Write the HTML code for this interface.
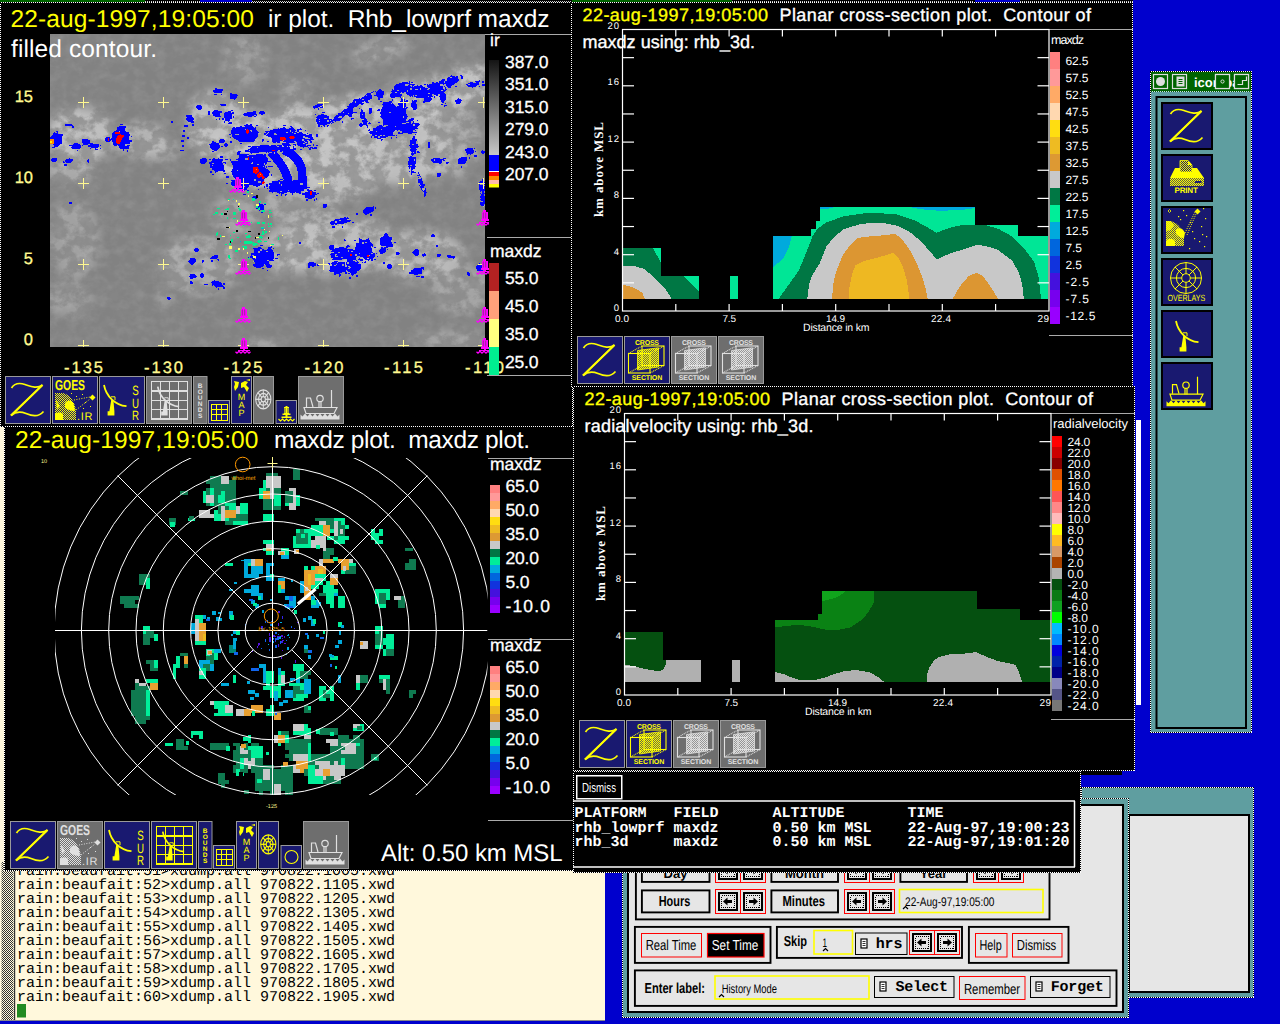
<!DOCTYPE html>
<html><head><meta charset="utf-8"><title>zeb display</title>
<style>html,body{margin:0;padding:0;background:#0000cd;overflow:hidden}svg{display:block}text{text-rendering:geometricPrecision}</style></head>
<body>
<svg width="1280" height="1024" viewBox="0 0 1280 1024">
<defs>
<pattern id="dith" width="2" height="2" patternUnits="userSpaceOnUse"><rect width="2" height="2" fill="#fff8dc"/><rect width="1" height="1" fill="#333"/><rect x="1" y="1" width="1" height="1" fill="#333"/></pattern>
<pattern id="dith2" width="2" height="2" patternUnits="userSpaceOnUse"><rect width="2" height="2" fill="#e6e6e6"/><rect width="1" height="1" fill="#000"/><rect x="1" y="1" width="1" height="1" fill="#000"/></pattern>
<pattern id="dithy" width="2" height="2" patternUnits="userSpaceOnUse"><rect width="1" height="1" fill="#ffff00"/><rect x="1" y="1" width="1" height="1" fill="#ffff00"/></pattern>
<pattern id="dithw" width="2" height="2" patternUnits="userSpaceOnUse"><rect width="1" height="1" fill="#e0e0e0"/><rect x="1" y="1" width="1" height="1" fill="#e0e0e0"/></pattern>
<linearGradient id="irg" x1="0" y1="0" x2="0" y2="1"><stop offset="0" stop-color="#141414"/><stop offset="1" stop-color="#c8c8c8"/></linearGradient>

<clipPath id="irclip"><rect x="50" y="34" width="435" height="313"/></clipPath>
<filter id="cloudtex" x="0" y="0" width="100%" height="100%" color-interpolation-filters="sRGB">
<feTurbulence type="fractalNoise" baseFrequency="0.075 0.085" numOctaves="5" seed="11" result="n"/>
<feColorMatrix in="n" type="matrix" values="0 0 0 0 1  0 0 0 0 1  0 0 0 0 1  4.2 0 0 0 -1.75"/>
</filter>
<filter id="finetex" x="0" y="0" width="100%" height="100%" color-interpolation-filters="sRGB">
<feTurbulence type="fractalNoise" baseFrequency="0.09 0.11" numOctaves="3" seed="5" result="n"/>
<feColorMatrix in="n" type="matrix" values="0 0 0 0 1  0 0 0 0 1  0 0 0 0 1  1.6 0 0 0 -0.62"/>
</filter>
<filter id="blur8"><feGaussianBlur stdDeviation="8"/></filter>
<filter id="blur5"><feGaussianBlur stdDeviation="5"/></filter>
<filter id="blur3"><feGaussianBlur stdDeviation="2.5"/></filter>
<mask id="cloudmask" maskUnits="userSpaceOnUse" x="50" y="34" width="435" height="313">
<rect x="50" y="34" width="435" height="313" fill="#141414"/>
<g filter="url(#blur5)" fill="#fff">
<ellipse cx="80" cy="135" rx="34" ry="28" transform="rotate(0 80 135)" opacity="0.9"/>
<ellipse cx="70" cy="170" rx="25" ry="14" transform="rotate(0 70 170)" opacity="0.6"/>
<ellipse cx="140" cy="140" rx="30" ry="18" transform="rotate(0 140 140)" opacity="0.7"/>
<ellipse cx="160" cy="150" rx="20" ry="12" transform="rotate(0 160 150)" opacity="0.5"/>
<ellipse cx="215" cy="125" rx="30" ry="35" transform="rotate(0 215 125)" opacity="0.9"/>
<ellipse cx="250" cy="150" rx="40" ry="40" transform="rotate(0 250 150)" opacity="1.0"/>
<ellipse cx="300" cy="140" rx="45" ry="35" transform="rotate(0 300 140)" opacity="1.0"/>
<ellipse cx="350" cy="125" rx="50" ry="30" transform="rotate(-15 350 125)" opacity="1.0"/>
<ellipse cx="410" cy="105" rx="50" ry="25" transform="rotate(-20 410 105)" opacity="1.0"/>
<ellipse cx="465" cy="85" rx="30" ry="20" transform="rotate(-20 465 85)" opacity="1.0"/>
<ellipse cx="400" cy="150" rx="50" ry="35" transform="rotate(0 400 150)" opacity="0.9"/>
<ellipse cx="340" cy="170" rx="45" ry="30" transform="rotate(0 340 170)" opacity="0.9"/>
<ellipse cx="450" cy="140" rx="30" ry="40" transform="rotate(0 450 140)" opacity="0.6"/>
<ellipse cx="300" cy="200" rx="40" ry="25" transform="rotate(0 300 200)" opacity="0.6"/>
<ellipse cx="340" cy="245" rx="60" ry="30" transform="rotate(0 340 245)" opacity="0.9"/>
<ellipse cx="420" cy="255" rx="45" ry="25" transform="rotate(0 420 255)" opacity="0.8"/>
<ellipse cx="290" cy="250" rx="30" ry="25" transform="rotate(0 290 250)" opacity="0.7"/>
<ellipse cx="460" cy="290" rx="30" ry="25" transform="rotate(0 460 290)" opacity="0.5"/>
<ellipse cx="200" cy="265" rx="40" ry="30" transform="rotate(0 200 265)" opacity="0.6"/>
<ellipse cx="75" cy="240" rx="25" ry="40" transform="rotate(0 75 240)" opacity="0.45"/>
<ellipse cx="70" cy="300" rx="25" ry="18" transform="rotate(0 70 300)" opacity="0.4"/>
<ellipse cx="235" cy="215" rx="25" ry="20" transform="rotate(0 235 215)" opacity="0.5"/>
<ellipse cx="245" cy="60" rx="22" ry="25" transform="rotate(0 245 60)" opacity="0.4"/>
<ellipse cx="380" cy="50" rx="30" ry="12" transform="rotate(-15 380 50)" opacity="0.5"/>
<ellipse cx="295" cy="90" rx="14" ry="16" transform="rotate(30 295 90)" opacity="0.4"/>
<ellipse cx="450" cy="340" rx="35" ry="10" transform="rotate(0 450 340)" opacity="0.5"/>
<ellipse cx="165" cy="300" rx="12" ry="10" transform="rotate(0 165 300)" opacity="0.3"/>
<ellipse cx="260" cy="345" rx="20" ry="6" transform="rotate(0 260 345)" opacity="0.6"/>
</g>
</mask>
<clipPath id="bclip"><rect x="470" y="34" width="19" height="330"/></clipPath><clipPath id="rclip"><rect x="55" y="458" width="432.5" height="337"/></clipPath>
</defs>
<rect x="0" y="0" width="1280" height="1024" fill="#0000cd" />
<rect x="0" y="0" width="145" height="2" fill="#006400" />
<rect x="572" y="0" width="160" height="2" fill="#006400" />
<rect x="145" y="0" width="55" height="3" fill="#000" />
<rect x="252" y="0" width="320" height="3" fill="#000" />
<rect x="732" y="0" width="243" height="3" fill="#000" />
<rect x="1020" y="0" width="113" height="3" fill="#000" />
<line x1="145" y1="1.5" x2="200" y2="1.5" stroke="#ccc" stroke-width="1" stroke-dasharray="1 1"/>
<line x1="252" y1="1.5" x2="572" y2="1.5" stroke="#ccc" stroke-width="1" stroke-dasharray="1 1"/>
<line x1="732" y1="1.5" x2="974" y2="1.5" stroke="#ccc" stroke-width="1" stroke-dasharray="1 1"/>
<line x1="1020" y1="1.5" x2="1133" y2="1.5" stroke="#ccc" stroke-width="1" stroke-dasharray="1 1"/>
<rect x="0" y="427" width="605" height="594" fill="#fff8dc" />
<rect x="1.5" y="862" width="12" height="159" fill="url(#dith)"/>
<rect x="14" y="870" width="1.2" height="151" fill="#333" />
<text x="17" y="875" font-size="15" fill="#000" font-family='"Liberation Mono", monospace' textLength="378" lengthAdjust="spacing" style="white-space:pre">rain:beaufait:51&gt;xdump.all 970822.1005.xwd</text>
<text x="17" y="889" font-size="15" fill="#000" font-family='"Liberation Mono", monospace' textLength="378" lengthAdjust="spacing" style="white-space:pre">rain:beaufait:52&gt;xdump.all 970822.1105.xwd</text>
<text x="17" y="903" font-size="15" fill="#000" font-family='"Liberation Mono", monospace' textLength="378" lengthAdjust="spacing" style="white-space:pre">rain:beaufait:53&gt;xdump.all 970822.1205.xwd</text>
<text x="17" y="917" font-size="15" fill="#000" font-family='"Liberation Mono", monospace' textLength="378" lengthAdjust="spacing" style="white-space:pre">rain:beaufait:54&gt;xdump.all 970822.1305.xwd</text>
<text x="17" y="931" font-size="15" fill="#000" font-family='"Liberation Mono", monospace' textLength="378" lengthAdjust="spacing" style="white-space:pre">rain:beaufait:55&gt;xdump.all 970822.1405.xwd</text>
<text x="17" y="945" font-size="15" fill="#000" font-family='"Liberation Mono", monospace' textLength="378" lengthAdjust="spacing" style="white-space:pre">rain:beaufait:56&gt;xdump.all 970822.1505.xwd</text>
<text x="17" y="959" font-size="15" fill="#000" font-family='"Liberation Mono", monospace' textLength="378" lengthAdjust="spacing" style="white-space:pre">rain:beaufait:57&gt;xdump.all 970822.1605.xwd</text>
<text x="17" y="973" font-size="15" fill="#000" font-family='"Liberation Mono", monospace' textLength="378" lengthAdjust="spacing" style="white-space:pre">rain:beaufait:58&gt;xdump.all 970822.1705.xwd</text>
<text x="17" y="987" font-size="15" fill="#000" font-family='"Liberation Mono", monospace' textLength="378" lengthAdjust="spacing" style="white-space:pre">rain:beaufait:59&gt;xdump.all 970822.1805.xwd</text>
<text x="17" y="1001" font-size="15" fill="#000" font-family='"Liberation Mono", monospace' textLength="378" lengthAdjust="spacing" style="white-space:pre">rain:beaufait:60&gt;xdump.all 970822.1905.xwd</text>
<rect x="17" y="1004" width="9" height="13.5" fill="#228b22" />
<rect x="0" y="1020" width="605" height="1" fill="#888" />
<rect x="1081" y="787" width="173" height="211" fill="#5f9ea0" />
<rect x="1081.5" y="787.5" width="172" height="210" fill="none" stroke="#000" stroke-width="1" shape-rendering="crispEdges"/>
<rect x="1081.5" y="787.5" width="172" height="210" fill="none" stroke="#fff" stroke-width="1" stroke-dasharray="1 1" shape-rendering="crispEdges"/>
<rect x="1128" y="814" width="122" height="179" fill="#000" />
<rect x="1130" y="816" width="118" height="175" fill="#e6e6e6" />
<rect x="622" y="798" width="507" height="220" fill="#5f9ea0" />
<rect x="622.5" y="798.5" width="506" height="219" fill="none" stroke="#000" stroke-width="1" shape-rendering="crispEdges"/>
<rect x="622.5" y="798.5" width="506" height="219" fill="none" stroke="#fff" stroke-width="1" stroke-dasharray="1 1" shape-rendering="crispEdges"/>
<rect x="627" y="804" width="497" height="209" fill="#000" />
<rect x="629" y="806" width="493" height="205" fill="#e6e6e6" />
<rect x="635.9" y="830.9" width="413.6" height="88.5" fill="none" stroke="#000" stroke-width="1.9"/>
<rect x="641.9" y="860.9" width="67.6" height="21.0" fill="none" stroke="#000" stroke-width="1.9"/>
<text x="675.5" y="878" font-size="13" fill="#000" font-family='"Liberation Sans", sans-serif' font-weight="bold" text-anchor="middle" style="white-space:pre">Day</text>
<rect x="771.4" y="860.9" width="66.6" height="21.0" fill="none" stroke="#000" stroke-width="1.9"/>
<text x="804.5" y="878" font-size="13" fill="#000" font-family='"Liberation Sans", sans-serif' font-weight="bold" text-anchor="middle" style="white-space:pre">Month</text>
<rect x="900.4" y="860.9" width="66.6" height="21.0" fill="none" stroke="#000" stroke-width="1.9"/>
<text x="933.5" y="878" font-size="13" fill="#000" font-family='"Liberation Sans", sans-serif' font-weight="bold" text-anchor="middle" style="white-space:pre">Year</text>
<rect x="715.5" y="858.5" width="25" height="24" fill="#e6e6e6" stroke="#ff0000" stroke-width="1" shape-rendering="crispEdges"/>
<rect x="719" y="862" width="18" height="17" fill="#e6e6e6" stroke="#000" stroke-width="2" shape-rendering="crispEdges"/>
<rect x="721.5" y="864.5" width="13" height="12" fill="none" stroke="#000" stroke-width="1" stroke-dasharray="1 1" shape-rendering="crispEdges"/>
<path d="M723.0 870.5l4.5 -4v2.6h4.5v2.8h-4.5v2.6z" fill="#000"/>
<rect x="740.5" y="858.5" width="25" height="24" fill="#e6e6e6" stroke="#ff0000" stroke-width="1" shape-rendering="crispEdges"/>
<rect x="744" y="862" width="18" height="17" fill="#e6e6e6" stroke="#000" stroke-width="2" shape-rendering="crispEdges"/>
<rect x="746.5" y="864.5" width="13" height="12" fill="none" stroke="#000" stroke-width="1" stroke-dasharray="1 1" shape-rendering="crispEdges"/>
<path d="M758.0 870.5l-4.5 -4v2.6h-4.5v2.8h4.5v2.6z" fill="#000"/>
<rect x="844.5" y="858.5" width="25" height="24" fill="#e6e6e6" stroke="#ff0000" stroke-width="1" shape-rendering="crispEdges"/>
<rect x="848" y="862" width="18" height="17" fill="#e6e6e6" stroke="#000" stroke-width="2" shape-rendering="crispEdges"/>
<rect x="850.5" y="864.5" width="13" height="12" fill="none" stroke="#000" stroke-width="1" stroke-dasharray="1 1" shape-rendering="crispEdges"/>
<path d="M852.0 870.5l4.5 -4v2.6h4.5v2.8h-4.5v2.6z" fill="#000"/>
<rect x="869.5" y="858.5" width="25" height="24" fill="#e6e6e6" stroke="#ff0000" stroke-width="1" shape-rendering="crispEdges"/>
<rect x="873" y="862" width="18" height="17" fill="#e6e6e6" stroke="#000" stroke-width="2" shape-rendering="crispEdges"/>
<rect x="875.5" y="864.5" width="13" height="12" fill="none" stroke="#000" stroke-width="1" stroke-dasharray="1 1" shape-rendering="crispEdges"/>
<path d="M887.0 870.5l-4.5 -4v2.6h-4.5v2.8h4.5v2.6z" fill="#000"/>
<rect x="973.5" y="858.5" width="25" height="24" fill="#e6e6e6" stroke="#ff0000" stroke-width="1" shape-rendering="crispEdges"/>
<rect x="977" y="862" width="18" height="17" fill="#e6e6e6" stroke="#000" stroke-width="2" shape-rendering="crispEdges"/>
<rect x="979.5" y="864.5" width="13" height="12" fill="none" stroke="#000" stroke-width="1" stroke-dasharray="1 1" shape-rendering="crispEdges"/>
<path d="M981.0 870.5l4.5 -4v2.6h4.5v2.8h-4.5v2.6z" fill="#000"/>
<rect x="998.5" y="858.5" width="25" height="24" fill="#e6e6e6" stroke="#ff0000" stroke-width="1" shape-rendering="crispEdges"/>
<rect x="1002" y="862" width="18" height="17" fill="#e6e6e6" stroke="#000" stroke-width="2" shape-rendering="crispEdges"/>
<rect x="1004.5" y="864.5" width="13" height="12" fill="none" stroke="#000" stroke-width="1" stroke-dasharray="1 1" shape-rendering="crispEdges"/>
<path d="M1016.0 870.5l-4.5 -4v2.6h-4.5v2.8h4.5v2.6z" fill="#000"/>
<rect x="641.9" y="890.4" width="67.6" height="22.0" fill="none" stroke="#000" stroke-width="1.9"/>
<text x="674.5" y="906" font-size="14.5" fill="#000" font-family='"Liberation Sans", sans-serif' font-weight="bold" text-anchor="middle" textLength="31.5" lengthAdjust="spacingAndGlyphs" style="white-space:pre">Hours</text>
<rect x="771.4" y="890.4" width="66.6" height="22.0" fill="none" stroke="#000" stroke-width="1.9"/>
<text x="803.75" y="906" font-size="14.5" fill="#000" font-family='"Liberation Sans", sans-serif' font-weight="bold" text-anchor="middle" textLength="42.5" lengthAdjust="spacingAndGlyphs" style="white-space:pre">Minutes</text>
<rect x="715.5" y="889.5" width="25" height="24" fill="#e6e6e6" stroke="#ff0000" stroke-width="1" shape-rendering="crispEdges"/>
<rect x="719" y="893" width="18" height="17" fill="#e6e6e6" stroke="#000" stroke-width="2" shape-rendering="crispEdges"/>
<rect x="721.5" y="895.5" width="13" height="12" fill="none" stroke="#000" stroke-width="1" stroke-dasharray="1 1" shape-rendering="crispEdges"/>
<path d="M723.0 901.5l4.5 -4v2.6h4.5v2.8h-4.5v2.6z" fill="#000"/>
<rect x="740.5" y="889.5" width="25" height="24" fill="#e6e6e6" stroke="#ff0000" stroke-width="1" shape-rendering="crispEdges"/>
<rect x="744" y="893" width="18" height="17" fill="#e6e6e6" stroke="#000" stroke-width="2" shape-rendering="crispEdges"/>
<rect x="746.5" y="895.5" width="13" height="12" fill="none" stroke="#000" stroke-width="1" stroke-dasharray="1 1" shape-rendering="crispEdges"/>
<path d="M758.0 901.5l-4.5 -4v2.6h-4.5v2.8h4.5v2.6z" fill="#000"/>
<rect x="844.5" y="889.5" width="25" height="24" fill="#e6e6e6" stroke="#ff0000" stroke-width="1" shape-rendering="crispEdges"/>
<rect x="848" y="893" width="18" height="17" fill="#e6e6e6" stroke="#000" stroke-width="2" shape-rendering="crispEdges"/>
<rect x="850.5" y="895.5" width="13" height="12" fill="none" stroke="#000" stroke-width="1" stroke-dasharray="1 1" shape-rendering="crispEdges"/>
<path d="M852.0 901.5l4.5 -4v2.6h4.5v2.8h-4.5v2.6z" fill="#000"/>
<rect x="869.5" y="889.5" width="25" height="24" fill="#e6e6e6" stroke="#ff0000" stroke-width="1" shape-rendering="crispEdges"/>
<rect x="873" y="893" width="18" height="17" fill="#e6e6e6" stroke="#000" stroke-width="2" shape-rendering="crispEdges"/>
<rect x="875.5" y="895.5" width="13" height="12" fill="none" stroke="#000" stroke-width="1" stroke-dasharray="1 1" shape-rendering="crispEdges"/>
<path d="M887.0 901.5l-4.5 -4v2.6h-4.5v2.8h4.5v2.6z" fill="#000"/>
<rect x="899.5" y="889.5" width="143.5" height="23" fill="none" stroke="#ffff00" stroke-width="1.6"/>
<text x="905" y="906" font-size="12.5" fill="#000" font-family='"Liberation Sans", sans-serif' textLength="89.5" lengthAdjust="spacingAndGlyphs" style="white-space:pre">22-Aug-97,19:05:00</text>
<path d="M903 909l2.5-2.5 2.5 2.5" fill="none" stroke="#000" stroke-width="1.2"/>
<rect x="634.9" y="926.9" width="135.6" height="36.0" fill="none" stroke="#000" stroke-width="1.9"/>
<rect x="641.5" y="933.5" width="60" height="23.5" fill="none" stroke="#ff0000" stroke-width="1"/>
<text x="671" y="950" font-size="14.5" fill="#000" font-family='"Liberation Sans", sans-serif' text-anchor="middle" textLength="50.75" lengthAdjust="spacingAndGlyphs" style="white-space:pre">Real Time</text>
<rect x="707.5" y="933.5" width="56.5" height="23.5" fill="#000" stroke="#ff0000" stroke-width="1.2"/>
<text x="735" y="950" font-size="14.5" fill="#fff" font-family='"Liberation Sans", sans-serif' text-anchor="middle" textLength="46.5" lengthAdjust="spacingAndGlyphs" style="white-space:pre">Set Time</text>
<rect x="776.9" y="926.9" width="185.1" height="31.0" fill="none" stroke="#000" stroke-width="1.9"/>
<text x="783.75" y="946" font-size="14.5" fill="#000" font-family='"Liberation Sans", sans-serif' font-weight="bold" textLength="23.25" lengthAdjust="spacingAndGlyphs" style="white-space:pre">Skip</text>
<rect x="814" y="930.5" width="38.5" height="23.5" fill="none" stroke="#ffff00" stroke-width="1.6"/>
<text x="822.5" y="946.5" font-size="12.5" fill="#000" font-family='"Liberation Sans", sans-serif' textLength="4.5" lengthAdjust="spacingAndGlyphs" style="white-space:pre">1</text>
<path d="M823 951l2.5-2.5 2.5 2.5" fill="none" stroke="#000" stroke-width="1.2"/>
<rect x="855.5" y="933" width="51.5" height="21.5" fill="none" stroke="#000" stroke-width="1"/>
<rect x="861" y="939" width="6" height="9" fill="#fff" stroke="#000" stroke-width="1.2"/>
<path d="M862.5 941.5h3M862.5 943.5h3M862.5 945.5h3" stroke="#000" stroke-width="0.8"/>
<text x="875.75" y="948" font-size="15" fill="#000" font-family='"Liberation Mono", monospace' font-weight="bold" textLength="26.75" lengthAdjust="spacing" style="white-space:pre">hrs</text>
<rect x="909.5" y="930.5" width="25" height="24" fill="#e6e6e6" stroke="#ff0000" stroke-width="1" shape-rendering="crispEdges"/>
<rect x="913" y="934" width="18" height="17" fill="#e6e6e6" stroke="#000" stroke-width="2" shape-rendering="crispEdges"/>
<rect x="915.5" y="936.5" width="13" height="12" fill="none" stroke="#000" stroke-width="1" stroke-dasharray="1 1" shape-rendering="crispEdges"/>
<path d="M917.0 942.5l4.5 -4v2.6h4.5v2.8h-4.5v2.6z" fill="#000"/>
<rect x="934.5" y="930.5" width="25" height="24" fill="#e6e6e6" stroke="#ff0000" stroke-width="1" shape-rendering="crispEdges"/>
<rect x="938" y="934" width="18" height="17" fill="#e6e6e6" stroke="#000" stroke-width="2" shape-rendering="crispEdges"/>
<rect x="940.5" y="936.5" width="13" height="12" fill="none" stroke="#000" stroke-width="1" stroke-dasharray="1 1" shape-rendering="crispEdges"/>
<path d="M952.0 942.5l-4.5 -4v2.6h-4.5v2.8h4.5v2.6z" fill="#000"/>
<rect x="968.9" y="926.9" width="99.6" height="36.0" fill="none" stroke="#000" stroke-width="1.9"/>
<rect x="975.5" y="933.5" width="31.5" height="23.5" fill="none" stroke="#ff0000" stroke-width="1"/>
<text x="990.6" y="950" font-size="14.5" fill="#000" font-family='"Liberation Sans", sans-serif' text-anchor="middle" textLength="22.25" lengthAdjust="spacingAndGlyphs" style="white-space:pre">Help</text>
<rect x="1012.5" y="933.5" width="49.5" height="23.5" fill="none" stroke="#ff0000" stroke-width="1"/>
<text x="1036.5" y="950" font-size="14.5" fill="#000" font-family='"Liberation Sans", sans-serif' text-anchor="middle" textLength="39.5" lengthAdjust="spacingAndGlyphs" style="white-space:pre">Dismiss</text>
<rect x="634.9" y="970.4" width="481.6" height="35.5" fill="none" stroke="#000" stroke-width="1.9"/>
<text x="644.5" y="993" font-size="14.5" fill="#000" font-family='"Liberation Sans", sans-serif' font-weight="bold" textLength="60.5" lengthAdjust="spacingAndGlyphs" style="white-space:pre">Enter label:</text>
<rect x="715" y="976" width="154" height="23" fill="none" stroke="#ffff00" stroke-width="1.6"/>
<text x="721.75" y="992.5" font-size="12.5" fill="#000" font-family='"Liberation Sans", sans-serif' textLength="55.25" lengthAdjust="spacingAndGlyphs" style="white-space:pre">History Mode</text>
<path d="M719 997l2.5-2.5 2.5 2.5" fill="none" stroke="#000" stroke-width="1.2"/>
<rect x="874.5" y="976.5" width="79.5" height="21" fill="none" stroke="#000" stroke-width="1"/>
<rect x="880" y="982" width="6" height="9" fill="#fff" stroke="#000" stroke-width="1.2"/>
<path d="M881.5 984.5h3M881.5 986.5h3M881.5 988.5h3" stroke="#000" stroke-width="0.8"/>
<text x="895.5" y="990.5" font-size="15" fill="#000" font-family='"Liberation Mono", monospace' font-weight="bold" textLength="52.5" lengthAdjust="spacing" style="white-space:pre">Select</text>
<rect x="959.5" y="976.5" width="65.5" height="23" fill="none" stroke="#ff0000" stroke-width="1"/>
<text x="992" y="993.75" font-size="14.5" fill="#000" font-family='"Liberation Sans", sans-serif' text-anchor="middle" textLength="56.25" lengthAdjust="spacingAndGlyphs" style="white-space:pre">Remember</text>
<rect x="1030.5" y="976.5" width="79.5" height="21" fill="none" stroke="#000" stroke-width="1"/>
<rect x="1036" y="982" width="6" height="9" fill="#fff" stroke="#000" stroke-width="1.2"/>
<path d="M1037.5 984.5h3M1037.5 986.5h3M1037.5 988.5h3" stroke="#000" stroke-width="0.8"/>
<text x="1050.75" y="990.5" font-size="15" fill="#000" font-family='"Liberation Mono", monospace' font-weight="bold" textLength="53" lengthAdjust="spacing" style="white-space:pre">Forget</text>
<rect x="1150" y="71" width="102" height="662" fill="#5f9ea0" />
<rect x="1150" y="71" width="102" height="21" fill="#006400" />
<rect x="1150.5" y="71.5" width="101" height="661" fill="none" stroke="#000" stroke-width="1" shape-rendering="crispEdges"/>
<rect x="1150.5" y="71.5" width="101" height="661" fill="none" stroke="#fff" stroke-width="1" stroke-dasharray="1 1" shape-rendering="crispEdges"/>
<line x1="1150" y1="91.5" x2="1252" y2="91.5" stroke="#cde" stroke-width="1" stroke-dasharray="1 1"/>
<rect x="1153.5" y="74.5" width="14" height="14" fill="#006400" stroke="#ddd" stroke-width="1.2"/>
<rect x="1172.5" y="74.5" width="14" height="14" fill="#006400" stroke="#ddd" stroke-width="1.2"/>
<rect x="1215.5" y="74.5" width="14" height="14" fill="#006400" stroke="#ddd" stroke-width="1.2"/>
<rect x="1234.5" y="74.5" width="14" height="14" fill="#006400" stroke="#ddd" stroke-width="1.2"/>
<circle cx="1160.5" cy="81.5" r="4.5" fill="#ddd"/>
<rect x="1177" y="77" width="7" height="9" fill="#ddd" stroke="#ddd"/>
<path d="M1178.5 79.5h4M1178.5 81.5h4M1178.5 83.5h4" stroke="#006400" stroke-width="1"/>
<text x="1194" y="87" font-size="13" fill="#fff" font-family='"Liberation Sans", sans-serif' font-weight="bold" style="white-space:pre">icon bar</text>
<rect x="1215.5" y="74.5" width="14" height="14" fill="#006400" stroke="#ddd" stroke-width="1.2"/>
<rect x="1234.5" y="74.5" width="14" height="14" fill="#006400" stroke="#ddd" stroke-width="1.2"/>
<circle cx="1222.5" cy="81.5" r="1.6" fill="none" stroke="#ddd" stroke-width="1"/>
<path d="M1237.5 84.5h5v-4h4v-4" fill="none" stroke="#ddd" stroke-width="1.2"/>
<rect x="1156.5" y="97" width="89.5" height="631" fill="none" stroke="#000" stroke-width="2"/>
<rect x="1162" y="103" width="50" height="46" fill="#191970" stroke="#000" stroke-width="2"/>
<rect x="1162" y="155" width="50" height="46" fill="#191970" stroke="#000" stroke-width="2"/>
<rect x="1162" y="207" width="50" height="46" fill="#191970" stroke="#000" stroke-width="2"/>
<rect x="1162" y="259" width="50" height="46" fill="#191970" stroke="#000" stroke-width="2"/>
<rect x="1162" y="311" width="50" height="46" fill="#191970" stroke="#000" stroke-width="2"/>
<rect x="1162" y="363" width="50" height="46" fill="#191970" stroke="#000" stroke-width="2"/>
<g transform="translate(1161,102)">
<g transform="translate(3,0)">
<path d="M6.5 12C9 8 14 6.5 20 8.5S32 13 37.5 9L6 39.5C10 36 15 35 21 37.5S33 41.5 38.5 35.5" fill="none" stroke="#ffff00" stroke-width="1.7" stroke-linejoin="miter"/>
<path d="M37.5 9L6 39.5" stroke="#ffff00" stroke-width="2.1"/>
</g>
</g>
<g transform="translate(1161,154)">
<path d="M19 6.5h8l4 4.5v7h-12z" fill="url(#dithy)" stroke="#ffff00" stroke-width="0.8"/>
<path d="M27 6.5v4.5h4z" fill="#ffff00"/>
<path d="M14 14h5v4h12v-4h5l7 10h-34z" fill="#ffff00"/>
<rect x="9" y="24" width="34" height="8" fill="url(#dithy)"/>
<rect x="9" y="24" width="34" height="8" fill="#ffff00" opacity="0.3"/>
<rect x="34" y="27" width="6.5" height="2" fill="#191970"/>
<text x="25.2" y="39.2" font-size="8" fill="#ffff00" font-family='"Liberation Sans", sans-serif' font-weight="bold" text-anchor="middle" textLength="23.2" lengthAdjust="spacing" style="white-space:pre">PRINT</text>
</g>
<g transform="translate(1161,206)">
<path d="M5 15h4c9 2 14 10 14 20v5H5z" fill="url(#dithy)"/>
<path d="M5 15h4c9 2 14 10 14 20v5H5z" fill="#ffff00" opacity="0.25"/>
<path d="M15 24c3-3 7-2 9 3l-1 5c-4 0-6-2-8-4zM5 40v-5c2-3 7-3 9 0v5z" fill="#ffff00"/>
<path d="M5 15h5l3 4l-3 5l-5 1z" fill="#ffff00" opacity="0.8"/>
<path d="M24 27L34 6M26 29L35 8" stroke="#ffff00" stroke-width="1" stroke-dasharray="1 1.2"/>
<path d="M36.5 2.5l3 3l-3 3l-3-3z" fill="#ffff00"/>
<rect x="17" y="10" width="1.2" height="1.2" fill="#ffff00" />
<rect x="22" y="4" width="1.2" height="1.2" fill="#ffff00" />
<rect x="25" y="9" width="1.2" height="1.2" fill="#ffff00" />
<rect x="29" y="16" width="1.2" height="1.2" fill="#ffff00" />
<rect x="42" y="2" width="1.2" height="1.2" fill="#ffff00" />
<rect x="44" y="12" width="1.2" height="1.2" fill="#ffff00" />
<rect x="40" y="20" width="1.2" height="1.2" fill="#ffff00" />
<rect x="31" y="25" width="1.2" height="1.2" fill="#ffff00" />
<rect x="33" y="32" width="1.2" height="1.2" fill="#ffff00" />
<rect x="41" y="28" width="1.2" height="1.2" fill="#ffff00" />
<rect x="45" y="30" width="1.2" height="1.2" fill="#ffff00" />
<rect x="38" y="35" width="1.2" height="1.2" fill="#ffff00" />
<rect x="43" y="40" width="1.2" height="1.2" fill="#ffff00" />
<rect x="28" y="42" width="1.2" height="1.2" fill="#ffff00" />
<rect x="19" y="13" width="1.2" height="1.2" fill="#ffff00" />
<path d="M8.5 3.5l1.5 1.5l-1.5 1.5l-1.5-1.5z" fill="none" stroke="#ffff00" stroke-width="0.8"/>
</g>
<g transform="translate(1161,258)">
<g fill="none" stroke="#ffff00" stroke-width="1" transform="translate(0,0.00) scale(1,1.0)">
<circle cx="25" cy="20" r="15.5"/><circle cx="25" cy="20" r="9.6"/><circle cx="25" cy="20" r="4.3"/>
<path d="M29.3 20.0L40.5 20.0"/>
<path d="M28.1 23.1L36.0 31.0"/>
<path d="M25.0 24.3L25.0 35.5"/>
<path d="M21.9 23.1L14.0 31.0"/>
<path d="M20.7 20.0L9.5 20.0"/>
<path d="M21.9 16.9L14.0 9.0"/>
<path d="M25.0 15.7L25.0 4.5"/>
<path d="M28.1 16.9L36.0 9.0"/>
</g>
<text x="25.3" y="42.9" font-size="9" fill="#ffff00" font-family='"Liberation Sans", sans-serif' text-anchor="middle" textLength="37.6" lengthAdjust="spacingAndGlyphs" style="white-space:pre">OVERLAYS</text>
</g>
<g transform="translate(1161,310)">
<g transform="translate(10,2) scale(1.0)">
<path d="M5 9C7 20 16 29 27.5 30.2" fill="none" stroke="#ffff00" stroke-width="1.8"/>
<path d="M12 20.8h4v3.4" fill="none" stroke="#ffff00" stroke-width="1"/>
<path d="M12.2 24h2.2l1 11.2v4.3h-6.8v-4.3h1.8z" fill="#ffff00"/>
</g>
</g>
<g transform="translate(1161,362)">
<g transform="translate(3,-0.3)" fill="none" stroke="#ffff00" stroke-width="1.2">
<path d="M6 32.5h33l-3 6h-28z"/>
<path d="M8.5 32v-9h4l2.5 9"/>
<circle cx="22" cy="23.5" r="3.2"/><path d="M21 26.7v6M23 26.7v6"/>
<path d="M33.5 15v17.5"/>
<path d="M2.5 44.5v-5l2 2l2.5-3l2.5 3l2.5-3l2.5 3l2.5-3l2.5 3l2.5-3l2.5 3l2.5-3l2.5 3l2.5-3l2.5 3l2.5-3l2.5 3l2-2v5z" fill="#ffff00" stroke="none"/>
</g>
</g>
<rect x="0" y="2" width="573" height="425" fill="#000" />
<rect x="0.5" y="2.5" width="572" height="424" fill="none" stroke="#000" stroke-width="1" shape-rendering="crispEdges"/>
<rect x="0.5" y="2.5" width="572" height="424" fill="none" stroke="#fff" stroke-width="1" stroke-dasharray="1 1" shape-rendering="crispEdges"/>
<line x1="485" y1="34.5" x2="572" y2="34.5" stroke="#aaa" stroke-width="1" />
<line x1="487" y1="237.5" x2="572" y2="237.5" stroke="#aaa" stroke-width="1" />
<line x1="487" y1="375.5" x2="572" y2="375.5" stroke="#aaa" stroke-width="1" />
<rect x="50" y="34" width="435" height="313" fill="#808080" />
<g clip-path="url(#irclip)">
<rect x="50" y="34" width="435" height="313" fill="#fff" filter="url(#finetex)" opacity="0.10"/>
<g mask="url(#cloudmask)"><rect x="50" y="34" width="435" height="313" fill="#fff" filter="url(#cloudtex)" opacity="0.42"/><rect x="50" y="34" width="435" height="313" fill="#fff" opacity="0.19"/></g>
<g shape-rendering="crispEdges">
<polygon points="62.2,140.0 62.4,142.9 60.1,144.8 57.6,146.6 54.4,146.7 52.5,144.1 51.0,142.2 48.0,140.0 50.4,137.5 52.1,135.5 54.1,132.3 57.5,133.7 61.0,134.2 62.2,137.2" fill="#0000ff"/>
<polygon points="73.1,125.0 72.5,125.5 71.6,126.1 69.8,126.1 68.0,126.4 66.2,126.2 65.2,125.6 65.6,125.0 65.4,124.4 66.7,124.1 68.2,123.9 70.1,123.5 72.0,123.8 71.9,124.5" fill="#0000ff"/>
<polygon points="81.0,146.0 81.1,147.5 79.7,148.8 77.0,148.7 74.8,149.3 72.6,148.6 71.2,147.4 71.9,146.0 72.4,145.0 73.0,143.8 74.8,142.8 77.0,143.4 79.1,143.7 80.1,144.8" fill="#0000ff"/>
<polygon points="90.4,142.0 90.1,143.5 88.1,144.0 87.1,145.6 85.2,144.5 83.3,144.5 83.0,143.1 81.5,142.0 82.9,140.9 83.3,139.4 85.0,138.8 87.0,138.7 88.4,139.7 90.2,140.5" fill="#0000ff"/>
<polygon points="98.7,146.0 98.5,146.9 97.6,147.9 95.4,148.6 92.9,148.0 90.9,147.6 89.2,147.0 87.3,146.0 89.4,145.1 89.9,143.8 92.6,143.4 95.1,144.0 97.8,144.0 99.3,144.9" fill="#0000ff"/>
<polygon points="57.1,160.0 56.7,161.1 56.0,162.0 54.6,162.2 53.3,162.5 52.2,161.9 51.2,161.1 51.2,160.0 51.4,158.9 52.2,158.1 53.4,157.6 54.7,157.5 55.9,158.1 57.0,158.8" fill="#0000ff"/>
<polygon points="72.9,160.0 73.2,161.0 71.6,161.9 70.5,162.9 68.7,163.1 67.3,163.1 65.7,162.9 65.4,162.0 65.2,161.0 65.4,159.7 67.7,159.3 69.4,158.2 70.9,158.8 73.1,158.6" fill="#0000ff"/>
<polygon points="89.6,161.0 89.1,161.8 88.5,162.5 87.5,162.4 86.7,162.0 86.5,161.0 86.7,160.0 87.6,159.7 88.5,159.4 89.2,160.1" fill="#0000ff"/>
<polygon points="128.5,138.0 130.7,141.4 129.6,144.5 125.4,144.0 125.1,148.5 122.3,148.8 119.7,148.7 118.2,145.1 114.6,146.6 114.2,143.1 111.7,141.2 112.4,138.0 111.9,134.9 113.1,132.0 115.8,131.0 117.2,128.2 119.5,126.1 122.4,126.4 125.2,127.3 125.6,131.8 128.6,132.3 130.4,134.8" fill="#0000ff"/>
<polygon points="110.7,139.5 110.7,140.6 109.8,141.4 108.7,141.9 107.4,141.8 106.0,141.6 105.3,140.6 104.9,139.5 105.1,138.3 106.1,137.5 107.3,137.1 108.6,137.2 110.0,137.4 110.5,138.5" fill="#0000ff"/>
<polygon points="126.4,127.0 126.0,127.7 124.8,128.2 123.2,128.1 121.9,127.7 121.5,127.0 122.0,126.3 123.3,125.9 124.7,125.9 125.9,126.3" fill="#0000ff"/>
<polygon points="129.4,147.5 129.0,148.4 127.8,149.0 126.2,149.1 125.0,148.4 124.5,147.5 125.0,146.6 126.2,146.1 127.8,146.0 129.2,146.5" fill="#0000ff"/>
<polygon points="222.2,91.0 221.9,91.9 221.6,93.2 219.1,93.5 217.0,93.2 215.1,92.8 213.4,92.1 213.4,91.0 213.1,89.8 215.4,89.4 217.0,88.7 219.0,88.8 221.5,88.8 223.2,89.8" fill="#0000ff"/>
<polygon points="237.4,96.5 236.4,97.8 235.6,99.0 234.3,99.8 232.8,99.2 231.1,99.2 229.4,98.3 229.8,96.5 229.6,94.8 230.7,93.2 232.8,93.8 234.2,93.8 235.8,93.8 237.6,94.7" fill="#0000ff"/>
<polygon points="226.0,105.0 225.5,105.5 225.0,106.1 223.7,106.4 222.3,106.3 221.1,106.0 220.5,105.5 220.2,105.0 220.4,104.5 221.1,103.9 222.4,103.8 223.7,103.6 224.7,104.1 225.5,104.5" fill="#0000ff"/>
<polygon points="201.8,107.5 201.9,108.7 201.0,109.6 199.7,109.9 198.4,109.8 197.2,109.3 196.5,108.5 196.2,107.5 196.5,106.5 197.0,105.4 198.4,105.2 199.6,105.2 201.0,105.4 201.9,106.3" fill="#0000ff"/>
<polygon points="221.0,117.4 218.8,117.3 217.3,117.2 215.8,116.7 213.7,116.2 212.5,114.3 212.0,112.2 213.3,110.9 214.7,110.0 216.6,109.8 218.4,110.8 220.0,112.0 220.3,113.8 220.3,115.2" fill="#0000ff"/>
<polygon points="232.0,116.0 231.8,118.3 230.3,119.6 229.1,121.8 227.0,121.4 225.2,120.4 224.5,118.1 223.4,116.0 224.0,113.6 225.4,111.9 227.3,112.0 228.9,111.2 231.0,111.3 231.7,113.8" fill="#0000ff"/>
<polygon points="256.7,114.0 256.6,115.1 253.6,115.5 251.7,116.5 248.3,116.5 245.1,116.1 243.8,115.0 244.0,114.0 243.3,112.9 246.6,112.6 248.5,111.8 251.2,112.2 254.6,112.1 256.0,113.0" fill="#0000ff"/>
<polygon points="265.0,113.0 264.7,113.8 263.8,114.4 262.7,114.8 261.3,114.7 260.3,114.3 259.2,113.8 259.3,113.0 259.0,112.1 260.1,111.5 261.4,111.4 262.6,111.4 264.0,111.5 264.9,112.2" fill="#0000ff"/>
<polygon points="210.6,113.0 210.3,114.3 209.4,114.7 208.6,114.8 207.8,114.1 207.4,113.0 207.8,111.8 208.5,111.1 209.5,111.0 210.2,111.8" fill="#0000ff"/>
<polygon points="193.9,122.3 192.6,123.3 190.5,122.2 188.9,121.8 187.3,120.7 186.8,119.1 186.7,117.7 186.2,115.8 187.9,115.6 189.4,114.9 191.5,115.4 192.7,117.3 194.2,118.9 193.2,120.2" fill="#0000ff"/>
<polygon points="188.6,126.0 187.9,126.8 186.7,127.3 185.3,127.4 184.1,126.8 183.3,126.0 184.1,125.2 185.3,124.7 186.7,124.7 187.9,125.2" fill="#0000ff"/>
<polygon points="185.5,131.0 185.2,131.6 184.5,132.0 183.5,131.9 182.7,131.6 182.5,131.0 182.7,130.4 183.6,130.1 184.5,130.0 185.2,130.4" fill="#0000ff"/>
<polygon points="185.2,136.0 184.8,136.6 184.0,137.0 183.0,136.9 182.2,136.6 181.8,136.0 182.1,135.4 183.0,135.1 184.0,135.0 184.7,135.4" fill="#0000ff"/>
<polygon points="184.2,141.0 183.9,141.6 183.0,142.0 182.0,142.0 181.1,141.6 181.0,141.0 181.1,140.4 182.0,140.0 183.0,140.1 183.9,140.4" fill="#0000ff"/>
<polygon points="184.7,146.0 184.4,146.6 183.5,146.9 182.5,146.9 181.7,146.6 181.4,146.0 181.7,145.4 182.6,145.1 183.5,145.0 184.4,145.4" fill="#0000ff"/>
<polygon points="183.9,150.5 183.6,151.0 182.6,151.4 181.3,151.4 180.4,151.0 180.0,150.5 180.3,150.0 181.4,149.7 182.7,149.6 183.8,149.9" fill="#0000ff"/>
<polygon points="172.9,122.0 172.7,122.7 172.3,123.2 171.7,123.3 171.3,122.7 171.1,122.0 171.3,121.3 171.7,120.8 172.3,120.7 172.8,121.2" fill="#0000ff"/>
<polygon points="188.9,138.0 188.8,138.6 188.3,139.0 187.7,139.0 187.1,138.6 186.9,138.0 187.2,137.4 187.7,137.1 188.3,137.0 188.8,137.4" fill="#0000ff"/>
<polygon points="258.3,134.5 258.2,136.6 255.6,138.1 255.1,140.7 252.1,142.3 247.9,142.2 244.1,142.3 239.9,142.3 237.7,140.1 234.7,138.8 231.8,136.9 231.7,134.5 230.3,131.8 232.2,129.3 235.8,127.6 239.8,126.5 244.1,126.8 248.3,125.1 252.6,126.0 254.7,128.6 256.6,130.5 259.6,132.2" fill="#0000ff"/>
<polygon points="312.1,140.2 306.3,141.4 304.0,143.0 300.5,144.1 296.3,145.1 290.8,145.2 284.6,145.1 280.5,142.3 272.0,141.8 271.8,138.7 269.8,136.5 271.0,134.5 268.6,131.8 270.9,129.8 277.9,130.1 280.7,127.8 287.1,128.6 292.7,130.2 297.9,131.5 300.8,133.7 309.2,135.0 313.7,137.7" fill="#0000ff"/>
<polygon points="309.9,145.6 310.9,147.3 308.6,147.6 304.7,146.3 303.5,147.7 300.1,146.7 297.3,145.1 293.8,144.1 293.0,142.3 289.9,140.8 291.6,139.9 290.9,138.7 288.9,136.5 291.3,136.3 295.4,137.8 296.5,136.3 299.9,138.0 302.8,138.9 304.9,140.3 309.0,141.6 309.8,143.2 309.1,144.3" fill="#0000ff"/>
<polygon points="284.5,147.4 288.3,148.5 285.6,150.1 281.8,151.7 274.7,152.4 269.2,153.2 263.1,154.5 256.5,154.8 250.6,154.5 250.6,152.6 247.1,151.9 242.8,151.0 248.8,149.4 249.9,148.1 251.6,146.6 257.8,145.8 262.9,145.0 268.2,144.8 273.2,144.7 276.0,145.4 281.7,145.3 281.8,146.6" fill="#0000ff"/>
<polygon points="269.6,171.0 269.3,176.0 264.0,179.1 262.5,184.2 257.6,186.9 251.4,185.0 246.1,187.9 240.9,185.8 238.4,181.3 234.7,178.7 232.6,175.0 231.2,171.0 233.7,167.2 230.4,161.0 238.4,160.7 239.5,153.5 246.2,154.3 251.7,155.1 256.9,156.4 261.8,158.5 265.2,162.2 264.5,167.2" fill="#0000ff"/>
<polygon points="268.3,160.0 267.5,162.2 266.6,164.3 264.5,165.8 262.1,166.9 259.4,167.5 256.8,166.4 253.7,167.3 251.6,165.7 250.5,163.8 250.9,161.6 248.6,160.0 250.9,158.4 249.9,156.0 250.9,153.7 254.1,153.4 256.5,151.6 259.4,152.5 261.3,154.3 263.3,155.2 265.8,156.1 267.3,157.9" fill="#0000ff"/>
<polygon points="284.2,187.0 286.2,188.8 285.6,190.7 281.7,190.6 281.5,193.6 278.3,193.2 275.9,192.0 273.0,192.9 270.9,191.7 269.8,190.1 269.2,188.5 268.2,187.0 269.6,185.5 269.1,183.6 271.6,182.8 272.7,180.7 275.7,181.0 278.2,181.4 281.3,180.7 283.8,181.7 283.6,184.2 285.7,185.3" fill="#0000ff"/>
<polygon points="304.3,187.0 304.8,188.9 303.6,190.5 301.9,191.6 300.1,192.5 298.0,192.7 296.1,192.0 293.6,193.1 290.7,192.9 289.4,191.0 290.4,188.6 289.6,187.0 289.2,185.1 291.2,184.0 290.7,181.1 293.3,180.4 295.9,180.5 298.3,179.9 301.0,179.8 302.1,182.2 302.4,184.2 306.0,184.9" fill="#0000ff"/>
<polygon points="246.4,183.0 249.0,185.6 247.5,187.8 245.5,189.4 244.0,191.8 241.0,189.8 239.0,190.2 236.7,190.3 235.8,187.9 234.2,186.7 231.9,185.4 230.5,183.0 232.7,180.9 234.7,179.6 235.8,178.1 236.8,175.9 238.6,173.6 240.9,176.4 243.0,176.5 244.6,177.7 247.7,178.0 248.6,180.5" fill="#0000ff"/>
<polygon points="224.6,165.0 223.7,166.7 224.5,169.2 223.2,171.3 220.1,170.9 218.0,171.3 215.7,172.8 214.2,170.4 211.8,170.3 211.2,168.3 209.8,166.9 210.7,165.0 208.6,162.8 211.2,161.7 211.9,159.9 213.2,157.6 216.1,159.5 218.1,158.4 220.2,158.8 223.3,158.7 223.0,161.6 226.3,162.6" fill="#0000ff"/>
<polygon points="207.3,161.0 206.1,162.1 205.7,163.4 204.2,163.6 202.6,164.4 200.9,163.8 200.2,162.4 200.1,161.0 200.1,159.6 201.7,159.0 202.6,157.5 204.2,158.5 205.9,158.4 206.7,159.7" fill="#0000ff"/>
<polygon points="218.9,143.2 219.5,145.4 219.9,147.5 218.1,148.9 217.0,150.5 215.1,151.7 213.3,150.3 211.8,149.2 209.7,147.8 209.8,145.4 210.9,143.4 212.8,142.2 214.9,141.6 216.6,142.9" fill="#0000ff"/>
<polygon points="225.0,141.0 224.8,141.9 224.1,142.7 222.6,142.8 221.4,142.9 220.3,142.4 219.5,141.8 219.2,141.0 219.4,140.2 220.1,139.5 221.3,139.0 222.7,139.1 223.8,139.5 224.7,140.1" fill="#0000ff"/>
<polygon points="227.9,145.0 227.6,146.2 226.7,147.0 225.4,146.9 224.5,146.1 223.9,145.0 224.4,143.9 225.4,143.1 226.6,143.2 227.7,143.8" fill="#0000ff"/>
<polygon points="329.1,125.1 325.8,125.4 323.3,125.2 320.5,125.3 317.0,124.2 317.6,120.7 316.3,117.9 317.6,115.4 320.2,114.7 322.7,114.1 325.4,115.0 328.5,116.1 329.7,119.2 330.2,122.3" fill="#0000ff"/>
<polygon points="315.9,195.0 314.1,196.4 313.5,198.0 311.6,198.8 309.3,199.1 307.2,198.4 306.2,196.7 305.0,195.0 306.2,193.4 307.1,191.5 309.5,191.6 311.6,191.3 313.2,192.3 316.0,192.9" fill="#0000ff"/>
<polygon points="327.2,206.0 326.6,207.1 325.6,207.8 324.3,208.1 323.2,207.2 322.9,206.0 323.1,204.7 324.4,204.2 325.7,204.0 326.9,204.7" fill="#0000ff"/>
<polygon points="250.2,158.0 249.9,159.4 248.7,160.2 247.3,160.3 246.2,159.3 245.9,158.0 246.1,156.6 247.3,155.9 248.7,155.8 249.7,156.7" fill="#0000ff"/>
<polygon points="239.9,153.0 239.8,154.5 239.0,155.2 238.0,155.2 237.3,154.4 236.9,153.0 237.4,151.8 238.0,150.8 239.0,150.8 239.6,151.8" fill="#0000ff"/>
<polygon points="264.6,207.0 264.3,208.5 263.5,210.1 261.2,209.7 259.5,210.7 258.0,209.6 256.2,208.7 256.6,207.0 257.4,205.8 258.4,204.9 259.4,203.2 261.4,203.9 262.6,204.9 263.8,205.7" fill="#0000ff"/>
<polygon points="257.8,197.5 257.6,198.2 257.0,198.8 255.7,199.1 254.3,199.0 253.3,198.7 252.3,198.2 252.1,197.5 252.2,196.8 253.0,196.2 254.3,195.8 255.6,196.0 256.8,196.3 257.6,196.8" fill="#0000ff"/>
<polygon points="313.8,139.7 307.2,141.3 309.4,144.7 299.7,143.7 296.0,144.9 290.9,144.8 284.6,147.1 281.4,143.2 272.7,143.4 274.4,140.0 272.1,138.0 265.6,135.4 269.5,133.4 271.5,131.3 274.0,128.8 281.4,129.5 286.8,128.9 293.5,127.6 296.9,131.6 302.4,132.6 304.6,134.9 312.7,136.8" fill="#0000ff"/>
<polygon points="321.2,104.6 322.0,105.1 321.4,106.1 318.7,106.9 316.9,108.1 314.5,108.7 314.4,107.7 313.2,107.6 312.4,107.0 314.2,105.9 315.7,104.8 318.0,104.0 319.5,104.2 321.0,104.1" fill="#0000ff"/>
<polygon points="329.0,124.5 328.2,126.8 325.4,127.4 322.2,125.2 318.5,124.9 316.4,122.2 316.0,119.5 317.2,117.7 318.3,115.8 320.7,114.7 324.2,115.1 326.9,117.6 329.3,119.9 331.3,122.8" fill="#0000ff"/>
<polygon points="349.5,109.5 351.2,109.5 348.1,112.0 349.6,112.7 346.9,114.3 345.3,115.6 343.8,117.1 341.8,118.3 339.4,119.8 338.9,118.7 337.9,118.5 336.0,118.9 335.3,118.2 335.3,117.0 337.5,115.1 338.0,113.6 340.9,112.6 342.2,110.8 344.3,109.5 346.1,108.9 348.2,108.1 349.5,108.3" fill="#0000ff"/>
<polygon points="363.4,98.1 362.2,100.1 361.8,101.4 362.2,102.6 359.2,104.4 357.5,105.7 355.8,107.2 353.8,108.5 351.8,109.4 349.3,110.6 348.1,110.1 349.0,108.2 348.4,107.6 346.7,107.2 349.2,105.1 349.6,103.5 352.5,102.3 353.9,99.7 356.4,98.6 358.1,98.8 359.9,98.4 361.0,98.6" fill="#0000ff"/>
<polygon points="373.4,93.2 372.7,95.0 372.1,96.5 371.5,98.8 368.4,100.5 365.3,102.4 364.3,100.9 363.3,100.3 361.4,99.8 362.2,97.7 365.2,95.6 367.5,93.3 370.0,93.0 373.0,91.7" fill="#0000ff"/>
<polygon points="384.6,94.0 383.0,95.6 382.7,97.7 380.9,98.2 379.1,98.5 377.6,97.4 376.5,95.9 375.7,94.0 375.9,91.8 377.9,91.0 379.0,89.1 380.9,89.4 382.5,90.5 383.9,91.9" fill="#0000ff"/>
<polygon points="342.6,118.0 341.7,119.3 340.1,120.0 339.1,121.5 337.1,121.1 335.6,120.3 333.7,119.6 333.5,118.0 334.9,116.9 336.0,116.1 337.2,115.2 338.8,115.4 340.1,116.0 341.7,116.7" fill="#0000ff"/>
<polygon points="353.1,113.0 352.5,114.4 352.3,116.2 350.8,117.2 349.1,117.3 348.0,115.8 347.1,114.6 346.2,113.0 346.9,111.3 347.7,109.7 349.1,108.6 350.6,109.9 352.6,109.2 353.3,111.2" fill="#0000ff"/>
<polygon points="366.2,117.2 367.2,119.6 368.1,122.3 368.6,124.9 368.1,126.0 368.0,127.8 366.6,126.2 365.7,125.4 364.7,124.1 363.7,123.5 362.5,121.5 361.4,118.9 360.3,116.2 359.8,113.6 359.5,111.2 360.9,112.0 360.5,109.5 361.1,109.0 361.8,108.4 363.3,112.3 364.4,112.1 365.3,115.0" fill="#0000ff"/>
<polygon points="372.4,111.0 372.2,112.2 371.7,113.2 370.9,113.8 370.1,113.8 369.2,113.5 368.6,112.4 368.6,111.0 368.8,109.8 369.2,108.5 370.0,107.8 370.9,108.1 371.9,108.5 372.2,109.8" fill="#0000ff"/>
<polygon points="363.0,125.0 362.5,126.1 361.6,126.7 360.4,126.7 359.2,126.3 359.0,125.0 359.3,123.8 360.4,123.1 361.6,123.1 362.7,123.8" fill="#0000ff"/>
<polygon points="407.8,117.0 405.6,119.9 406.7,124.0 405.6,128.4 401.4,130.1 397.1,130.6 393.1,129.5 389.7,127.8 387.5,125.0 382.8,124.3 383.2,120.2 381.0,117.0 380.3,113.0 381.3,108.8 387.3,108.8 390.2,107.2 392.8,102.8 396.6,106.9 401.6,103.6 405.1,106.1 405.8,110.5 406.4,113.9" fill="#0000ff"/>
<polygon points="391.0,107.0 390.8,109.2 390.4,112.2 387.9,111.7 386.1,111.8 383.5,112.3 382.1,109.8 382.4,107.0 383.1,104.8 383.4,101.5 386.1,102.3 388.0,101.9 389.9,102.6 391.9,104.2" fill="#0000ff"/>
<polygon points="417.1,127.0 418.7,129.0 415.8,130.1 416.9,133.4 413.2,133.4 410.5,134.4 407.7,133.5 404.8,133.4 402.2,132.5 402.4,130.0 399.6,128.9 399.8,127.0 398.4,124.8 399.2,122.6 403.8,122.8 405.1,121.0 407.7,120.7 410.7,118.7 413.2,120.5 414.4,122.6 418.0,123.0 419.8,124.8" fill="#0000ff"/>
<polygon points="393.4,132.0 393.1,133.5 394.6,135.7 389.2,135.6 387.4,136.8 384.7,138.1 381.1,138.5 377.0,138.6 375.5,136.3 373.7,135.0 369.8,133.9 369.1,132.0 372.8,130.5 372.8,128.7 375.4,127.6 377.7,126.2 381.0,124.9 384.4,127.2 389.0,125.5 390.4,127.7 392.3,129.0 395.3,130.2" fill="#0000ff"/>
<polygon points="406.5,103.0 406.2,105.6 405.3,107.7 403.7,107.8 402.3,108.2 401.4,106.2 399.7,105.6 399.5,103.0 400.7,101.2 400.8,98.4 402.4,98.6 403.5,99.1 404.7,99.4 405.5,101.0" fill="#0000ff"/>
<polygon points="416.8,104.0 417.3,106.5 416.9,108.2 416.2,109.4 415.2,110.1 413.9,109.7 412.6,107.9 411.4,106.0 411.1,103.7 411.6,102.3 412.2,101.4 412.7,99.4 414.1,101.4 415.5,102.0" fill="#0000ff"/>
<polygon points="413.1,86.2 414.5,87.4 411.9,88.8 413.0,90.8 408.2,91.3 405.4,92.3 402.2,92.7 398.1,94.4 397.2,92.1 392.3,93.0 390.4,91.8 392.2,89.9 393.2,88.5 393.8,87.2 395.2,85.8 396.9,84.1 400.4,83.2 403.9,82.0 407.3,82.4 409.9,83.0 411.2,84.2 415.8,84.1" fill="#0000ff"/>
<polygon points="434.1,92.0 432.4,93.8 432.2,95.9 427.2,96.1 424.5,96.9 421.7,98.0 418.2,98.2 415.4,97.1 412.2,96.5 409.2,95.5 406.1,94.0 405.5,92.0 407.9,90.2 410.9,89.1 410.7,86.6 415.0,86.5 418.3,86.2 421.8,85.8 424.2,87.4 427.2,87.9 428.9,89.1 429.3,90.6" fill="#0000ff"/>
<polygon points="446.6,84.1 447.6,86.3 445.5,88.7 443.1,90.4 442.8,93.1 439.5,93.7 437.2,95.9 434.4,94.9 431.5,95.4 428.5,95.3 429.4,92.0 427.3,91.2 426.7,89.4 427.6,87.4 426.6,84.8 431.1,84.3 432.4,82.1 435.1,81.6 437.4,81.8 439.6,82.0 443.7,80.5 443.9,83.2" fill="#0000ff"/>
<polygon points="458.0,77.8 458.8,79.1 459.5,80.7 456.5,82.7 454.0,84.1 452.2,85.6 450.0,88.1 447.0,88.3 443.9,89.3 442.9,87.7 440.2,87.8 438.2,87.0 441.3,84.3 439.0,83.3 440.1,81.2 442.2,79.1 446.2,78.7 448.3,77.6 451.2,75.0 453.2,76.1 454.9,76.6 457.7,76.3" fill="#0000ff"/>
<polygon points="445.8,97.0 445.9,99.8 444.6,101.1 443.6,102.6 442.3,103.2 441.2,101.5 440.2,99.7 440.2,97.0 440.5,94.6 440.8,91.6 442.5,92.4 443.7,90.7 444.6,93.1 446.1,94.0" fill="#0000ff"/>
<polygon points="431.3,98.0 432.2,100.0 430.2,100.8 429.0,102.4 427.0,102.4 425.0,101.8 423.9,100.0 423.4,98.0 423.7,95.9 425.2,94.4 427.2,94.4 428.8,94.4 430.1,95.4 431.5,96.3" fill="#0000ff"/>
<polygon points="400.6,95.0 400.1,96.5 398.2,97.4 395.9,97.4 393.9,97.9 391.6,97.6 390.3,96.4 389.6,95.0 391.0,93.8 392.3,93.0 393.9,92.2 396.0,92.5 397.6,93.0 399.6,93.7" fill="#0000ff"/>
<polygon points="478.7,83.0 479.2,84.1 478.2,85.7 475.3,87.0 472.3,87.6 470.0,87.3 467.9,87.0 467.4,86.0 465.6,84.9 468.3,83.4 470.6,82.0 473.6,81.7 476.6,81.1 479.8,81.1" fill="#0000ff"/>
<polygon points="461.8,100.3 461.3,101.4 460.8,102.4 460.0,103.5 458.6,103.9 456.9,104.5 456.3,103.3 455.9,102.4 454.6,101.6 455.3,100.2 457.2,99.8 458.4,98.4 459.6,99.4 461.2,99.3" fill="#0000ff"/>
<polygon points="418.7,146.4 417.1,148.5 416.5,150.4 416.2,153.6 414.9,154.3 413.8,154.1 412.7,154.4 411.3,155.3 411.1,152.0 410.0,150.9 410.7,147.8 409.2,145.6 410.9,143.5 411.5,141.6 411.8,138.4 413.0,137.1 414.2,136.3 415.1,138.9 416.3,138.3 416.9,140.1 417.3,142.0 417.7,144.0" fill="#0000ff"/>
<polygon points="416.3,162.0 415.3,163.9 415.6,166.6 414.9,168.6 413.6,169.2 412.6,170.0 411.4,170.6 410.7,167.8 408.8,169.4 408.8,166.1 408.0,164.4 408.0,162.0 408.7,160.1 408.4,157.3 409.9,157.1 410.7,156.2 411.4,153.0 412.6,153.3 413.4,155.7 414.2,156.9 414.8,158.4 416.4,159.4" fill="#0000ff"/>
<polygon points="423.0,182.5 424.0,185.6 423.8,187.4 423.5,188.4 424.8,193.3 424.4,194.3 423.7,194.4 422.5,191.5 421.7,190.5 420.8,188.9 419.8,186.4 418.6,183.6 417.9,180.3 417.5,177.4 418.0,176.6 418.5,176.3 418.6,174.8 418.3,171.4 419.3,173.4 420.3,175.4 421.3,176.2 422.1,179.8" fill="#0000ff"/>
<polygon points="443.7,161.5 442.9,162.5 441.3,163.2 439.6,164.7 436.4,163.5 433.4,163.0 432.4,161.7 431.4,160.4 430.8,158.9 434.0,158.4 436.9,158.5 439.7,158.4 442.9,158.9 445.0,160.2" fill="#0000ff"/>
<polygon points="473.8,151.0 473.9,152.9 472.3,153.9 470.9,154.8 469.3,154.2 467.1,154.6 466.4,152.7 465.3,151.0 466.1,149.1 467.6,148.0 469.2,147.6 470.7,147.9 472.8,147.5 473.2,149.5" fill="#0000ff"/>
<polygon points="467.5,158.4 467.2,160.2 466.3,161.7 465.4,163.2 463.6,163.9 461.9,164.2 460.2,164.2 458.4,163.6 457.6,162.1 458.3,160.1 459.8,158.1 462.2,157.2 464.5,156.5 466.4,157.2" fill="#0000ff"/>
<polygon points="485.6,186.0 485.2,189.0 484.3,191.3 483.1,191.7 481.9,191.9 480.9,190.7 479.4,189.5 479.4,186.0 479.2,182.3 480.8,180.9 482.0,180.7 483.1,180.2 484.0,181.6 485.8,182.3" fill="#0000ff"/>
<polygon points="441.7,175.0 440.9,176.1 439.8,177.0 438.2,176.9 436.8,176.3 436.7,175.0 436.8,173.7 438.2,173.2 439.7,173.2 441.2,173.7" fill="#0000ff"/>
<polygon points="430.4,145.0 430.4,146.3 429.9,147.3 429.3,147.9 428.7,147.7 428.1,147.2 427.6,146.3 427.5,145.0 427.8,143.8 428.1,142.9 428.6,141.8 429.3,142.3 429.9,142.7 430.3,143.8" fill="#0000ff"/>
<polygon points="485.1,152.0 484.5,152.8 483.7,153.5 482.4,153.5 481.3,152.9 481.0,152.0 481.3,151.1 482.3,150.4 483.6,150.7 484.5,151.2" fill="#0000ff"/>
<polygon points="71.7,203.0 71.4,203.8 70.8,204.3 70.1,204.5 69.4,204.0 69.2,203.0 69.5,202.1 70.2,201.7 70.8,201.7 71.4,202.2" fill="#0000ff"/>
<polygon points="195.8,261.5 195.1,262.8 194.2,263.7 193.2,264.4 191.6,265.3 190.3,264.2 189.5,262.9 188.4,261.5 189.7,260.2 190.1,258.5 191.6,257.6 193.4,257.6 194.8,258.6 196.2,259.7" fill="#0000ff"/>
<polygon points="198.5,248.9 199.1,250.0 198.2,251.3 196.8,252.0 195.4,251.9 194.4,251.2 194.0,250.0 195.0,248.8 196.2,247.8 197.7,247.9" fill="#0000ff"/>
<polygon points="218.0,256.2 218.6,256.9 217.3,257.7 216.5,258.8 214.6,259.4 213.3,258.9 211.1,259.1 211.1,258.0 210.9,257.1 212.5,256.2 213.9,255.6 215.3,255.1 216.9,254.9 217.8,255.5" fill="#0000ff"/>
<polygon points="196.6,276.5 196.3,277.8 194.5,278.3 193.1,278.5 191.8,278.8 190.1,278.7 189.9,277.4 189.0,276.5 189.6,275.5 190.0,274.3 191.8,274.3 193.2,274.2 195.1,274.2 196.3,275.2" fill="#0000ff"/>
<polygon points="204.1,275.5 203.6,276.9 202.6,277.8 201.4,277.9 200.2,277.1 200.0,275.5 200.4,274.0 201.3,272.9 202.6,273.0 203.7,273.9" fill="#0000ff"/>
<polygon points="223.3,285.7 222.2,287.0 219.5,286.9 217.3,286.6 215.0,286.6 213.6,285.2 212.5,284.0 210.5,282.3 212.3,281.3 213.9,280.4 216.6,280.7 218.9,281.6 221.1,282.6 221.8,284.0" fill="#0000ff"/>
<polygon points="171.0,298.5 170.5,299.3 169.6,299.8 168.3,300.1 167.4,299.4 167.0,298.5 167.3,297.6 168.4,297.0 169.6,297.1 170.7,297.6" fill="#0000ff"/>
<polygon points="207.9,284.5 207.6,285.0 206.6,285.3 205.4,285.2 204.3,285.0 204.0,284.5 204.4,284.0 205.3,283.7 206.6,283.8 207.7,284.0" fill="#0000ff"/>
<polygon points="204.5,261.0 204.1,261.8 203.4,262.3 202.5,262.5 201.7,261.9 201.4,261.0 201.8,260.1 202.6,259.6 203.4,259.6 204.2,260.1" fill="#0000ff"/>
<polygon points="193.0,282.5 192.8,283.4 191.9,283.8 191.0,283.9 190.2,283.5 189.9,282.5 190.3,281.6 191.1,281.1 192.0,281.0 192.6,281.7" fill="#0000ff"/>
<polygon points="269.5,257.0 269.5,259.5 269.2,262.3 267.9,265.0 264.7,265.1 262.4,266.6 259.6,266.6 257.2,265.4 254.9,264.0 254.4,261.2 253.0,259.3 249.1,257.0 251.7,254.3 254.3,252.7 253.6,248.5 257.1,248.4 259.5,246.6 262.2,248.4 264.4,249.5 267.3,249.7 268.7,252.1 270.0,254.4" fill="#0000ff"/>
<polygon points="264.2,207.0 264.1,208.2 264.0,210.0 261.8,209.8 260.3,209.5 258.9,209.1 257.4,208.4 257.2,207.0 257.0,205.5 258.7,204.7 260.2,204.3 262.0,203.5 263.1,204.9 264.7,205.6" fill="#0000ff"/>
<polygon points="261.8,266.0 261.7,266.9 260.7,267.7 258.9,267.9 257.1,268.0 255.7,267.4 254.2,266.9 254.1,266.0 255.2,265.3 255.5,264.4 257.1,264.0 259.0,263.8 260.8,264.2 262.0,265.0" fill="#0000ff"/>
<polygon points="269.9,266.0 269.5,266.8 268.7,267.5 267.4,267.3 266.4,266.9 266.1,266.0 266.5,265.2 267.3,264.4 268.6,264.7 269.6,265.1" fill="#0000ff"/>
<polygon points="288.7,191.5 287.2,192.5 285.7,193.1 284.3,193.5 282.6,193.7 280.8,193.4 279.7,192.5 278.4,191.5 279.1,190.3 280.8,189.6 282.3,188.6 284.4,189.2 286.2,189.6 287.7,190.4" fill="#0000ff"/>
<polygon points="302.4,191.0 301.9,191.9 300.9,192.8 299.1,193.3 296.9,193.4 296.0,192.2 294.5,191.8 293.7,191.0 294.4,190.1 295.4,189.4 297.1,189.0 298.9,189.0 300.2,189.6 302.2,190.0" fill="#0000ff"/>
<polygon points="316.9,194.5 314.6,195.9 314.3,198.0 311.5,197.8 309.2,198.6 306.4,198.2 305.4,196.3 305.2,194.5 305.0,192.6 307.8,192.0 309.2,190.3 311.9,190.0 313.6,191.6 316.1,192.5" fill="#0000ff"/>
<polygon points="326.9,206.0 326.6,207.3 325.5,208.0 324.1,208.3 323.2,207.2 322.6,206.0 323.1,204.7 324.1,203.9 325.5,203.9 326.6,204.7" fill="#0000ff"/>
<polygon points="373.2,207.5 374.0,209.0 373.6,211.1 370.7,212.6 368.5,213.5 365.9,215.2 364.5,214.1 363.6,213.0 362.9,211.8 363.7,210.0 365.2,208.3 367.4,206.5 369.6,206.9 371.8,206.6" fill="#0000ff"/>
<polygon points="348.9,219.8 350.7,220.3 351.1,221.3 347.3,222.3 346.2,223.5 343.0,224.0 340.4,224.2 337.5,225.0 334.9,225.2 334.8,224.1 333.8,223.7 330.9,223.6 333.2,222.5 333.7,221.6 334.2,220.7 335.6,219.4 338.9,218.8 341.9,217.8 344.0,218.5 348.1,217.2 348.3,218.4 348.3,219.3" fill="#0000ff"/>
<polygon points="334.9,223.0 334.6,224.2 333.2,224.8 331.8,224.8 330.4,224.2 330.1,223.0 330.4,221.8 331.7,220.9 333.2,221.2 334.6,221.8" fill="#0000ff"/>
<polygon points="358.1,214.0 358.0,214.6 357.4,215.0 356.6,215.0 356.0,214.6 355.8,214.0 356.0,213.4 356.6,213.0 357.3,213.1 358.0,213.4" fill="#0000ff"/>
<polygon points="391.2,240.5 392.1,243.7 390.3,246.3 387.6,248.1 384.9,246.0 381.7,246.4 379.5,243.9 380.2,240.5 380.4,237.6 383.0,236.4 384.6,233.8 387.3,234.1 388.9,236.5 392.4,237.2" fill="#0000ff"/>
<polygon points="393.4,245.5 393.2,246.4 392.1,246.8 390.9,247.0 390.0,246.3 389.4,245.5 389.8,244.6 390.9,244.1 392.1,244.0 393.1,244.6" fill="#0000ff"/>
<polygon points="357.8,254.0 358.6,255.8 355.8,257.2 355.7,259.8 352.0,261.1 346.6,259.2 343.4,259.0 338.8,260.3 334.5,259.6 332.1,257.9 331.0,255.9 329.1,254.0 334.1,252.5 331.9,250.1 334.7,248.5 338.7,247.5 342.9,247.3 346.7,248.5 349.6,249.3 353.4,249.5 356.0,250.7 357.7,252.3" fill="#0000ff"/>
<polygon points="371.4,249.0 372.1,251.6 372.6,255.1 369.9,256.5 367.7,258.1 365.5,260.2 362.9,257.3 360.5,257.4 358.9,255.6 355.2,255.3 355.4,251.8 354.5,249.0 356.1,246.4 356.1,243.4 359.1,242.8 359.5,238.1 362.8,239.8 365.2,240.1 368.5,238.0 369.9,241.4 371.9,243.4 373.4,245.9" fill="#0000ff"/>
<polygon points="374.8,255.0 374.8,256.9 373.7,258.4 371.9,258.8 369.9,259.7 368.8,257.8 367.6,256.6 367.0,255.0 367.8,253.5 368.5,251.8 370.0,250.6 371.7,251.9 373.0,252.5 375.0,253.1" fill="#0000ff"/>
<polygon points="348.6,268.0 345.8,269.5 346.0,271.4 343.5,272.2 341.1,272.6 339.3,274.1 336.6,274.3 333.8,274.2 332.9,271.9 329.5,271.6 329.7,269.6 330.3,268.0 329.9,266.4 331.9,265.4 331.0,262.6 334.2,262.4 336.9,262.9 339.1,263.0 342.2,261.9 345.1,262.5 344.8,265.1 346.6,266.3" fill="#0000ff"/>
<polygon points="361.3,266.0 361.1,269.1 358.6,270.6 356.9,271.8 355.8,274.0 354.0,274.6 351.9,275.9 350.6,272.7 349.0,271.9 346.9,271.0 345.6,268.8 346.7,266.0 345.9,263.3 346.8,260.9 348.1,258.8 349.5,256.1 351.8,255.3 353.8,258.6 355.8,258.1 356.9,260.3 357.9,261.9 360.1,263.3" fill="#0000ff"/>
<polygon points="316.0,264.5 316.1,265.6 314.7,266.2 313.6,267.4 311.8,266.4 309.9,266.5 308.4,265.7 308.0,264.5 308.5,263.3 309.5,262.2 311.6,262.0 313.3,262.3 314.7,262.8 315.9,263.5" fill="#0000ff"/>
<polygon points="274.3,254.0 274.1,256.9 273.2,260.0 270.7,260.9 268.2,261.6 267.0,258.1 264.3,257.3 264.5,254.0 265.1,251.3 267.0,250.0 268.2,246.8 270.7,247.1 272.1,249.8 273.3,251.6" fill="#0000ff"/>
<polygon points="272.1,266.0 271.7,266.8 270.9,267.5 269.7,267.8 268.3,267.9 267.2,267.4 266.3,266.8 266.1,266.0 266.3,265.2 267.2,264.6 268.4,264.4 269.6,264.3 270.9,264.6 271.6,265.3" fill="#0000ff"/>
<polygon points="334.3,245.9 334.4,247.1 334.1,248.2 333.3,249.3 332.1,249.9 330.9,250.0 329.9,249.6 329.1,248.9 328.7,247.9 329.0,246.8 329.7,245.7 330.9,245.1 332.1,244.9 333.4,245.1" fill="#0000ff"/>
<polygon points="385.7,248.3 386.0,249.9 385.6,251.4 385.3,253.0 383.6,253.4 382.3,254.1 380.6,254.7 380.1,253.0 379.6,251.9 379.2,250.6 380.0,249.2 381.3,248.5 382.7,247.1 383.9,248.4" fill="#0000ff"/>
<polygon points="399.9,253.5 399.6,254.4 398.5,255.0 397.2,254.9 395.9,254.5 395.8,253.5 396.2,252.6 397.1,251.9 398.5,251.9 399.5,252.6" fill="#0000ff"/>
<polygon points="419.0,252.5 419.3,254.3 418.3,255.7 416.8,256.2 415.3,255.6 414.2,255.0 413.4,253.9 412.4,252.5 413.6,251.2 414.1,250.0 415.3,249.2 416.8,248.8 418.2,249.4 419.3,250.7" fill="#0000ff"/>
<polygon points="426.0,253.8 426.0,254.9 425.4,256.0 424.1,256.7 422.8,256.8 422.1,256.1 422.0,255.1 422.7,254.1 423.9,253.3 425.0,253.4" fill="#0000ff"/>
<polygon points="391.9,266.5 391.7,268.1 390.3,269.0 388.7,269.0 387.5,267.9 387.1,266.5 387.6,265.1 388.8,264.3 390.3,264.0 391.6,265.0" fill="#0000ff"/>
<polygon points="422.2,270.6 422.1,272.0 421.6,273.8 418.7,274.4 416.2,275.6 414.2,274.5 411.3,274.3 410.7,272.6 410.7,270.8 413.2,269.5 414.9,268.1 417.8,267.5 420.2,268.1 422.3,268.9" fill="#0000ff"/>
<polygon points="424.1,277.0 423.6,277.6 423.0,278.2 422.1,278.1 421.2,277.8 421.1,277.0 421.3,276.3 422.0,275.9 423.0,275.8 423.7,276.3" fill="#0000ff"/>
<polygon points="434.8,235.5 434.8,236.5 433.7,237.1 432.4,236.9 431.3,236.5 431.1,235.5 431.4,234.6 432.4,234.0 433.6,234.0 434.5,234.6" fill="#0000ff"/>
<polygon points="440.8,255.5 440.6,256.4 439.6,257.0 438.3,257.1 437.3,256.4 437.1,255.5 437.2,254.5 438.4,254.1 439.6,254.0 440.7,254.6" fill="#0000ff"/>
<polygon points="453.5,257.4 452.8,257.8 451.5,257.9 450.3,257.8 448.8,257.7 447.6,257.0 447.2,256.3 446.6,255.6 447.6,255.4 447.9,254.6 449.5,254.7 451.1,255.4 452.1,256.1 452.8,256.7" fill="#0000ff"/>
<polygon points="455.0,257.5 454.6,258.3 454.0,259.0 453.1,258.8 452.3,258.3 452.0,257.5 452.2,256.5 453.0,256.0 454.0,256.0 454.8,256.6" fill="#0000ff"/>
<polygon points="484.9,268.0 483.7,269.4 482.8,270.5 481.4,271.5 479.6,271.6 477.6,271.2 476.7,269.6 475.8,268.0 476.2,266.2 477.5,264.7 479.3,263.3 481.6,263.8 483.0,265.2 484.9,266.1" fill="#0000ff"/>
<polygon points="470.2,275.0 469.4,275.6 468.3,275.7 467.2,275.0 466.5,274.0 466.7,273.0 467.5,272.2 468.7,272.2 469.9,272.9 470.5,274.0" fill="#0000ff"/>
<polygon points="485.5,200.0 485.5,203.4 484.2,204.3 483.6,207.1 482.5,205.6 481.4,205.7 480.3,203.7 480.7,200.0 480.4,196.5 481.7,195.4 482.4,192.5 483.7,192.0 484.3,195.5 485.5,196.6" fill="#0000ff"/>
<polygon points="426.6,193.0 426.3,194.5 426.0,195.9 425.3,195.9 424.6,196.9 423.9,196.3 423.9,194.2 423.5,193.0 423.6,191.4 424.3,190.8 424.7,190.1 425.3,190.0 426.1,189.9 426.2,191.6" fill="#0000ff"/>
<polygon points="301.0,243.0 300.8,243.6 300.3,243.9 299.7,243.9 299.2,243.6 298.9,243.0 299.1,242.4 299.7,242.0 300.3,242.0 300.7,242.5" fill="#0000ff"/>
<polygon points="345.7,240.0 345.5,240.5 344.9,240.8 344.1,240.8 343.6,240.5 343.3,240.0 343.6,239.6 344.1,239.2 344.9,239.3 345.4,239.5" fill="#0000ff"/>
<polygon points="279.6,254.5 279.3,255.1 278.4,255.4 277.5,255.5 276.8,255.1 276.5,254.5 276.7,253.9 277.5,253.5 278.4,253.6 279.2,253.9" fill="#0000ff"/>
<polygon points="384.8,263.0 384.7,263.6 384.2,263.9 383.8,264.0 383.3,263.6 383.3,263.0 383.3,262.4 383.7,262.0 384.3,262.0 384.6,262.4" fill="#0000ff"/>
<polygon points="438.1,246.0 437.7,246.5 437.3,246.9 436.7,246.9 436.2,246.6 436.0,246.0 436.2,245.4 436.7,245.1 437.3,245.0 437.8,245.5" fill="#0000ff"/>
<path d="M270 152Q283 163 288 179L286 190" fill="none" stroke="#0000ff" stroke-width="8.5"/>
<path d="M284 150Q300 157 302 171L303 189" fill="none" stroke="#0000ff" stroke-width="8.5"/>
<path d="M247 155.5q10-3 20-1.5" fill="none" stroke="#a6a6a6" stroke-width="1.6"/>
<rect x="48.2" y="141.4" width="2.5" height="1.5" fill="#0000ff" />
<rect x="46.9" y="138.2" width="2" height="2" fill="#0000ff" />
<rect x="48.4" y="138.8" width="2" height="1" fill="#0000ff" />
<rect x="55.1" y="132.9" width="2.5" height="1" fill="#0000ff" />
<rect x="46.1" y="138.2" width="2" height="2" fill="#0000ff" />
<rect x="48.7" y="141.5" width="2" height="2" fill="#0000ff" />
<rect x="52.1" y="146.5" width="2.5" height="1.5" fill="#0000ff" />
<rect x="48.5" y="136.8" width="1.5" height="1" fill="#0000ff" />
<rect x="56.0" y="130.7" width="2" height="1.5" fill="#0000ff" />
<rect x="57.3" y="131.5" width="1" height="1.5" fill="#0000ff" />
<rect x="60.6" y="134.2" width="2.5" height="1.5" fill="#0000ff" />
<rect x="67.3" y="123.7" width="1.5" height="1" fill="#0000ff" />
<rect x="72.3" y="125.8" width="1.5" height="2" fill="#0000ff" />
<rect x="67.4" y="123.5" width="2.5" height="2" fill="#0000ff" />
<rect x="69.1" y="145.3" width="2.5" height="1" fill="#0000ff" />
<rect x="81.9" y="144.5" width="1" height="1" fill="#0000ff" />
<rect x="76.6" y="150.0" width="1.5" height="1" fill="#0000ff" />
<rect x="70.7" y="144.7" width="1" height="1.5" fill="#0000ff" />
<rect x="83.0" y="139.1" width="2" height="2" fill="#0000ff" />
<rect x="82.4" y="138.9" width="1.5" height="2" fill="#0000ff" />
<rect x="95.3" y="149.4" width="2.5" height="1" fill="#0000ff" />
<rect x="100.0" y="145.1" width="1" height="1" fill="#0000ff" />
<rect x="89.8" y="148.0" width="1" height="1" fill="#0000ff" />
<rect x="89.6" y="143.1" width="2" height="1" fill="#0000ff" />
<rect x="99.6" y="148.1" width="1.5" height="1" fill="#0000ff" />
<rect x="64.2" y="163.7" width="2" height="2" fill="#0000ff" />
<rect x="62.9" y="161.3" width="1" height="1" fill="#0000ff" />
<rect x="65.8" y="164.0" width="1.5" height="1" fill="#0000ff" />
<rect x="62.9" y="161.5" width="2" height="1.5" fill="#0000ff" />
<rect x="65.0" y="163.5" width="1.5" height="2" fill="#0000ff" />
<rect x="117.3" y="132.4" width="1.5" height="1.5" fill="#9c9c9c" />
<rect x="111.5" y="136.7" width="1.5" height="1" fill="#0000ff" />
<rect x="111.4" y="137.6" width="1.5" height="2" fill="#0000ff" />
<rect x="120.2" y="123.7" width="2.5" height="1.5" fill="#0000ff" />
<rect x="130.7" y="135.6" width="1" height="1" fill="#0000ff" />
<rect x="128.4" y="144.5" width="1" height="1.5" fill="#0000ff" />
<rect x="130.3" y="140.3" width="1.5" height="2" fill="#0000ff" />
<rect x="126.8" y="149.9" width="1" height="2" fill="#0000ff" />
<rect x="127.4" y="145.4" width="2.5" height="1" fill="#0000ff" />
<rect x="122.6" y="148.6" width="1.5" height="2" fill="#0000ff" />
<rect x="117.2" y="127.4" width="2" height="1.5" fill="#0000ff" />
<rect x="112.8" y="135.1" width="2" height="2" fill="#0000ff" />
<rect x="125.1" y="143.8" width="2" height="1" fill="#acacac" />
<rect x="125.4" y="143.7" width="1.5" height="1" fill="#acacac" />
<rect x="118.6" y="130.5" width="1" height="2" fill="#acacac" />
<rect x="112.6" y="143.4" width="2" height="2" fill="#0000ff" />
<rect x="214.2" y="93.7" width="2.5" height="1" fill="#0000ff" />
<rect x="220.6" y="93.9" width="1.5" height="1" fill="#0000ff" />
<rect x="215.4" y="88.6" width="1.5" height="1.5" fill="#0000ff" />
<rect x="214.6" y="88.5" width="1" height="1" fill="#0000ff" />
<rect x="214.9" y="88.1" width="2" height="1.5" fill="#0000ff" />
<rect x="215.7" y="118.8" width="1" height="1" fill="#0000ff" />
<rect x="218.6" y="118.4" width="1" height="2" fill="#0000ff" />
<rect x="219.4" y="111.2" width="2.5" height="1.5" fill="#0000ff" />
<rect x="221.6" y="118.1" width="2.5" height="2" fill="#0000ff" />
<rect x="229.4" y="121.9" width="2.5" height="2" fill="#0000ff" />
<rect x="233.3" y="115.9" width="1" height="2" fill="#0000ff" />
<rect x="230.9" y="110.2" width="2" height="1" fill="#0000ff" />
<rect x="224.2" y="121.0" width="1" height="1.5" fill="#0000ff" />
<rect x="231.9" y="111.9" width="2" height="2" fill="#0000ff" />
<rect x="228.0" y="123.1" width="2.5" height="1" fill="#0000ff" />
<rect x="253.7" y="115.9" width="2" height="1" fill="#0000ff" />
<rect x="243.3" y="113.7" width="2" height="1" fill="#0000ff" />
<rect x="253.1" y="111.2" width="2.5" height="2" fill="#0000ff" />
<rect x="256.3" y="115.2" width="1" height="1" fill="#0000ff" />
<rect x="253.9" y="111.6" width="2.5" height="2" fill="#0000ff" />
<rect x="185.6" y="114.5" width="1.5" height="1" fill="#0000ff" />
<rect x="185.6" y="117.7" width="2.5" height="2" fill="#0000ff" />
<rect x="186.8" y="115.1" width="2" height="1" fill="#0000ff" />
<rect x="191.8" y="123.6" width="2.5" height="2" fill="#0000ff" />
<rect x="266.2" y="132.1" width="2" height="1" fill="#0000ff" />
<rect x="255.9" y="125.4" width="2.5" height="1" fill="#0000ff" />
<rect x="229.1" y="133.9" width="2" height="1" fill="#0000ff" />
<rect x="240.0" y="125.6" width="1.5" height="2" fill="#0000ff" />
<rect x="264.7" y="130.8" width="2" height="1" fill="#0000ff" />
<rect x="230.1" y="136.9" width="1" height="1" fill="#0000ff" />
<rect x="245.9" y="123.5" width="2.5" height="2" fill="#0000ff" />
<rect x="235.3" y="133.9" width="2.5" height="1.5" fill="#9c9c9c" />
<rect x="237.5" y="134.4" width="1.5" height="1" fill="#acacac" />
<rect x="264.0" y="132.5" width="2.5" height="1" fill="#0000ff" />
<rect x="255.2" y="127.1" width="1" height="1.5" fill="#0000ff" />
<rect x="230.4" y="141.3" width="2" height="1.5" fill="#0000ff" />
<rect x="249.7" y="123.7" width="2" height="2" fill="#0000ff" />
<rect x="258.1" y="133.0" width="2.5" height="1" fill="#acacac" />
<rect x="244.5" y="128.5" width="1.5" height="1" fill="#a4a4a4" />
<rect x="250.3" y="130.0" width="1.5" height="1" fill="#a4a4a4" />
<rect x="250.9" y="130.7" width="1" height="1" fill="#acacac" />
<rect x="232.3" y="128.0" width="1" height="1.5" fill="#0000ff" />
<rect x="244.2" y="124.6" width="2" height="1" fill="#0000ff" />
<rect x="261.8" y="139.4" width="2.5" height="1.5" fill="#0000ff" />
<rect x="239.5" y="142.9" width="2.5" height="1" fill="#0000ff" />
<rect x="261.7" y="140.6" width="1.5" height="1" fill="#0000ff" />
<rect x="233.0" y="127.2" width="1.5" height="2" fill="#0000ff" />
<rect x="294.9" y="142.3" width="2.5" height="1" fill="#a4a4a4" />
<rect x="288.1" y="146.0" width="1" height="1" fill="#0000ff" />
<rect x="264.2" y="133.7" width="1.5" height="1" fill="#0000ff" />
<rect x="302.3" y="138.5" width="2" height="2" fill="#acacac" />
<rect x="295.2" y="131.0" width="1.5" height="1" fill="#acacac" />
<rect x="289.0" y="143.0" width="1.5" height="1.5" fill="#a4a4a4" />
<rect x="273.6" y="132.5" width="2" height="2" fill="#9c9c9c" />
<rect x="305.3" y="142.0" width="2" height="1" fill="#acacac" />
<rect x="291.3" y="127.2" width="2" height="2" fill="#0000ff" />
<rect x="305.0" y="137.0" width="2.5" height="1.5" fill="#a4a4a4" />
<rect x="315.5" y="144.9" width="2" height="1" fill="#0000ff" />
<rect x="292.2" y="148.7" width="2" height="1" fill="#0000ff" />
<rect x="283.3" y="141.5" width="2.5" height="1.5" fill="#acacac" />
<rect x="303.5" y="140.9" width="1" height="1" fill="#acacac" />
<rect x="294.0" y="143.2" width="1" height="1" fill="#a4a4a4" />
<rect x="309.8" y="141.2" width="2" height="1.5" fill="#0000ff" />
<rect x="300.3" y="127.9" width="1" height="1" fill="#0000ff" />
<rect x="288.3" y="146.5" width="1" height="1" fill="#0000ff" />
<rect x="282.0" y="139.8" width="2" height="1" fill="#acacac" />
<rect x="310.2" y="147.0" width="2.5" height="1" fill="#0000ff" />
<rect x="309.4" y="133.7" width="2.5" height="2" fill="#0000ff" />
<rect x="274.6" y="134.4" width="2.5" height="1" fill="#a4a4a4" />
<rect x="303.1" y="136.1" width="2" height="2" fill="#acacac" />
<rect x="306.3" y="140.4" width="2.5" height="1" fill="#a4a4a4" />
<rect x="311.6" y="136.8" width="1.5" height="1.5" fill="#0000ff" />
<rect x="291.1" y="142.6" width="1.5" height="2" fill="#9c9c9c" />
<rect x="292.5" y="146.1" width="1.5" height="2" fill="#0000ff" />
<rect x="289.5" y="129.9" width="1" height="2" fill="#acacac" />
<rect x="283.0" y="125.4" width="2.5" height="1" fill="#0000ff" />
<rect x="294.7" y="143.3" width="2.5" height="1.5" fill="#a4a4a4" />
<rect x="296.7" y="131.0" width="2.5" height="1.5" fill="#acacac" />
<rect x="306.0" y="144.9" width="1.5" height="1" fill="#0000ff" />
<rect x="307.2" y="132.8" width="1" height="1.5" fill="#0000ff" />
<rect x="315.0" y="146.5" width="2" height="2" fill="#0000ff" />
<rect x="305.6" y="138.6" width="1" height="1.5" fill="#0000ff" />
<rect x="308.0" y="142.7" width="2.5" height="2" fill="#a4a4a4" />
<rect x="295.4" y="145.1" width="1" height="1" fill="#0000ff" />
<rect x="312.4" y="147.8" width="2.5" height="1" fill="#0000ff" />
<rect x="305.8" y="144.3" width="2" height="1" fill="#a4a4a4" />
<rect x="305.7" y="144.6" width="1" height="1" fill="#9c9c9c" />
<rect x="307.8" y="145.5" width="2" height="1" fill="#acacac" />
<rect x="289.7" y="140.2" width="2.5" height="2" fill="#0000ff" />
<rect x="293.9" y="144.1" width="2.5" height="1" fill="#0000ff" />
<rect x="289.6" y="139.7" width="1" height="2" fill="#0000ff" />
<rect x="308.2" y="145.5" width="1.5" height="1" fill="#a4a4a4" />
<rect x="293.1" y="142.5" width="2.5" height="1" fill="#acacac" />
<rect x="308.6" y="148.2" width="2" height="1.5" fill="#0000ff" />
<rect x="293.8" y="141.1" width="2.5" height="1" fill="#a4a4a4" />
<rect x="304.6" y="139.4" width="2" height="1.5" fill="#0000ff" />
<rect x="313.7" y="146.9" width="2.5" height="1.5" fill="#0000ff" />
<rect x="266.8" y="152.4" width="1" height="1.5" fill="#acacac" />
<rect x="251.6" y="152.8" width="2.5" height="1" fill="#acacac" />
<rect x="247.2" y="153.7" width="1.5" height="1" fill="#0000ff" />
<rect x="261.5" y="152.5" width="1" height="1.5" fill="#acacac" />
<rect x="287.7" y="144.2" width="2.5" height="2" fill="#0000ff" />
<rect x="277.1" y="151.2" width="2.5" height="2" fill="#9c9c9c" />
<rect x="268.9" y="144.8" width="2.5" height="1" fill="#acacac" />
<rect x="254.9" y="145.7" width="1.5" height="1.5" fill="#0000ff" />
<rect x="254.8" y="152.8" width="1.5" height="2" fill="#acacac" />
<rect x="269.0" y="153.5" width="1" height="2" fill="#0000ff" />
<rect x="269.2" y="151.5" width="2.5" height="1.5" fill="#9c9c9c" />
<rect x="293.8" y="148.1" width="2.5" height="2" fill="#0000ff" />
<rect x="292.8" y="147.4" width="1" height="2" fill="#0000ff" />
<rect x="258.7" y="151.6" width="2" height="1.5" fill="#9c9c9c" />
<rect x="273.9" y="151.5" width="1.5" height="2" fill="#acacac" />
<rect x="276.4" y="145.4" width="1" height="1" fill="#9c9c9c" />
<rect x="248.1" y="145.8" width="2.5" height="1" fill="#0000ff" />
<rect x="276.8" y="145.9" width="2.5" height="1" fill="#a4a4a4" />
<rect x="245.4" y="150.7" width="2" height="1.5" fill="#0000ff" />
<rect x="257.4" y="146.6" width="1" height="1" fill="#a4a4a4" />
<rect x="242.2" y="153.8" width="2" height="1" fill="#0000ff" />
<rect x="283.6" y="150.6" width="2" height="1.5" fill="#0000ff" />
<rect x="251.5" y="146.9" width="1" height="1" fill="#0000ff" />
<rect x="263.1" y="151.7" width="2.5" height="2" fill="#a4a4a4" />
<rect x="239.1" y="151.1" width="1.5" height="1" fill="#0000ff" />
<rect x="261.4" y="152.2" width="2.5" height="1.5" fill="#a4a4a4" />
<rect x="248.9" y="149.6" width="1" height="1.5" fill="#acacac" />
<rect x="277.6" y="150.1" width="2" height="1" fill="#acacac" />
<rect x="246.1" y="149.8" width="2" height="2" fill="#0000ff" />
<rect x="289.0" y="146.7" width="1" height="1" fill="#0000ff" />
<rect x="256.8" y="155.7" width="2.5" height="1" fill="#0000ff" />
<rect x="288.9" y="145.4" width="2.5" height="1" fill="#0000ff" />
<rect x="236.6" y="170.3" width="1" height="1" fill="#acacac" />
<rect x="265.9" y="183.6" width="2" height="2" fill="#0000ff" />
<rect x="245.3" y="158.0" width="2.5" height="1.5" fill="#9c9c9c" />
<rect x="264.8" y="165.1" width="2" height="1" fill="#acacac" />
<rect x="252.5" y="152.1" width="1.5" height="1" fill="#0000ff" />
<rect x="241.2" y="156.0" width="1.5" height="1" fill="#0000ff" />
<rect x="233.4" y="183.6" width="2.5" height="1.5" fill="#0000ff" />
<rect x="245.4" y="188.3" width="1.5" height="2" fill="#0000ff" />
<rect x="268.7" y="165.7" width="2" height="1.5" fill="#0000ff" />
<rect x="236.1" y="158.5" width="2.5" height="1" fill="#0000ff" />
<rect x="269.5" y="160.9" width="1.5" height="1" fill="#0000ff" />
<rect x="263.3" y="165.8" width="1" height="1" fill="#a4a4a4" />
<rect x="231.0" y="180.1" width="2" height="1" fill="#0000ff" />
<rect x="256.9" y="163.5" width="2.5" height="1" fill="#a4a4a4" />
<rect x="263.9" y="154.4" width="2" height="1" fill="#0000ff" />
<rect x="248.8" y="185.4" width="2.5" height="1.5" fill="#a4a4a4" />
<rect x="244.4" y="182.7" width="1.5" height="1" fill="#a4a4a4" />
<rect x="254.0" y="178.9" width="1.5" height="2" fill="#a4a4a4" />
<rect x="229.5" y="159.2" width="1" height="1.5" fill="#0000ff" />
<rect x="263.3" y="155.4" width="1" height="1" fill="#0000ff" />
<rect x="270.8" y="165.6" width="2.5" height="1" fill="#0000ff" />
<rect x="225.9" y="183.2" width="2" height="1" fill="#0000ff" />
<rect x="226.1" y="176.0" width="2.5" height="2" fill="#0000ff" />
<rect x="238.3" y="157.7" width="1" height="1" fill="#0000ff" />
<rect x="263.8" y="186.4" width="1" height="2" fill="#0000ff" />
<rect x="269.4" y="186.5" width="1.5" height="2" fill="#0000ff" />
<rect x="270.9" y="174.1" width="1" height="2" fill="#0000ff" />
<rect x="258.3" y="189.3" width="1" height="1" fill="#0000ff" />
<rect x="258.1" y="181.4" width="2.5" height="2" fill="#9c9c9c" />
<rect x="235.9" y="180.8" width="2.5" height="2" fill="#a4a4a4" />
<rect x="260.0" y="169.2" width="2.5" height="1" fill="#0000ff" />
<rect x="248.5" y="155.2" width="1.5" height="1" fill="#0000ff" />
<rect x="267.3" y="158.6" width="1" height="1" fill="#0000ff" />
<rect x="264.0" y="154.1" width="2" height="1.5" fill="#0000ff" />
<rect x="252.4" y="162.1" width="1" height="1" fill="#acacac" />
<rect x="263.7" y="163.1" width="1" height="2" fill="#acacac" />
<rect x="250.6" y="163.3" width="2.5" height="1" fill="#a4a4a4" />
<rect x="264.5" y="153.9" width="1.5" height="1.5" fill="#0000ff" />
<rect x="266.3" y="166.0" width="1" height="1.5" fill="#0000ff" />
<rect x="267.6" y="161.3" width="2" height="1" fill="#0000ff" />
<rect x="247.5" y="164.8" width="1" height="1" fill="#0000ff" />
<rect x="255.1" y="151.1" width="2" height="1.5" fill="#0000ff" />
<rect x="268.0" y="165.5" width="1" height="1" fill="#0000ff" />
<rect x="252.0" y="156.5" width="1" height="1" fill="#a4a4a4" />
<rect x="280.0" y="190.6" width="1.5" height="1" fill="#acacac" />
<rect x="266.8" y="187.8" width="1" height="1" fill="#0000ff" />
<rect x="277.9" y="179.5" width="2.5" height="2" fill="#0000ff" />
<rect x="279.4" y="182.1" width="1" height="1.5" fill="#a4a4a4" />
<rect x="281.2" y="194.1" width="1" height="2" fill="#0000ff" />
<rect x="283.3" y="188.2" width="1.5" height="1" fill="#acacac" />
<rect x="273.4" y="192.1" width="2" height="1.5" fill="#a4a4a4" />
<rect x="265.6" y="186.1" width="2" height="1" fill="#0000ff" />
<rect x="268.6" y="189.8" width="2.5" height="2" fill="#0000ff" />
<rect x="276.4" y="194.9" width="2" height="1" fill="#0000ff" />
<rect x="284.9" y="192.4" width="1.5" height="1" fill="#0000ff" />
<rect x="281.1" y="180.9" width="1.5" height="1.5" fill="#0000ff" />
<rect x="280.4" y="179.0" width="2.5" height="1" fill="#0000ff" />
<rect x="280.5" y="184.4" width="1.5" height="1.5" fill="#a4a4a4" />
<rect x="307.3" y="187.2" width="2.5" height="1" fill="#0000ff" />
<rect x="301.4" y="190.6" width="2" height="2" fill="#9c9c9c" />
<rect x="304.0" y="192.5" width="1.5" height="2" fill="#0000ff" />
<rect x="304.7" y="181.5" width="1" height="1" fill="#0000ff" />
<rect x="287.2" y="184.6" width="2.5" height="1" fill="#0000ff" />
<rect x="290.4" y="191.4" width="1" height="1" fill="#0000ff" />
<rect x="302.4" y="193.0" width="1.5" height="1.5" fill="#0000ff" />
<rect x="291.5" y="193.0" width="1" height="1.5" fill="#0000ff" />
<rect x="300.4" y="182.9" width="2.5" height="2" fill="#a4a4a4" />
<rect x="306.6" y="189.3" width="2" height="1.5" fill="#0000ff" />
<rect x="288.7" y="191.4" width="2.5" height="1" fill="#0000ff" />
<rect x="300.2" y="182.8" width="2" height="2" fill="#acacac" />
<rect x="246.5" y="190.3" width="2.5" height="1.5" fill="#0000ff" />
<rect x="248.1" y="185.5" width="1" height="1.5" fill="#0000ff" />
<rect x="236.1" y="180.4" width="1" height="1" fill="#acacac" />
<rect x="234.7" y="185.6" width="1.5" height="1" fill="#a4a4a4" />
<rect x="241.6" y="174.0" width="2.5" height="2" fill="#0000ff" />
<rect x="236.8" y="175.4" width="2" height="1" fill="#0000ff" />
<rect x="246.5" y="175.9" width="1.5" height="1" fill="#0000ff" />
<rect x="243.4" y="186.1" width="2" height="1" fill="#a4a4a4" />
<rect x="235.4" y="186.7" width="1" height="2" fill="#9c9c9c" />
<rect x="236.4" y="173.1" width="2" height="1" fill="#0000ff" />
<rect x="243.3" y="193.9" width="2.5" height="1" fill="#0000ff" />
<rect x="239.4" y="189.9" width="2" height="2" fill="#acacac" />
<rect x="210.2" y="168.0" width="1.5" height="1" fill="#9c9c9c" />
<rect x="225.0" y="158.6" width="2.5" height="1" fill="#0000ff" />
<rect x="211.7" y="162.5" width="2.5" height="1" fill="#9c9c9c" />
<rect x="220.4" y="156.3" width="2.5" height="2" fill="#0000ff" />
<rect x="208.8" y="158.6" width="2.5" height="1" fill="#0000ff" />
<rect x="212.0" y="173.7" width="2" height="1" fill="#0000ff" />
<rect x="223.0" y="163.3" width="1.5" height="1.5" fill="#a4a4a4" />
<rect x="222.0" y="161.1" width="1" height="2" fill="#9c9c9c" />
<rect x="210.0" y="170.9" width="2" height="2" fill="#0000ff" />
<rect x="223.4" y="169.9" width="1.5" height="2" fill="#0000ff" />
<rect x="212.2" y="165.0" width="1" height="1" fill="#9c9c9c" />
<rect x="223.6" y="172.7" width="2" height="1" fill="#0000ff" />
<rect x="219.2" y="141.7" width="2.5" height="1" fill="#0000ff" />
<rect x="211.5" y="150.7" width="2.5" height="1" fill="#0000ff" />
<rect x="208.9" y="144.0" width="1.5" height="1" fill="#0000ff" />
<rect x="220.6" y="146.2" width="2" height="1" fill="#0000ff" />
<rect x="211.5" y="140.6" width="2.5" height="1" fill="#0000ff" />
<rect x="318.9" y="120.5" width="1" height="1.5" fill="#acacac" />
<rect x="317.7" y="125.1" width="2.5" height="1.5" fill="#0000ff" />
<rect x="315.1" y="113.6" width="1" height="1" fill="#0000ff" />
<rect x="326.9" y="120.2" width="2" height="1.5" fill="#acacac" />
<rect x="330.7" y="122.8" width="1.5" height="1.5" fill="#0000ff" />
<rect x="322.4" y="112.0" width="2.5" height="1" fill="#0000ff" />
<rect x="330.1" y="121.3" width="2.5" height="1" fill="#0000ff" />
<rect x="318.6" y="124.3" width="2.5" height="1" fill="#0000ff" />
<rect x="330.8" y="121.0" width="2" height="1" fill="#0000ff" />
<rect x="318.6" y="123.5" width="1.5" height="1.5" fill="#a4a4a4" />
<rect x="327.8" y="121.2" width="1.5" height="1" fill="#9c9c9c" />
<rect x="310.2" y="190.4" width="1" height="1" fill="#0000ff" />
<rect x="306.2" y="199.2" width="2" height="2" fill="#0000ff" />
<rect x="316.7" y="193.0" width="2" height="1" fill="#0000ff" />
<rect x="305.5" y="196.2" width="1.5" height="1" fill="#0000ff" />
<rect x="304.9" y="196.1" width="1" height="2" fill="#0000ff" />
<rect x="263.8" y="204.4" width="2.5" height="1" fill="#0000ff" />
<rect x="256.2" y="206.5" width="1" height="1" fill="#0000ff" />
<rect x="277.8" y="128.4" width="1.5" height="1" fill="#0000ff" />
<rect x="266.6" y="140.7" width="2.5" height="1" fill="#0000ff" />
<rect x="291.6" y="132.3" width="1.5" height="1" fill="#9c9c9c" />
<rect x="300.2" y="148.7" width="2" height="1" fill="#0000ff" />
<rect x="284.2" y="148.4" width="1.5" height="1" fill="#0000ff" />
<rect x="305.0" y="130.1" width="1" height="1" fill="#0000ff" />
<rect x="290.3" y="142.7" width="1" height="1" fill="#9c9c9c" />
<rect x="289.6" y="142.9" width="1" height="1" fill="#acacac" />
<rect x="316.1" y="135.0" width="2" height="2" fill="#0000ff" />
<rect x="265.9" y="131.9" width="2.5" height="1" fill="#0000ff" />
<rect x="299.5" y="129.0" width="2" height="1" fill="#0000ff" />
<rect x="267.6" y="127.2" width="1.5" height="1" fill="#0000ff" />
<rect x="308.4" y="138.2" width="1.5" height="1" fill="#a4a4a4" />
<rect x="280.3" y="141.3" width="2.5" height="1.5" fill="#acacac" />
<rect x="283.4" y="126.5" width="1.5" height="1.5" fill="#0000ff" />
<rect x="268.2" y="133.0" width="1.5" height="1.5" fill="#0000ff" />
<rect x="294.2" y="129.5" width="2" height="1" fill="#0000ff" />
<rect x="296.8" y="130.1" width="2" height="2" fill="#0000ff" />
<rect x="293.7" y="132.6" width="2" height="1" fill="#acacac" />
<rect x="285.6" y="131.9" width="2" height="1" fill="#acacac" />
<rect x="302.6" y="142.5" width="2.5" height="1.5" fill="#9c9c9c" />
<rect x="302.7" y="142.8" width="1.5" height="1.5" fill="#acacac" />
<rect x="266.3" y="131.3" width="2.5" height="1" fill="#0000ff" />
<rect x="292.0" y="131.7" width="1" height="1" fill="#acacac" />
<rect x="292.1" y="129.1" width="2.5" height="2" fill="#0000ff" />
<rect x="315.5" y="133.9" width="2" height="1" fill="#0000ff" />
<rect x="277.0" y="129.0" width="1.5" height="1" fill="#0000ff" />
<rect x="312.7" y="144.3" width="1.5" height="1.5" fill="#0000ff" />
<rect x="290.1" y="126.1" width="1.5" height="1" fill="#0000ff" />
<rect x="309.3" y="145.3" width="1.5" height="1" fill="#0000ff" />
<rect x="307.9" y="141.0" width="1" height="1.5" fill="#acacac" />
<rect x="297.0" y="128.5" width="2.5" height="1" fill="#0000ff" />
<rect x="276.1" y="142.4" width="1" height="1" fill="#acacac" />
<rect x="318.1" y="108.1" width="1" height="1.5" fill="#0000ff" />
<rect x="322.1" y="106.0" width="2" height="1.5" fill="#0000ff" />
<rect x="320.3" y="107.0" width="1.5" height="1" fill="#0000ff" />
<rect x="321.4" y="103.5" width="2" height="1" fill="#0000ff" />
<rect x="324.1" y="117.6" width="2.5" height="1.5" fill="#9c9c9c" />
<rect x="324.8" y="125.0" width="2.5" height="1.5" fill="#a4a4a4" />
<rect x="325.2" y="117.5" width="1" height="1.5" fill="#a4a4a4" />
<rect x="329.8" y="118.9" width="2" height="1" fill="#0000ff" />
<rect x="332.0" y="121.8" width="1.5" height="1" fill="#0000ff" />
<rect x="319.1" y="118.7" width="1" height="1.5" fill="#acacac" />
<rect x="327.4" y="121.1" width="2" height="1" fill="#a4a4a4" />
<rect x="318.0" y="124.0" width="2.5" height="1" fill="#0000ff" />
<rect x="327.1" y="124.1" width="1.5" height="1" fill="#a4a4a4" />
<rect x="331.3" y="119.8" width="2.5" height="1" fill="#0000ff" />
<rect x="323.4" y="115.2" width="2.5" height="1.5" fill="#0000ff" />
<rect x="320.5" y="125.6" width="1.5" height="1" fill="#0000ff" />
<rect x="336.9" y="115.3" width="1.5" height="1" fill="#0000ff" />
<rect x="347.9" y="113.2" width="1" height="1" fill="#a4a4a4" />
<rect x="348.0" y="107.9" width="2" height="1" fill="#0000ff" />
<rect x="347.9" y="107.2" width="1" height="1" fill="#0000ff" />
<rect x="341.8" y="112.3" width="2" height="1" fill="#acacac" />
<rect x="335.4" y="117.3" width="1" height="1" fill="#0000ff" />
<rect x="338.0" y="116.7" width="1.5" height="1" fill="#acacac" />
<rect x="340.8" y="111.7" width="2" height="1" fill="#0000ff" />
<rect x="334.2" y="116.8" width="1.5" height="1" fill="#0000ff" />
<rect x="339.2" y="116.4" width="2.5" height="2" fill="#a4a4a4" />
<rect x="334.9" y="120.8" width="1" height="1" fill="#0000ff" />
<rect x="350.6" y="111.0" width="2" height="1.5" fill="#0000ff" />
<rect x="354.3" y="107.2" width="1.5" height="1" fill="#9c9c9c" />
<rect x="354.5" y="101.6" width="1.5" height="1" fill="#a4a4a4" />
<rect x="358.7" y="107.6" width="1" height="1" fill="#0000ff" />
<rect x="346.8" y="108.2" width="1.5" height="2" fill="#0000ff" />
<rect x="354.9" y="107.4" width="2" height="2" fill="#a4a4a4" />
<rect x="354.8" y="101.4" width="1" height="2" fill="#acacac" />
<rect x="364.1" y="97.7" width="1.5" height="2" fill="#0000ff" />
<rect x="352.2" y="101.6" width="1" height="1.5" fill="#0000ff" />
<rect x="361.1" y="103.3" width="2" height="1.5" fill="#0000ff" />
<rect x="365.1" y="100.6" width="2.5" height="1" fill="#0000ff" />
<rect x="361.5" y="98.6" width="2" height="1" fill="#a4a4a4" />
<rect x="361.5" y="101.1" width="2" height="1" fill="#a4a4a4" />
<rect x="354.3" y="98.8" width="1" height="1" fill="#0000ff" />
<rect x="353.1" y="107.8" width="2" height="1" fill="#9c9c9c" />
<rect x="366.2" y="95.0" width="1" height="1" fill="#a4a4a4" />
<rect x="370.8" y="94.1" width="2" height="1" fill="#a4a4a4" />
<rect x="362.5" y="100.1" width="1.5" height="1.5" fill="#a4a4a4" />
<rect x="361.9" y="99.5" width="2.5" height="2" fill="#0000ff" />
<rect x="366.3" y="101.7" width="2.5" height="1" fill="#0000ff" />
<rect x="362.1" y="102.8" width="2" height="1" fill="#0000ff" />
<rect x="363.8" y="96.3" width="2.5" height="1" fill="#0000ff" />
<rect x="370.6" y="93.1" width="2" height="1" fill="#acacac" />
<rect x="374.7" y="91.1" width="1.5" height="1" fill="#0000ff" />
<rect x="367.6" y="93.1" width="1.5" height="1.5" fill="#0000ff" />
<rect x="373.2" y="90.8" width="1" height="1" fill="#0000ff" />
<rect x="374.3" y="94.6" width="2" height="1" fill="#0000ff" />
<rect x="380.4" y="100.5" width="2" height="1.5" fill="#0000ff" />
<rect x="378.4" y="98.4" width="1.5" height="1.5" fill="#0000ff" />
<rect x="335.7" y="114.8" width="2.5" height="1" fill="#0000ff" />
<rect x="333.3" y="118.6" width="2.5" height="2" fill="#0000ff" />
<rect x="341.7" y="120.6" width="1.5" height="2" fill="#0000ff" />
<rect x="354.8" y="111.6" width="2.5" height="1" fill="#0000ff" />
<rect x="351.2" y="118.3" width="1" height="1.5" fill="#0000ff" />
<rect x="353.4" y="112.0" width="2.5" height="1" fill="#0000ff" />
<rect x="351.6" y="118.2" width="2.5" height="1" fill="#0000ff" />
<rect x="351.2" y="117.5" width="2.5" height="1" fill="#0000ff" />
<rect x="362.5" y="123.2" width="2.5" height="1" fill="#0000ff" />
<rect x="361.5" y="113.6" width="1.5" height="1.5" fill="#acacac" />
<rect x="362.2" y="118.5" width="1.5" height="1" fill="#acacac" />
<rect x="368.7" y="128.6" width="1" height="2" fill="#0000ff" />
<rect x="367.2" y="124.1" width="2" height="1" fill="#a4a4a4" />
<rect x="359.9" y="116.3" width="1.5" height="1.5" fill="#0000ff" />
<rect x="367.3" y="126.9" width="1" height="1" fill="#0000ff" />
<rect x="367.2" y="121.8" width="1.5" height="2" fill="#acacac" />
<rect x="368.5" y="122.1" width="1" height="2" fill="#0000ff" />
<rect x="368.1" y="122.7" width="2.5" height="1" fill="#0000ff" />
<rect x="364.7" y="115.0" width="1" height="2" fill="#9c9c9c" />
<rect x="363.3" y="123.9" width="2.5" height="1.5" fill="#0000ff" />
<rect x="366.0" y="117.1" width="1" height="1.5" fill="#a4a4a4" />
<rect x="364.9" y="115.7" width="1.5" height="2" fill="#9c9c9c" />
<rect x="400.4" y="129.7" width="2.5" height="1.5" fill="#0000ff" />
<rect x="378.3" y="109.4" width="2" height="1.5" fill="#0000ff" />
<rect x="376.6" y="109.6" width="1" height="1" fill="#0000ff" />
<rect x="388.7" y="111.5" width="2" height="1" fill="#9c9c9c" />
<rect x="397.5" y="103.2" width="2.5" height="2" fill="#0000ff" />
<rect x="395.2" y="126.4" width="2" height="1" fill="#a4a4a4" />
<rect x="400.2" y="133.3" width="2.5" height="1" fill="#0000ff" />
<rect x="408.6" y="125.3" width="1.5" height="2" fill="#0000ff" />
<rect x="381.6" y="129.4" width="1.5" height="2" fill="#0000ff" />
<rect x="398.0" y="131.9" width="1.5" height="2" fill="#0000ff" />
<rect x="386.7" y="103.1" width="1" height="1" fill="#0000ff" />
<rect x="393.6" y="135.2" width="1.5" height="1" fill="#0000ff" />
<rect x="378.1" y="121.7" width="2" height="1" fill="#0000ff" />
<rect x="404.0" y="122.7" width="1.5" height="1" fill="#a4a4a4" />
<rect x="380.5" y="125.4" width="1" height="1.5" fill="#0000ff" />
<rect x="391.4" y="134.2" width="1.5" height="1" fill="#0000ff" />
<rect x="401.9" y="122.8" width="2" height="1" fill="#a4a4a4" />
<rect x="409.9" y="127.9" width="2.5" height="1" fill="#0000ff" />
<rect x="405.9" y="113.2" width="1.5" height="1" fill="#9c9c9c" />
<rect x="411.2" y="118.2" width="2.5" height="1.5" fill="#0000ff" />
<rect x="402.9" y="116.2" width="1.5" height="1.5" fill="#acacac" />
<rect x="380.3" y="115.6" width="2.5" height="1" fill="#0000ff" />
<rect x="382.1" y="110.2" width="1" height="1" fill="#0000ff" />
<rect x="389.0" y="100.8" width="2.5" height="2" fill="#0000ff" />
<rect x="387.2" y="114.9" width="2" height="1.5" fill="#0000ff" />
<rect x="382.0" y="104.2" width="2.5" height="1" fill="#0000ff" />
<rect x="391.7" y="112.2" width="2" height="1" fill="#0000ff" />
<rect x="407.0" y="121.8" width="2" height="1" fill="#acacac" />
<rect x="416.6" y="120.4" width="1" height="1" fill="#0000ff" />
<rect x="405.8" y="121.8" width="2" height="1" fill="#9c9c9c" />
<rect x="399.6" y="124.0" width="1" height="2" fill="#0000ff" />
<rect x="415.0" y="128.7" width="2" height="1" fill="#acacac" />
<rect x="395.6" y="125.3" width="2.5" height="2" fill="#0000ff" />
<rect x="410.8" y="121.4" width="2.5" height="1.5" fill="#9c9c9c" />
<rect x="398.8" y="126.4" width="2" height="1.5" fill="#0000ff" />
<rect x="410.9" y="123.0" width="1" height="1" fill="#9c9c9c" />
<rect x="412.5" y="130.4" width="2" height="1.5" fill="#9c9c9c" />
<rect x="408.4" y="119.6" width="2.5" height="1.5" fill="#0000ff" />
<rect x="413.0" y="130.9" width="2.5" height="1" fill="#a4a4a4" />
<rect x="413.1" y="135.5" width="2" height="1" fill="#0000ff" />
<rect x="402.6" y="120.6" width="2.5" height="1.5" fill="#0000ff" />
<rect x="412.2" y="132.9" width="1.5" height="1" fill="#a4a4a4" />
<rect x="412.5" y="124.0" width="2.5" height="2" fill="#acacac" />
<rect x="370.5" y="135.7" width="1" height="2" fill="#0000ff" />
<rect x="390.7" y="137.3" width="1" height="2" fill="#0000ff" />
<rect x="398.3" y="129.4" width="1.5" height="1" fill="#0000ff" />
<rect x="376.2" y="130.7" width="1" height="1" fill="#9c9c9c" />
<rect x="393.2" y="132.6" width="1" height="2" fill="#a4a4a4" />
<rect x="373.7" y="136.2" width="2.5" height="1.5" fill="#0000ff" />
<rect x="379.9" y="135.4" width="2" height="1" fill="#acacac" />
<rect x="391.0" y="125.4" width="1" height="1" fill="#0000ff" />
<rect x="380.7" y="128.7" width="1" height="1.5" fill="#9c9c9c" />
<rect x="382.5" y="135.3" width="2" height="1" fill="#a4a4a4" />
<rect x="382.9" y="124.4" width="1" height="1.5" fill="#0000ff" />
<rect x="395.7" y="136.7" width="1" height="1" fill="#0000ff" />
<rect x="378.4" y="135.9" width="1.5" height="2" fill="#a4a4a4" />
<rect x="367.5" y="129.8" width="2" height="1.5" fill="#0000ff" />
<rect x="380.8" y="139.6" width="1.5" height="1" fill="#0000ff" />
<rect x="374.6" y="134.9" width="2" height="1" fill="#acacac" />
<rect x="395.7" y="135.4" width="1.5" height="1" fill="#0000ff" />
<rect x="371.5" y="134.1" width="2.5" height="2" fill="#0000ff" />
<rect x="380.8" y="138.7" width="2.5" height="1" fill="#0000ff" />
<rect x="400.5" y="106.6" width="1.5" height="2" fill="#0000ff" />
<rect x="405.9" y="107.0" width="2" height="1" fill="#0000ff" />
<rect x="399.3" y="105.5" width="1.5" height="1" fill="#0000ff" />
<rect x="406.2" y="100.4" width="1.5" height="2" fill="#0000ff" />
<rect x="404.9" y="108.3" width="2.5" height="1" fill="#0000ff" />
<rect x="402.9" y="108.3" width="1" height="2" fill="#0000ff" />
<rect x="411.3" y="105.4" width="2.5" height="2" fill="#0000ff" />
<rect x="412.8" y="109.3" width="1" height="1" fill="#0000ff" />
<rect x="414.7" y="100.4" width="2.5" height="2" fill="#0000ff" />
<rect x="396.7" y="90.4" width="2.5" height="1" fill="#9c9c9c" />
<rect x="408.8" y="91.6" width="2" height="1.5" fill="#0000ff" />
<rect x="395.0" y="92.3" width="1.5" height="1" fill="#acacac" />
<rect x="409.9" y="84.6" width="2.5" height="1.5" fill="#a4a4a4" />
<rect x="399.7" y="93.8" width="1" height="1" fill="#0000ff" />
<rect x="407.3" y="92.7" width="1.5" height="1" fill="#0000ff" />
<rect x="395.7" y="84.7" width="2" height="1" fill="#0000ff" />
<rect x="409.6" y="88.2" width="2" height="1.5" fill="#a4a4a4" />
<rect x="410.6" y="82.1" width="2" height="1" fill="#0000ff" />
<rect x="406.5" y="90.3" width="1.5" height="1.5" fill="#9c9c9c" />
<rect x="405.0" y="83.8" width="2" height="2" fill="#a4a4a4" />
<rect x="392.9" y="88.0" width="1.5" height="2" fill="#a4a4a4" />
<rect x="406.6" y="83.6" width="2.5" height="1.5" fill="#9c9c9c" />
<rect x="395.1" y="94.4" width="1" height="1" fill="#0000ff" />
<rect x="411.9" y="92.7" width="1.5" height="2" fill="#0000ff" />
<rect x="400.5" y="91.7" width="1.5" height="1" fill="#acacac" />
<rect x="406.9" y="84.6" width="1" height="1" fill="#a4a4a4" />
<rect x="410.9" y="84.9" width="1.5" height="2" fill="#a4a4a4" />
<rect x="409.1" y="81.2" width="1" height="2" fill="#0000ff" />
<rect x="427.9" y="98.7" width="2" height="2" fill="#0000ff" />
<rect x="413.9" y="85.8" width="2.5" height="2" fill="#0000ff" />
<rect x="433.7" y="93.1" width="1.5" height="1.5" fill="#0000ff" />
<rect x="407.4" y="87.1" width="1" height="1" fill="#0000ff" />
<rect x="415.4" y="94.7" width="2" height="1" fill="#9c9c9c" />
<rect x="423.7" y="83.5" width="2.5" height="1" fill="#0000ff" />
<rect x="426.7" y="99.6" width="2.5" height="1.5" fill="#0000ff" />
<rect x="420.0" y="88.0" width="1" height="2" fill="#acacac" />
<rect x="413.7" y="99.9" width="1" height="2" fill="#0000ff" />
<rect x="427.5" y="95.5" width="1.5" height="1" fill="#acacac" />
<rect x="417.1" y="84.9" width="1" height="1" fill="#0000ff" />
<rect x="431.8" y="93.3" width="2.5" height="1.5" fill="#0000ff" />
<rect x="427.4" y="88.6" width="1.5" height="1.5" fill="#9c9c9c" />
<rect x="412.8" y="94.9" width="1.5" height="2" fill="#9c9c9c" />
<rect x="415.2" y="85.7" width="1" height="1" fill="#0000ff" />
<rect x="427.5" y="87.9" width="2.5" height="1.5" fill="#acacac" />
<rect x="409.7" y="95.5" width="1" height="1" fill="#0000ff" />
<rect x="415.1" y="88.9" width="2.5" height="1.5" fill="#acacac" />
<rect x="420.1" y="85.0" width="1.5" height="1" fill="#0000ff" />
<rect x="438.0" y="93.9" width="2" height="1.5" fill="#acacac" />
<rect x="444.3" y="82.0" width="1" height="1" fill="#0000ff" />
<rect x="440.7" y="89.9" width="2.5" height="1" fill="#acacac" />
<rect x="446.5" y="86.3" width="2" height="1" fill="#0000ff" />
<rect x="433.6" y="82.1" width="2.5" height="1" fill="#9c9c9c" />
<rect x="434.0" y="95.6" width="1" height="2" fill="#0000ff" />
<rect x="430.9" y="93.6" width="2.5" height="2" fill="#9c9c9c" />
<rect x="443.0" y="84.5" width="2" height="1" fill="#a4a4a4" />
<rect x="444.0" y="84.0" width="2" height="1.5" fill="#a4a4a4" />
<rect x="439.1" y="95.8" width="1.5" height="1.5" fill="#0000ff" />
<rect x="432.5" y="94.3" width="1.5" height="2" fill="#9c9c9c" />
<rect x="428.0" y="92.8" width="1.5" height="1.5" fill="#acacac" />
<rect x="438.0" y="81.8" width="1" height="1" fill="#a4a4a4" />
<rect x="443.3" y="85.4" width="1" height="2" fill="#a4a4a4" />
<rect x="427.4" y="83.8" width="1" height="1" fill="#0000ff" />
<rect x="443.0" y="87.1" width="1.5" height="2" fill="#acacac" />
<rect x="442.6" y="90.1" width="2.5" height="2" fill="#0000ff" />
<rect x="461.6" y="75.5" width="1" height="1" fill="#0000ff" />
<rect x="450.0" y="76.9" width="2" height="1" fill="#acacac" />
<rect x="444.9" y="85.7" width="2" height="1.5" fill="#acacac" />
<rect x="460.2" y="74.6" width="1.5" height="1" fill="#0000ff" />
<rect x="439.4" y="80.9" width="2" height="1" fill="#0000ff" />
<rect x="445.4" y="79.2" width="1.5" height="2" fill="#acacac" />
<rect x="441.9" y="83.9" width="1" height="1.5" fill="#acacac" />
<rect x="440.4" y="84.2" width="2.5" height="2" fill="#acacac" />
<rect x="460.9" y="76.6" width="2.5" height="2" fill="#0000ff" />
<rect x="455.1" y="85.6" width="2" height="1" fill="#0000ff" />
<rect x="445.3" y="79.4" width="2" height="1" fill="#acacac" />
<rect x="460.7" y="76.4" width="2.5" height="1" fill="#0000ff" />
<rect x="445.3" y="88.5" width="2" height="1" fill="#0000ff" />
<rect x="444.3" y="81.0" width="1" height="2" fill="#a4a4a4" />
<rect x="446.3" y="87.2" width="2" height="1" fill="#9c9c9c" />
<rect x="440.5" y="91.7" width="2.5" height="1" fill="#0000ff" />
<rect x="445.3" y="103.1" width="1" height="1" fill="#0000ff" />
<rect x="441.0" y="103.9" width="1.5" height="1.5" fill="#0000ff" />
<rect x="440.3" y="93.4" width="1" height="1.5" fill="#0000ff" />
<rect x="444.1" y="104.6" width="2.5" height="1" fill="#0000ff" />
<rect x="444.0" y="90.0" width="1.5" height="1" fill="#0000ff" />
<rect x="443.5" y="105.6" width="1" height="1" fill="#0000ff" />
<rect x="423.1" y="101.0" width="1.5" height="1.5" fill="#0000ff" />
<rect x="429.9" y="93.7" width="2.5" height="2" fill="#0000ff" />
<rect x="431.4" y="95.5" width="2" height="1" fill="#0000ff" />
<rect x="423.8" y="95.8" width="2" height="1.5" fill="#0000ff" />
<rect x="398.0" y="91.3" width="1.5" height="1" fill="#0000ff" />
<rect x="400.2" y="95.3" width="1.5" height="1" fill="#0000ff" />
<rect x="400.3" y="96.4" width="1" height="2" fill="#0000ff" />
<rect x="391.5" y="98.5" width="1.5" height="2" fill="#0000ff" />
<rect x="400.2" y="94.2" width="2" height="1" fill="#0000ff" />
<rect x="391.5" y="91.2" width="2" height="1.5" fill="#0000ff" />
<rect x="398.8" y="93.0" width="1" height="2" fill="#0000ff" />
<rect x="477.2" y="85.1" width="1.5" height="1" fill="#a4a4a4" />
<rect x="468.3" y="83.9" width="1.5" height="1" fill="#a4a4a4" />
<rect x="482.2" y="83.6" width="2.5" height="2" fill="#0000ff" />
<rect x="479.4" y="80.0" width="1" height="1" fill="#0000ff" />
<rect x="473.1" y="81.6" width="1.5" height="1" fill="#9c9c9c" />
<rect x="473.4" y="86.9" width="1" height="1" fill="#9c9c9c" />
<rect x="475.9" y="85.9" width="2" height="1.5" fill="#acacac" />
<rect x="478.8" y="85.1" width="1" height="1.5" fill="#0000ff" />
<rect x="482.0" y="81.1" width="1.5" height="1.5" fill="#0000ff" />
<rect x="478.7" y="84.6" width="2.5" height="1" fill="#a4a4a4" />
<rect x="474.1" y="82.3" width="2" height="1" fill="#9c9c9c" />
<rect x="418.4" y="151.9" width="2" height="1.5" fill="#0000ff" />
<rect x="416.1" y="140.9" width="1.5" height="2" fill="#9c9c9c" />
<rect x="410.7" y="155.3" width="2.5" height="2" fill="#0000ff" />
<rect x="416.6" y="151.1" width="2.5" height="1" fill="#9c9c9c" />
<rect x="412.7" y="151.5" width="1" height="2" fill="#acacac" />
<rect x="415.6" y="142.0" width="2.5" height="1.5" fill="#a4a4a4" />
<rect x="417.2" y="150.9" width="1.5" height="2" fill="#0000ff" />
<rect x="414.0" y="157.2" width="2" height="1.5" fill="#0000ff" />
<rect x="412.1" y="143.9" width="2" height="1" fill="#9c9c9c" />
<rect x="415.9" y="148.4" width="2" height="1" fill="#acacac" />
<rect x="411.0" y="152.2" width="1" height="1" fill="#9c9c9c" />
<rect x="414.9" y="133.5" width="1.5" height="1.5" fill="#0000ff" />
<rect x="410.0" y="142.1" width="2" height="2" fill="#0000ff" />
<rect x="410.1" y="139.9" width="1.5" height="2" fill="#0000ff" />
<rect x="413.1" y="171.8" width="2.5" height="1" fill="#0000ff" />
<rect x="410.5" y="173.0" width="1.5" height="1.5" fill="#0000ff" />
<rect x="411.1" y="152.7" width="2.5" height="2" fill="#0000ff" />
<rect x="409.1" y="171.2" width="1" height="1" fill="#0000ff" />
<rect x="412.0" y="155.5" width="2.5" height="1.5" fill="#9c9c9c" />
<rect x="410.8" y="154.9" width="1" height="1.5" fill="#acacac" />
<rect x="414.0" y="158.9" width="1" height="2" fill="#acacac" />
<rect x="410.7" y="171.2" width="1" height="2" fill="#0000ff" />
<rect x="411.8" y="171.0" width="2" height="2" fill="#0000ff" />
<rect x="409.6" y="167.0" width="1.5" height="1" fill="#9c9c9c" />
<rect x="408.0" y="166.0" width="1" height="1" fill="#0000ff" />
<rect x="410.1" y="164.7" width="2" height="1.5" fill="#9c9c9c" />
<rect x="423.4" y="184.1" width="2" height="2" fill="#0000ff" />
<rect x="424.2" y="191.6" width="2.5" height="1" fill="#0000ff" />
<rect x="424.1" y="192.4" width="1.5" height="1" fill="#0000ff" />
<rect x="424.2" y="188.3" width="2" height="2" fill="#0000ff" />
<rect x="417.1" y="174.8" width="2" height="1" fill="#0000ff" />
<rect x="419.4" y="177.0" width="2.5" height="1" fill="#9c9c9c" />
<rect x="419.4" y="182.8" width="1" height="2" fill="#9c9c9c" />
<rect x="421.6" y="188.2" width="2.5" height="1.5" fill="#a4a4a4" />
<rect x="418.3" y="178.1" width="2.5" height="1" fill="#a4a4a4" />
<rect x="419.9" y="185.2" width="1.5" height="1" fill="#acacac" />
<rect x="425.1" y="191.9" width="1" height="1" fill="#0000ff" />
<rect x="423.4" y="188.3" width="1.5" height="2" fill="#a4a4a4" />
<rect x="418.4" y="175.7" width="2" height="1" fill="#9c9c9c" />
<rect x="417.4" y="174.6" width="2" height="1" fill="#0000ff" />
<rect x="422.9" y="189.0" width="1.5" height="1.5" fill="#acacac" />
<rect x="423.0" y="191.9" width="1" height="2" fill="#9c9c9c" />
<rect x="442.3" y="160.7" width="2" height="1.5" fill="#acacac" />
<rect x="445.8" y="162.0" width="2.5" height="1.5" fill="#0000ff" />
<rect x="434.3" y="159.3" width="1" height="2" fill="#a4a4a4" />
<rect x="441.6" y="162.0" width="1" height="1" fill="#acacac" />
<rect x="441.8" y="160.4" width="1.5" height="2" fill="#acacac" />
<rect x="441.3" y="158.5" width="1.5" height="1" fill="#0000ff" />
<rect x="442.5" y="158.0" width="1.5" height="1.5" fill="#0000ff" />
<rect x="447.6" y="161.9" width="1.5" height="1" fill="#0000ff" />
<rect x="438.7" y="163.6" width="2" height="1.5" fill="#acacac" />
<rect x="444.3" y="158.4" width="1.5" height="1" fill="#0000ff" />
<rect x="436.2" y="163.3" width="2.5" height="1" fill="#acacac" />
<rect x="474.0" y="154.7" width="2.5" height="2" fill="#0000ff" />
<rect x="475.4" y="150.9" width="1" height="1" fill="#0000ff" />
<rect x="473.5" y="148.3" width="1.5" height="1" fill="#0000ff" />
<rect x="467.4" y="147.8" width="2.5" height="1.5" fill="#0000ff" />
<rect x="465.0" y="149.1" width="2" height="1.5" fill="#0000ff" />
<rect x="457.8" y="159.3" width="1" height="2" fill="#0000ff" />
<rect x="468.8" y="157.2" width="1" height="1.5" fill="#0000ff" />
<rect x="460.9" y="166.1" width="1" height="2" fill="#0000ff" />
<rect x="457.6" y="162.8" width="2.5" height="1.5" fill="#0000ff" />
<rect x="485.6" y="192.6" width="1.5" height="1" fill="#0000ff" />
<rect x="481.5" y="179.2" width="2" height="1.5" fill="#0000ff" />
<rect x="483.0" y="193.4" width="2" height="1" fill="#0000ff" />
<rect x="482.6" y="180.7" width="1" height="1" fill="#9c9c9c" />
<rect x="480.3" y="183.6" width="2.5" height="1.5" fill="#9c9c9c" />
<rect x="484.2" y="184.6" width="2.5" height="1" fill="#9c9c9c" />
<rect x="480.0" y="191.2" width="1" height="1" fill="#0000ff" />
<rect x="479.9" y="192.6" width="1" height="1" fill="#0000ff" />
<rect x="479.7" y="189.7" width="2.5" height="1" fill="#0000ff" />
<rect x="484.7" y="185.0" width="2" height="1" fill="#9c9c9c" />
<rect x="479.4" y="186.2" width="2" height="1" fill="#0000ff" />
<rect x="218.3" y="258.7" width="1" height="2" fill="#0000ff" />
<rect x="210.1" y="257.8" width="2" height="1" fill="#0000ff" />
<rect x="211.3" y="259.9" width="1.5" height="2" fill="#0000ff" />
<rect x="217.0" y="258.6" width="1" height="1" fill="#0000ff" />
<rect x="222.7" y="283.3" width="2.5" height="2" fill="#0000ff" />
<rect x="222.9" y="285.6" width="1" height="1" fill="#0000ff" />
<rect x="211.5" y="284.1" width="1" height="2" fill="#0000ff" />
<rect x="217.5" y="288.0" width="1.5" height="1.5" fill="#0000ff" />
<rect x="215.6" y="287.2" width="1.5" height="1" fill="#0000ff" />
<rect x="223.2" y="287.0" width="1.5" height="1.5" fill="#0000ff" />
<rect x="255.2" y="257.3" width="1" height="1.5" fill="#a4a4a4" />
<rect x="252.9" y="247.7" width="2" height="1" fill="#0000ff" />
<rect x="265.6" y="250.5" width="2" height="1" fill="#a4a4a4" />
<rect x="260.1" y="245.4" width="2.5" height="1" fill="#0000ff" />
<rect x="252.5" y="263.7" width="2.5" height="2" fill="#0000ff" />
<rect x="255.8" y="266.2" width="1" height="1" fill="#0000ff" />
<rect x="251.2" y="253.3" width="2" height="2" fill="#0000ff" />
<rect x="258.2" y="251.0" width="1.5" height="2" fill="#9c9c9c" />
<rect x="264.4" y="263.9" width="1" height="1.5" fill="#a4a4a4" />
<rect x="253.1" y="260.6" width="1" height="1" fill="#acacac" />
<rect x="267.2" y="269.8" width="1" height="1" fill="#0000ff" />
<rect x="259.8" y="249.3" width="2" height="2" fill="#a4a4a4" />
<rect x="252.2" y="255.3" width="2" height="1" fill="#9c9c9c" />
<rect x="248.3" y="256.6" width="1" height="1" fill="#0000ff" />
<rect x="267.1" y="260.1" width="2" height="1" fill="#a4a4a4" />
<rect x="253.8" y="249.4" width="1" height="1" fill="#0000ff" />
<rect x="261.4" y="211.5" width="2" height="1" fill="#0000ff" />
<rect x="261.5" y="267.6" width="2" height="1" fill="#0000ff" />
<rect x="278.5" y="192.2" width="1.5" height="2" fill="#0000ff" />
<rect x="284.5" y="194.4" width="1.5" height="1.5" fill="#0000ff" />
<rect x="284.9" y="193.9" width="2.5" height="1" fill="#0000ff" />
<rect x="282.5" y="188.3" width="2.5" height="2" fill="#0000ff" />
<rect x="292.5" y="191.0" width="1" height="1.5" fill="#0000ff" />
<rect x="300.6" y="188.8" width="2.5" height="2" fill="#0000ff" />
<rect x="298.9" y="193.4" width="2" height="1" fill="#0000ff" />
<rect x="299.1" y="188.8" width="1.5" height="1" fill="#0000ff" />
<rect x="293.1" y="189.9" width="1" height="1" fill="#0000ff" />
<rect x="313.9" y="198.5" width="1" height="2" fill="#0000ff" />
<rect x="313.7" y="189.9" width="2.5" height="1" fill="#0000ff" />
<rect x="315.9" y="198.4" width="1" height="2" fill="#0000ff" />
<rect x="370.0" y="213.6" width="1.5" height="2" fill="#0000ff" />
<rect x="374.7" y="206.8" width="1.5" height="2" fill="#0000ff" />
<rect x="372.5" y="205.8" width="1.5" height="2" fill="#0000ff" />
<rect x="331.6" y="226.2" width="2" height="2" fill="#0000ff" />
<rect x="337.4" y="224.2" width="1.5" height="2" fill="#a4a4a4" />
<rect x="340.6" y="223.8" width="2" height="1.5" fill="#9c9c9c" />
<rect x="341.6" y="225.6" width="1" height="2" fill="#0000ff" />
<rect x="352.0" y="221.8" width="2" height="1" fill="#0000ff" />
<rect x="336.1" y="220.5" width="1" height="1" fill="#acacac" />
<rect x="343.7" y="217.2" width="2.5" height="1" fill="#0000ff" />
<rect x="339.3" y="219.7" width="2" height="1.5" fill="#a4a4a4" />
<rect x="344.3" y="222.7" width="2" height="1" fill="#9c9c9c" />
<rect x="344.8" y="223.1" width="1" height="1.5" fill="#9c9c9c" />
<rect x="347.3" y="219.0" width="1.5" height="1" fill="#acacac" />
<rect x="332.5" y="226.4" width="2" height="1.5" fill="#0000ff" />
<rect x="346.5" y="217.6" width="2" height="1" fill="#0000ff" />
<rect x="334.6" y="221.2" width="2.5" height="1.5" fill="#acacac" />
<rect x="336.3" y="218.6" width="2" height="1" fill="#0000ff" />
<rect x="339.5" y="220.1" width="1.5" height="1" fill="#9c9c9c" />
<rect x="383.0" y="248.3" width="2.5" height="1.5" fill="#0000ff" />
<rect x="385.4" y="247.1" width="1.5" height="1" fill="#0000ff" />
<rect x="386.8" y="248.7" width="1.5" height="1" fill="#0000ff" />
<rect x="383.8" y="246.6" width="2.5" height="1.5" fill="#0000ff" />
<rect x="381.2" y="247.0" width="1" height="2" fill="#0000ff" />
<rect x="393.6" y="241.8" width="2.5" height="1.5" fill="#0000ff" />
<rect x="384.7" y="232.9" width="2" height="1.5" fill="#0000ff" />
<rect x="383.9" y="248.1" width="2" height="1.5" fill="#0000ff" />
<rect x="358.6" y="257.6" width="1.5" height="1.5" fill="#0000ff" />
<rect x="346.2" y="246.1" width="1.5" height="2" fill="#0000ff" />
<rect x="354.6" y="246.6" width="2" height="1" fill="#0000ff" />
<rect x="348.7" y="246.4" width="1.5" height="1" fill="#0000ff" />
<rect x="338.3" y="252.1" width="2" height="1" fill="#9c9c9c" />
<rect x="340.8" y="257.4" width="2.5" height="1" fill="#9c9c9c" />
<rect x="360.0" y="259.3" width="2.5" height="2" fill="#0000ff" />
<rect x="358.6" y="259.4" width="1.5" height="1" fill="#0000ff" />
<rect x="337.8" y="262.2" width="2.5" height="1.5" fill="#0000ff" />
<rect x="331.4" y="250.5" width="2.5" height="1" fill="#0000ff" />
<rect x="335.3" y="254.2" width="1" height="1.5" fill="#acacac" />
<rect x="347.9" y="250.3" width="1" height="2" fill="#9c9c9c" />
<rect x="347.2" y="245.1" width="1.5" height="2" fill="#0000ff" />
<rect x="330.9" y="256.8" width="1" height="1" fill="#0000ff" />
<rect x="360.0" y="259.1" width="2.5" height="2" fill="#0000ff" />
<rect x="354.7" y="255.1" width="1" height="1" fill="#9c9c9c" />
<rect x="364.1" y="252.0" width="2.5" height="1" fill="#0000ff" />
<rect x="355.4" y="253.6" width="2" height="2" fill="#a4a4a4" />
<rect x="335.3" y="256.3" width="2.5" height="1" fill="#a4a4a4" />
<rect x="331.5" y="258.6" width="2" height="1" fill="#0000ff" />
<rect x="351.4" y="250.8" width="1.5" height="1" fill="#acacac" />
<rect x="334.5" y="254.2" width="2.5" height="1" fill="#a4a4a4" />
<rect x="365.4" y="241.7" width="2" height="1" fill="#a4a4a4" />
<rect x="368.4" y="258.9" width="1" height="2" fill="#0000ff" />
<rect x="365.2" y="258.9" width="1.5" height="1.5" fill="#0000ff" />
<rect x="370.7" y="245.9" width="1" height="2" fill="#acacac" />
<rect x="362.2" y="243.4" width="2" height="1" fill="#acacac" />
<rect x="364.9" y="261.3" width="1.5" height="1.5" fill="#0000ff" />
<rect x="354.9" y="246.9" width="1.5" height="1.5" fill="#0000ff" />
<rect x="358.2" y="258.8" width="1.5" height="1" fill="#0000ff" />
<rect x="364.0" y="261.5" width="1.5" height="1.5" fill="#0000ff" />
<rect x="361.5" y="241.8" width="2" height="1.5" fill="#a4a4a4" />
<rect x="367.4" y="259.4" width="2.5" height="1" fill="#0000ff" />
<rect x="371.3" y="252.5" width="2" height="1" fill="#a4a4a4" />
<rect x="353.5" y="240.4" width="2.5" height="1" fill="#0000ff" />
<rect x="368.7" y="255.1" width="1" height="1" fill="#acacac" />
<rect x="373.6" y="246.6" width="2.5" height="1.5" fill="#0000ff" />
<rect x="358.7" y="253.2" width="1.5" height="1" fill="#9c9c9c" />
<rect x="375.9" y="252.6" width="1.5" height="1.5" fill="#0000ff" />
<rect x="371.0" y="259.3" width="1.5" height="2" fill="#0000ff" />
<rect x="373.9" y="258.5" width="2.5" height="1.5" fill="#0000ff" />
<rect x="376.7" y="256.1" width="1.5" height="1" fill="#0000ff" />
<rect x="336.1" y="264.3" width="1" height="1" fill="#9c9c9c" />
<rect x="332.1" y="271.8" width="2" height="1.5" fill="#a4a4a4" />
<rect x="339.3" y="274.4" width="2" height="2" fill="#0000ff" />
<rect x="328.8" y="269.9" width="2.5" height="1" fill="#0000ff" />
<rect x="335.8" y="261.1" width="2" height="1" fill="#0000ff" />
<rect x="328.3" y="262.8" width="2" height="2" fill="#0000ff" />
<rect x="344.9" y="265.4" width="2" height="1.5" fill="#acacac" />
<rect x="342.4" y="264.3" width="1.5" height="1" fill="#9c9c9c" />
<rect x="342.0" y="265.2" width="2" height="1" fill="#9c9c9c" />
<rect x="347.6" y="272.8" width="2" height="1" fill="#0000ff" />
<rect x="333.5" y="273.6" width="2.5" height="1" fill="#0000ff" />
<rect x="338.8" y="275.8" width="1.5" height="1.5" fill="#0000ff" />
<rect x="334.0" y="264.7" width="1.5" height="1" fill="#a4a4a4" />
<rect x="334.2" y="261.1" width="2.5" height="2" fill="#0000ff" />
<rect x="357.7" y="263.0" width="2.5" height="1" fill="#9c9c9c" />
<rect x="347.2" y="262.2" width="2" height="2" fill="#acacac" />
<rect x="347.8" y="268.2" width="2" height="1" fill="#9c9c9c" />
<rect x="344.5" y="272.0" width="2" height="1.5" fill="#0000ff" />
<rect x="347.5" y="265.6" width="2.5" height="1.5" fill="#acacac" />
<rect x="348.6" y="276.5" width="2.5" height="2" fill="#0000ff" />
<rect x="349.2" y="267.2" width="2" height="1" fill="#a4a4a4" />
<rect x="355.5" y="275.1" width="2" height="2" fill="#0000ff" />
<rect x="356.7" y="274.9" width="1" height="1.5" fill="#0000ff" />
<rect x="352.6" y="255.2" width="2.5" height="1" fill="#0000ff" />
<rect x="353.1" y="260.3" width="2.5" height="1" fill="#a4a4a4" />
<rect x="361.6" y="261.8" width="1" height="1" fill="#0000ff" />
<rect x="354.7" y="260.7" width="2" height="1" fill="#a4a4a4" />
<rect x="344.8" y="267.7" width="2" height="1" fill="#0000ff" />
<rect x="317.0" y="264.2" width="1.5" height="1.5" fill="#0000ff" />
<rect x="307.7" y="265.9" width="2" height="2" fill="#0000ff" />
<rect x="308.1" y="263.6" width="2.5" height="1.5" fill="#0000ff" />
<rect x="276.0" y="257.7" width="2" height="1.5" fill="#0000ff" />
<rect x="274.7" y="257.6" width="2" height="1" fill="#0000ff" />
<rect x="271.7" y="260.0" width="2" height="1" fill="#0000ff" />
<rect x="272.8" y="248.4" width="1" height="1" fill="#0000ff" />
<rect x="270.8" y="245.6" width="1" height="2" fill="#0000ff" />
<rect x="263.8" y="251.9" width="1" height="1.5" fill="#0000ff" />
<rect x="421.1" y="266.7" width="2.5" height="2" fill="#0000ff" />
<rect x="418.6" y="267.6" width="2" height="1" fill="#0000ff" />
<rect x="416.1" y="276.3" width="1.5" height="1" fill="#0000ff" />
<rect x="409.0" y="271.8" width="2" height="2" fill="#0000ff" />
<rect x="423.4" y="269.4" width="1" height="1" fill="#0000ff" />
<rect x="418.4" y="275.7" width="2" height="1.5" fill="#0000ff" />
<rect x="486.7" y="267.8" width="2.5" height="1" fill="#0000ff" />
<rect x="485.7" y="269.3" width="2" height="2" fill="#0000ff" />
<rect x="480.5" y="193.6" width="2" height="2" fill="#0000ff" />
<rect x="481.0" y="201.0" width="1.5" height="1" fill="#9c9c9c" />
<rect x="481.3" y="200.5" width="2" height="1.5" fill="#9c9c9c" />
<rect x="483.5" y="204.9" width="1" height="1" fill="#acacac" />
<rect x="486.1" y="202.7" width="2.5" height="1" fill="#0000ff" />
<rect x="485.2" y="200.8" width="2" height="1" fill="#a4a4a4" />
<rect x="480.6" y="196.1" width="1" height="1" fill="#0000ff" />
<rect x="484.8" y="200.8" width="1.5" height="1" fill="#9c9c9c" />
<rect x="480.2" y="198.7" width="2.5" height="1" fill="#0000ff" />
<rect x="479.7" y="203.6" width="1.5" height="1" fill="#0000ff" />
<rect x="483.2" y="206.3" width="1" height="1" fill="#acacac" />
<polygon points="121.5,139.9 119.9,143.5 117.2,144.1 116.0,141.4 116.2,138.0 118.2,135.0 120.8,134.1 122.5,136.2" fill="#ff0000"/>
<polygon points="120.3,133.0 119.3,134.2 117.0,134.5 115.0,134.0 114.4,133.0 114.8,131.9 117.0,131.5 119.3,131.9" fill="#ff0000"/>
<polygon points="124.5,136.0 123.9,137.1 122.5,137.7 121.1,137.0 120.5,136.0 121.0,134.9 122.5,134.6 123.9,134.9" fill="#ff0000"/>
<polygon points="109.5,139.5 109.2,140.3 108.5,140.7 107.8,140.3 107.5,139.5 107.8,138.6 108.5,138.4 109.2,138.6" fill="#ff0000"/>
<polygon points="248.8,131.5 248.5,133.0 247.5,133.6 246.5,132.9 246.2,131.5 246.4,130.0 247.5,129.3 248.5,130.1" fill="#ff0000"/>
<polygon points="286.3,139.0 284.8,140.2 282.5,140.6 280.0,140.3 279.5,139.0 279.8,137.6 282.5,137.1 284.6,137.9" fill="#ff0000"/>
<polygon points="294.6,137.5 293.9,138.9 292.0,139.6 289.8,139.1 289.3,137.5 290.1,136.1 292.0,135.5 294.3,135.8" fill="#ff0000"/>
<polygon points="258.8,170.0 258.4,172.8 256.0,174.0 253.6,172.8 252.7,170.0 253.6,167.2 256.0,167.0 258.2,167.4" fill="#ff0000"/>
<polygon points="262.9,175.0 261.9,176.9 260.0,177.7 257.6,177.4 256.9,175.0 257.8,172.8 260.0,172.0 262.0,173.0" fill="#ff0000"/>
<polygon points="264.7,177.5 264.0,178.9 263.0,179.6 261.8,179.1 261.6,177.5 261.9,176.1 263.0,175.4 264.2,175.9" fill="#ff0000"/>
<polygon points="264.7,182.5 264.4,183.8 263.5,184.1 262.5,183.9 262.3,182.5 262.6,181.2 263.5,180.5 264.4,181.3" fill="#ff0000"/>
<polygon points="275.2,150.5 274.6,151.0 273.5,151.2 272.4,151.0 271.9,150.5 272.3,149.9 273.5,149.8 274.5,150.0" fill="#ff0000"/>
<polygon points="249.5,158.0 249.2,159.1 248.5,159.6 247.8,159.0 247.6,158.0 247.8,156.9 248.5,156.5 249.2,157.0" fill="#ff0000"/>
<polygon points="311.9,192.0 311.7,192.7 311.0,192.9 310.3,192.7 310.1,192.0 310.2,191.2 311.0,191.0 311.8,191.2" fill="#ff0000"/>
<polygon points="352.7,255.0 352.5,255.4 351.5,255.5 350.4,255.5 350.1,255.0 350.4,254.5 351.5,254.4 352.3,254.6" fill="#ff0000"/>
<polygon points="369.0,256.0 368.8,256.8 368.0,256.9 367.3,256.7 367.0,256.0 367.3,255.3 368.0,255.1 368.8,255.2" fill="#ff0000"/>
<polygon points="311.8,193.8 311.5,194.5 310.8,194.8 310.1,194.5 309.7,193.8 310.2,193.2 310.8,192.8 311.6,193.0" fill="#ff0000"/>
<polygon points="285.7,138.0 285.0,138.6 284.0,139.1 282.9,138.7 282.6,138.0 283.0,137.4 284.0,137.0 285.2,137.3" fill="#ff0000"/>
<polygon points="282.3,138.0 282.0,138.6 281.0,139.1 280.0,138.6 279.3,138.0 279.8,137.2 281.0,136.9 282.0,137.3" fill="#ff0000"/>
<polygon points="273.0,149.0 272.8,149.4 272.0,149.5 271.4,149.3 270.9,149.0 271.2,148.6 272.0,148.5 272.6,148.7" fill="#ff0000"/>
<rect x="50" y="139" width="3.5" height="5" fill="#ff8800" />
<rect x="50" y="140.5" width="2" height="2.5" fill="#ffee00" />
<rect x="255.5" y="168.5" width="1" height="1" fill="#ff9900" />
<rect x="259.5" y="174" width="1" height="1" fill="#ff9900" />
</g>
<g shape-rendering="crispEdges">
<rect x="228.0" y="199.3" width="1.5" height="1" fill="#00ee90" />
<rect x="235.5" y="199.7" width="1" height="2.5" fill="#ffff66" />
<rect x="221.8" y="235.6" width="3" height="1" fill="#ffff66" />
<rect x="224.1" y="212.6" width="3" height="2" fill="#000" />
<rect x="248.3" y="235.0" width="1.5" height="2" fill="#00ee90" />
<rect x="237.2" y="236.5" width="1.5" height="1.5" fill="#00ee90" />
<rect x="260.6" y="233.5" width="3" height="1.5" fill="#00ee90" />
<rect x="255.5" y="195.3" width="2.5" height="2.5" fill="#000" />
<rect x="263.8" y="240.7" width="3" height="1.5" fill="#00ee90" />
<rect x="227.0" y="211.4" width="1" height="1" fill="#000" />
<rect x="232.5" y="199.1" width="1.5" height="1" fill="#00ee90" />
<rect x="243.3" y="224.7" width="2" height="1.2" fill="#00ee90" />
<rect x="229.5" y="240.5" width="1" height="2.5" fill="#000" />
<rect x="227.6" y="200.0" width="1.5" height="1.2" fill="#ffff66" />
<rect x="225.7" y="227.2" width="3" height="1.2" fill="#000" />
<rect x="259.0" y="201.3" width="2" height="2" fill="#00ee90" />
<rect x="244.0" y="240.9" width="3" height="1.5" fill="#00ee90" />
<rect x="248.1" y="231.2" width="2.5" height="1.2" fill="#000" />
<rect x="243.9" y="246.0" width="3" height="2.5" fill="#00ee90" />
<rect x="245.2" y="233.1" width="2" height="1.2" fill="#00ee90" />
<rect x="261.6" y="221.7" width="3" height="2" fill="#00ee90" />
<rect x="267.8" y="236.7" width="1.5" height="2" fill="#000" />
<rect x="226.5" y="207.8" width="2.5" height="2.5" fill="#00ee90" />
<rect x="251.4" y="221.9" width="1" height="1" fill="#00ee90" />
<rect x="237.9" y="203.3" width="2" height="1.5" fill="#ffff66" />
<rect x="258.3" y="232.9" width="2" height="2.5" fill="#000" />
<rect x="247.9" y="195.0" width="1" height="1.5" fill="#ffff66" />
<rect x="256.0" y="205.8" width="1.5" height="2.5" fill="#00ee90" />
<rect x="267.6" y="215.2" width="1" height="2.5" fill="#ffff66" />
<rect x="228.9" y="257.7" width="2" height="1.2" fill="#00ee90" />
<rect x="269.1" y="231.2" width="1" height="1" fill="#ffff66" />
<rect x="242.6" y="190.4" width="1.5" height="1.2" fill="#ffff66" />
<rect x="242.8" y="216.7" width="1.5" height="1.5" fill="#ffff66" />
<rect x="236.8" y="220.3" width="1.5" height="1.5" fill="#ffff66" />
<rect x="236.2" y="229.6" width="2" height="2" fill="#000" />
<rect x="260.5" y="210.8" width="2" height="1" fill="#00ee90" />
<rect x="225.3" y="208.5" width="3" height="1.2" fill="#00ee90" />
<rect x="268.2" y="223.1" width="1" height="1.5" fill="#00ee90" />
<rect x="264.6" y="231.3" width="2" height="2" fill="#00ee90" />
<rect x="253.4" y="256.2" width="3" height="2" fill="#ffff66" />
<rect x="247.5" y="258.1" width="2.5" height="1.2" fill="#00ee90" />
<rect x="262.1" y="233.4" width="2.5" height="1" fill="#00ee90" />
<rect x="237.9" y="205.6" width="1" height="1" fill="#000" />
<rect x="233.1" y="231.5" width="1.5" height="1.2" fill="#00ee90" />
<rect x="212.9" y="213.9" width="2.5" height="1.2" fill="#00ee90" />
<rect x="241.9" y="245.6" width="3" height="1" fill="#00ee90" />
<rect x="282.0" y="234.5" width="1" height="1" fill="#ffff66" />
<rect x="268.5" y="210.2" width="2.5" height="1.2" fill="#00ee90" />
<rect x="258.9" y="206.5" width="1.5" height="2" fill="#00ee90" />
<rect x="257.1" y="222.2" width="2.5" height="1.5" fill="#00ee90" />
<rect x="217.3" y="237.9" width="3" height="2" fill="#000" />
<rect x="256.0" y="237.4" width="3" height="1" fill="#ffff66" />
<rect x="261.0" y="227.9" width="3" height="1.2" fill="#00aadd" />
<rect x="263.6" y="228.9" width="1" height="1.2" fill="#ffff66" />
<rect x="277.7" y="237.3" width="1" height="2.5" fill="#00ee90" />
<rect x="246.7" y="251.8" width="1" height="2.5" fill="#ffff66" />
<rect x="261.7" y="231.4" width="2" height="1.2" fill="#00ee90" />
<rect x="238.4" y="207.6" width="1.5" height="1.5" fill="#00ee90" />
<rect x="230.0" y="234.9" width="1" height="1" fill="#00ee90" />
<rect x="228.8" y="226.9" width="1" height="1" fill="#ffff66" />
<rect x="227.3" y="217.3" width="1" height="1.2" fill="#00ee90" />
<rect x="230.5" y="239.4" width="2.5" height="2.5" fill="#00ee90" />
<rect x="243.8" y="214.1" width="3" height="1" fill="#000" />
<rect x="241.0" y="212.7" width="2" height="1" fill="#ffff66" />
<rect x="269.2" y="212.2" width="3" height="1.2" fill="#00ee90" />
<rect x="242.5" y="248.3" width="1.5" height="1.5" fill="#ffff66" />
<rect x="251.6" y="241.5" width="2" height="1" fill="#00ee90" />
<rect x="261.8" y="232.9" width="2" height="1" fill="#00ee90" />
<rect x="270.0" y="222.6" width="1.5" height="2" fill="#00ee90" />
<rect x="233.3" y="217.5" width="3" height="1" fill="#00ee90" />
<rect x="270.7" y="244.0" width="3" height="1" fill="#00ee90" />
<rect x="255.8" y="204.4" width="3" height="1.2" fill="#ffff66" />
<rect x="219.9" y="235.0" width="1" height="1.5" fill="#00ee90" />
<rect x="252.1" y="246.9" width="1" height="1.5" fill="#00ee90" />
<rect x="251.2" y="193.2" width="1.5" height="1.2" fill="#ffff66" />
<rect x="258.1" y="207.5" width="1.5" height="2" fill="#00ee90" />
<rect x="268.0" y="225.6" width="1.5" height="1.5" fill="#00ee90" />
<rect x="255.1" y="236.9" width="1" height="2" fill="#000" />
<rect x="263.9" y="202.5" width="2.5" height="1.5" fill="#00ee90" />
<rect x="239.5" y="240.9" width="1.5" height="1.2" fill="#00aadd" />
<rect x="270.6" y="225.9" width="1" height="1.5" fill="#00ee90" />
<rect x="229.2" y="246.0" width="2.5" height="2.5" fill="#ffff66" />
<rect x="228.3" y="255.3" width="1.5" height="2.5" fill="#00ee90" />
<rect x="270.5" y="215.8" width="1" height="1" fill="#00ee90" />
<rect x="232.7" y="212.3" width="3" height="2.5" fill="#00ee90" />
<rect x="270.2" y="244.7" width="1.5" height="1.5" fill="#ffff66" />
<rect x="260.8" y="226.5" width="3" height="1.2" fill="#00ee90" />
<rect x="228.9" y="242.6" width="2" height="2.5" fill="#00ee90" />
<rect x="234.7" y="250.0" width="3" height="1.5" fill="#00ee90" />
<rect x="238.9" y="209.1" width="2.5" height="1.5" fill="#00ee90" />
<rect x="221.2" y="212.7" width="1.5" height="2.5" fill="#00ee90" />
<rect x="217.0" y="207.8" width="3" height="1" fill="#00ee90" />
<rect x="237.5" y="247.5" width="2" height="2" fill="#ffff66" />
<polygon points="252.7,242.0 251.8,243.5 248.0,244.0 244.0,243.6 243.5,242.0 244.1,240.5 248.0,240.5 251.6,240.6" fill="#00ee90"/>
<polygon points="258.4,244.5 256.7,245.3 255.0,246.3 252.8,245.6 252.0,244.5 253.3,243.6 255.0,242.8 256.9,243.5" fill="#00ee90"/>
<polygon points="261.8,241.5 260.9,242.3 259.5,242.8 257.8,242.5 256.6,241.5 257.8,240.5 259.5,240.0 261.0,240.6" fill="#00ee90"/>
<polygon points="239.9,191.0 239.1,191.6 238.0,192.2 236.4,191.8 236.3,191.0 236.8,190.4 238.0,190.0 239.7,190.2" fill="#00ee90"/>
<polygon points="250.0,192.0 249.4,192.6 248.5,193.2 247.4,192.7 246.8,192.0 247.5,191.3 248.5,191.2 249.3,191.5" fill="#00ee90"/>
<polygon points="265.3,211.0 264.5,211.7 263.5,212.2 262.6,211.6 261.7,211.0 262.5,210.3 263.5,210.2 264.5,210.3" fill="#00ee90"/>
<polygon points="218.3,213.0 217.6,213.8 216.5,214.0 215.3,213.8 215.2,213.0 215.5,212.3 216.5,211.8 217.4,212.4" fill="#00ee90"/>
<polygon points="218.2,234.0 217.6,235.1 217.0,235.8 216.1,235.7 216.0,234.0 216.4,232.8 217.0,231.5 217.9,232.3" fill="#00ee90"/>
<polygon points="255.7,199.5 255.1,200.3 254.0,201.3 252.4,200.7 252.0,199.5 252.4,198.3 254.0,197.9 255.3,198.5" fill="#00ee90"/>
<polygon points="227.1,244.8 226.8,245.3 226.0,245.4 225.3,245.3 225.1,244.8 225.4,244.3 226.0,243.8 226.7,244.2" fill="#00ee90"/>
<polygon points="251.5,237.0 250.1,237.6 248.5,238.1 246.6,237.7 245.8,237.0 246.4,236.1 248.5,236.1 250.2,236.3" fill="#00ee90"/>
<polygon points="263.4,237.2 262.6,238.3 261.0,238.6 259.4,238.2 258.7,237.2 259.4,236.3 261.0,236.0 262.1,236.6" fill="#00ee90"/>
</g>
<path d="M78.0 102.5h11M83.5 97.0v11" stroke="#fff890" stroke-width="1" fill="none" shape-rendering="crispEdges"/>
<path d="M78.0 183.5h11M83.5 178.0v11" stroke="#fff890" stroke-width="1" fill="none" shape-rendering="crispEdges"/>
<path d="M78.0 264.5h11M83.5 259.0v11" stroke="#fff890" stroke-width="1" fill="none" shape-rendering="crispEdges"/>
<path d="M78.0 345.5h11M83.5 340.0v11" stroke="#fff890" stroke-width="1" fill="none" shape-rendering="crispEdges"/>
<path d="M158.0 102.5h11M163.5 97.0v11" stroke="#fff890" stroke-width="1" fill="none" shape-rendering="crispEdges"/>
<path d="M158.0 183.5h11M163.5 178.0v11" stroke="#fff890" stroke-width="1" fill="none" shape-rendering="crispEdges"/>
<path d="M158.0 264.5h11M163.5 259.0v11" stroke="#fff890" stroke-width="1" fill="none" shape-rendering="crispEdges"/>
<path d="M158.0 345.5h11M163.5 340.0v11" stroke="#fff890" stroke-width="1" fill="none" shape-rendering="crispEdges"/>
<path d="M238.0 102.5h11M243.5 97.0v11" stroke="#fff890" stroke-width="1" fill="none" shape-rendering="crispEdges"/>
<path d="M238.0 183.5h11M243.5 178.0v11" stroke="#fff890" stroke-width="1" fill="none" shape-rendering="crispEdges"/>
<path d="M238.0 264.5h11M243.5 259.0v11" stroke="#fff890" stroke-width="1" fill="none" shape-rendering="crispEdges"/>
<path d="M238.0 345.5h11M243.5 340.0v11" stroke="#fff890" stroke-width="1" fill="none" shape-rendering="crispEdges"/>
<path d="M318.0 102.5h11M323.5 97.0v11" stroke="#fff890" stroke-width="1" fill="none" shape-rendering="crispEdges"/>
<path d="M318.0 183.5h11M323.5 178.0v11" stroke="#fff890" stroke-width="1" fill="none" shape-rendering="crispEdges"/>
<path d="M318.0 264.5h11M323.5 259.0v11" stroke="#fff890" stroke-width="1" fill="none" shape-rendering="crispEdges"/>
<path d="M318.0 345.5h11M323.5 340.0v11" stroke="#fff890" stroke-width="1" fill="none" shape-rendering="crispEdges"/>
<path d="M398.0 102.5h11M403.5 97.0v11" stroke="#fff890" stroke-width="1" fill="none" shape-rendering="crispEdges"/>
<path d="M398.0 183.5h11M403.5 178.0v11" stroke="#fff890" stroke-width="1" fill="none" shape-rendering="crispEdges"/>
<path d="M398.0 264.5h11M403.5 259.0v11" stroke="#fff890" stroke-width="1" fill="none" shape-rendering="crispEdges"/>
<path d="M398.0 345.5h11M403.5 340.0v11" stroke="#fff890" stroke-width="1" fill="none" shape-rendering="crispEdges"/>
<path d="M478.0 102.5h11M483.5 97.0v11" stroke="#fff890" stroke-width="1" fill="none" shape-rendering="crispEdges"/>
<path d="M478.0 183.5h11M483.5 178.0v11" stroke="#fff890" stroke-width="1" fill="none" shape-rendering="crispEdges"/>
<path d="M478.0 264.5h11M483.5 259.0v11" stroke="#fff890" stroke-width="1" fill="none" shape-rendering="crispEdges"/>
<path d="M478.0 345.5h11M483.5 340.0v11" stroke="#fff890" stroke-width="1" fill="none" shape-rendering="crispEdges"/>
</g>
<g fill="#ff00ff" stroke="none" shape-rendering="crispEdges"><rect x="236.0" y="177" width="3" height="1.5"/><rect x="234.5" y="178.5" width="6" height="8.5"/><rect x="233.5" y="185.5" width="8" height="2"/><rect x="236.5" y="187.5" width="2" height="1.5"/><rect x="231.5" y="188.5" width="12" height="1.5"/></g><path d="M236.3 179.5v6M238.7 179.5v6" stroke="#803080" stroke-width="0.8" fill="none"/><path d="M229.5 190.7l1.5 1.5l2-2l2 2l2-2l2 2l2-2l2 2l1.5-1.5" fill="none" stroke="#ff00ff" stroke-width="1.3"/>
<g fill="#ff00ff" stroke="none" shape-rendering="crispEdges"><rect x="242.0" y="210" width="3" height="1.5"/><rect x="240.5" y="211.5" width="6" height="8.5"/><rect x="239.5" y="218.5" width="8" height="2"/><rect x="242.5" y="220.5" width="2" height="1.5"/><rect x="237.5" y="221.5" width="12" height="1.5"/></g><path d="M242.3 212.5v6M244.7 212.5v6" stroke="#803080" stroke-width="0.8" fill="none"/><path d="M235.5 223.7l1.5 1.5l2-2l2 2l2-2l2 2l2-2l2 2l1.5-1.5" fill="none" stroke="#ff00ff" stroke-width="1.3"/>
<g fill="#ff00ff" stroke="none" shape-rendering="crispEdges"><rect x="242.0" y="259" width="3" height="1.5"/><rect x="240.5" y="260.5" width="6" height="8.5"/><rect x="239.5" y="267.5" width="8" height="2"/><rect x="242.5" y="269.5" width="2" height="1.5"/><rect x="237.5" y="270.5" width="12" height="1.5"/></g><path d="M242.3 261.5v6M244.7 261.5v6" stroke="#803080" stroke-width="0.8" fill="none"/><path d="M235.5 272.7l1.5 1.5l2-2l2 2l2-2l2 2l2-2l2 2l1.5-1.5" fill="none" stroke="#ff00ff" stroke-width="1.3"/>
<g fill="#ff00ff" stroke="none" shape-rendering="crispEdges"><rect x="242.0" y="307" width="3" height="1.5"/><rect x="240.5" y="308.5" width="6" height="8.5"/><rect x="239.5" y="315.5" width="8" height="2"/><rect x="242.5" y="317.5" width="2" height="1.5"/><rect x="237.5" y="318.5" width="12" height="1.5"/></g><path d="M242.3 309.5v6M244.7 309.5v6" stroke="#803080" stroke-width="0.8" fill="none"/><path d="M235.5 320.7l1.5 1.5l2-2l2 2l2-2l2 2l2-2l2 2l1.5-1.5" fill="none" stroke="#ff00ff" stroke-width="1.3"/>
<g fill="#ff00ff" stroke="none" shape-rendering="crispEdges"><rect x="242.0" y="338" width="3" height="1.5"/><rect x="240.5" y="339.5" width="6" height="8.5"/><rect x="239.5" y="346.5" width="8" height="2"/><rect x="242.5" y="348.5" width="2" height="1.5"/><rect x="237.5" y="349.5" width="12" height="1.5"/></g><path d="M242.3 340.5v6M244.7 340.5v6" stroke="#803080" stroke-width="0.8" fill="none"/><path d="M235.5 351.7l1.5 1.5l2-2l2 2l2-2l2 2l2-2l2 2l1.5-1.5" fill="none" stroke="#ff00ff" stroke-width="1.3"/>
<g clip-path="url(#bclip)">
<g fill="#ff00ff" stroke="none" shape-rendering="crispEdges"><rect x="483.0" y="210" width="3" height="1.5"/><rect x="481.5" y="211.5" width="6" height="8.5"/><rect x="480.5" y="218.5" width="8" height="2"/><rect x="483.5" y="220.5" width="2" height="1.5"/><rect x="478.5" y="221.5" width="12" height="1.5"/></g><path d="M483.3 212.5v6M485.7 212.5v6" stroke="#803080" stroke-width="0.8" fill="none"/><path d="M476.5 223.7l1.5 1.5l2-2l2 2l2-2l2 2l2-2l2 2l1.5-1.5" fill="none" stroke="#ff00ff" stroke-width="1.3"/>
<g fill="#ff00ff" stroke="none" shape-rendering="crispEdges"><rect x="483.0" y="259" width="3" height="1.5"/><rect x="481.5" y="260.5" width="6" height="8.5"/><rect x="480.5" y="267.5" width="8" height="2"/><rect x="483.5" y="269.5" width="2" height="1.5"/><rect x="478.5" y="270.5" width="12" height="1.5"/></g><path d="M483.3 261.5v6M485.7 261.5v6" stroke="#803080" stroke-width="0.8" fill="none"/><path d="M476.5 272.7l1.5 1.5l2-2l2 2l2-2l2 2l2-2l2 2l1.5-1.5" fill="none" stroke="#ff00ff" stroke-width="1.3"/>
<g fill="#ff00ff" stroke="none" shape-rendering="crispEdges"><rect x="483.0" y="307" width="3" height="1.5"/><rect x="481.5" y="308.5" width="6" height="8.5"/><rect x="480.5" y="315.5" width="8" height="2"/><rect x="483.5" y="317.5" width="2" height="1.5"/><rect x="478.5" y="318.5" width="12" height="1.5"/></g><path d="M483.3 309.5v6M485.7 309.5v6" stroke="#803080" stroke-width="0.8" fill="none"/><path d="M476.5 320.7l1.5 1.5l2-2l2 2l2-2l2 2l2-2l2 2l1.5-1.5" fill="none" stroke="#ff00ff" stroke-width="1.3"/>
<g fill="#ff00ff" stroke="none" shape-rendering="crispEdges"><rect x="483.0" y="338" width="3" height="1.5"/><rect x="481.5" y="339.5" width="6" height="8.5"/><rect x="480.5" y="346.5" width="8" height="2"/><rect x="483.5" y="348.5" width="2" height="1.5"/><rect x="478.5" y="349.5" width="12" height="1.5"/></g><path d="M483.3 340.5v6M485.7 340.5v6" stroke="#803080" stroke-width="0.8" fill="none"/><path d="M476.5 351.7l1.5 1.5l2-2l2 2l2-2l2 2l2-2l2 2l1.5-1.5" fill="none" stroke="#ff00ff" stroke-width="1.3"/>
</g>
<text x="10.5" y="27" font-size="24.5" fill="#ffff00" font-family='"Liberation Sans", sans-serif' textLength="243.5" lengthAdjust="spacing" style="white-space:pre">22-aug-1997,19:05:00</text>
<text x="268" y="27" font-size="24.5" fill="#fff" font-family='"Liberation Sans", sans-serif' textLength="281.5" lengthAdjust="spacing" style="white-space:pre">ir plot.  Rhb_lowprf maxdz</text>
<text x="11" y="57" font-size="24.5" fill="#fff" font-family='"Liberation Sans", sans-serif' textLength="146" lengthAdjust="spacing" style="white-space:pre">filled contour.</text>
<text x="33" y="101.5" font-size="16.5" fill="#fff890" font-family='"Liberation Sans", sans-serif' text-anchor="end" stroke="#fff890" stroke-width="0.3" style="white-space:pre">15</text>
<text x="33" y="182.5" font-size="16.5" fill="#fff890" font-family='"Liberation Sans", sans-serif' text-anchor="end" stroke="#fff890" stroke-width="0.3" style="white-space:pre">10</text>
<text x="33" y="264" font-size="16.5" fill="#fff890" font-family='"Liberation Sans", sans-serif' text-anchor="end" stroke="#fff890" stroke-width="0.3" style="white-space:pre">5</text>
<text x="33" y="345" font-size="16.5" fill="#fff890" font-family='"Liberation Sans", sans-serif' text-anchor="end" stroke="#fff890" stroke-width="0.3" style="white-space:pre">0</text>
<text x="64" y="372.5" font-size="16.5" fill="#fff890" font-family='"Liberation Sans", sans-serif' textLength="39" lengthAdjust="spacing" stroke="#fff890" stroke-width="0.3" style="white-space:pre">-135</text>
<text x="144" y="372.5" font-size="16.5" fill="#fff890" font-family='"Liberation Sans", sans-serif' textLength="39" lengthAdjust="spacing" stroke="#fff890" stroke-width="0.3" style="white-space:pre">-130</text>
<text x="223.5" y="372.5" font-size="16.5" fill="#fff890" font-family='"Liberation Sans", sans-serif' textLength="39" lengthAdjust="spacing" stroke="#fff890" stroke-width="0.3" style="white-space:pre">-125</text>
<text x="304.5" y="372.5" font-size="16.5" fill="#fff890" font-family='"Liberation Sans", sans-serif' textLength="39" lengthAdjust="spacing" stroke="#fff890" stroke-width="0.3" style="white-space:pre">-120</text>
<text x="384" y="372.5" font-size="16.5" fill="#fff890" font-family='"Liberation Sans", sans-serif' textLength="39" lengthAdjust="spacing" stroke="#fff890" stroke-width="0.3" style="white-space:pre">-115</text>
<text x="465" y="372.5" font-size="16.5" fill="#fff890" font-family='"Liberation Sans", sans-serif' textLength="39" lengthAdjust="spacing" stroke="#fff890" stroke-width="0.3" style="white-space:pre">-110</text>
<text x="490" y="46" font-size="17.5" fill="#fff" font-family='"Liberation Sans", sans-serif' stroke="#fff" stroke-width="0.3" style="white-space:pre">ir</text>
<rect x="489" y="60" width="10" height="95" fill="url(#irg)"/>
<rect x="489" y="155" width="10" height="16" fill="#0000ff" />
<rect x="489" y="171" width="10" height="1" fill="#fff" />
<rect x="489" y="172" width="10" height="4" fill="#ff0000" />
<rect x="489" y="176" width="10" height="4" fill="#ff8800" />
<rect x="489" y="180" width="10" height="4" fill="#ffbbaa" />
<rect x="489" y="184" width="10" height="3.5" fill="#ffff00" />
<text x="505" y="67.5" font-size="17.5" fill="#fff" font-family='"Liberation Sans", sans-serif' textLength="43.5" lengthAdjust="spacing" stroke="#fff" stroke-width="0.3" style="white-space:pre">387.0</text>
<text x="505" y="90.0" font-size="17.5" fill="#fff" font-family='"Liberation Sans", sans-serif' textLength="43.5" lengthAdjust="spacing" stroke="#fff" stroke-width="0.3" style="white-space:pre">351.0</text>
<text x="505" y="112.5" font-size="17.5" fill="#fff" font-family='"Liberation Sans", sans-serif' textLength="43.5" lengthAdjust="spacing" stroke="#fff" stroke-width="0.3" style="white-space:pre">315.0</text>
<text x="505" y="135.0" font-size="17.5" fill="#fff" font-family='"Liberation Sans", sans-serif' textLength="43.5" lengthAdjust="spacing" stroke="#fff" stroke-width="0.3" style="white-space:pre">279.0</text>
<text x="505" y="157.5" font-size="17.5" fill="#fff" font-family='"Liberation Sans", sans-serif' textLength="43.5" lengthAdjust="spacing" stroke="#fff" stroke-width="0.3" style="white-space:pre">243.0</text>
<text x="505" y="180.0" font-size="17.5" fill="#fff" font-family='"Liberation Sans", sans-serif' textLength="43.5" lengthAdjust="spacing" stroke="#fff" stroke-width="0.3" style="white-space:pre">207.0</text>
<text x="490" y="257" font-size="17.5" fill="#fff" font-family='"Liberation Sans", sans-serif' textLength="51.5" lengthAdjust="spacing" stroke="#fff" stroke-width="0.3" style="white-space:pre">maxdz</text>
<rect x="489" y="263" width="10" height="28" fill="#b22222" />
<rect x="489" y="291" width="10" height="28" fill="#ffa07a" />
<rect x="489" y="319" width="10" height="28" fill="#ffff80" />
<rect x="489" y="347" width="10" height="28" fill="#00ee90" />
<text x="505" y="284" font-size="17.5" fill="#fff" font-family='"Liberation Sans", sans-serif' textLength="33.5" lengthAdjust="spacing" stroke="#fff" stroke-width="0.3" style="white-space:pre">55.0</text>
<text x="505" y="312" font-size="17.5" fill="#fff" font-family='"Liberation Sans", sans-serif' textLength="33.5" lengthAdjust="spacing" stroke="#fff" stroke-width="0.3" style="white-space:pre">45.0</text>
<text x="505" y="340" font-size="17.5" fill="#fff" font-family='"Liberation Sans", sans-serif' textLength="33.5" lengthAdjust="spacing" stroke="#fff" stroke-width="0.3" style="white-space:pre">35.0</text>
<text x="505" y="368" font-size="17.5" fill="#fff" font-family='"Liberation Sans", sans-serif' textLength="33.5" lengthAdjust="spacing" stroke="#fff" stroke-width="0.3" style="white-space:pre">25.0</text>
<rect x="5.5" y="376.5" width="45" height="47" fill="#191970" stroke="#9a9a9a" stroke-width="1"/>
<g transform="translate(5,376)">
<path d="M6.5 12C9 8 14 6.5 20 8.5S32 13 37.5 9L6 39.5C10 36 15 35 21 37.5S33 41.5 38.5 35.5" fill="none" stroke="#ffff00" stroke-width="1.7" stroke-linejoin="miter"/>
<path d="M37.5 9L6 39.5" stroke="#ffff00" stroke-width="2.1"/>
</g>
<rect x="52.5" y="376.5" width="45" height="47" fill="#191970" stroke="#9a9a9a" stroke-width="1"/>
<g transform="translate(52,376)">
<text x="3" y="14.3" font-size="14.5" fill="#ffff00" font-family='"Liberation Sans", sans-serif' font-weight="bold" textLength="30" lengthAdjust="spacingAndGlyphs" style="white-space:pre">GOES</text>
<path d="M3 17h8c8 2 12 10 13 18v9H3z" fill="url(#dithy)"/>
<path d="M13 27c3-4 7-3 9 2l1 6c-4 0-7-1-10-3z" fill="#ffff00"/>
<path d="M3 44v-6c2-2 7-2 8 0v6z" fill="#ffff00"/>
<path d="M4 24l4 6l-3 3z" fill="#ffff00"/>
<path d="M22 24L38 21M24 34L38 23" stroke="#ffff00" stroke-width="1" stroke-dasharray="1 1.5" fill="none"/>
<path d="M40.5 18.5l3 3l-3 3l-3-3z" fill="#ffff00"/>
<text x="25" y="44" font-size="11" fill="#ffff00" font-family='"Liberation Sans", sans-serif' textLength="15.5" lengthAdjust="spacing" style="white-space:pre">.IR</text>
<rect x="19" y="17" width="1" height="1" fill="#ffff00" />
<rect x="24" y="20" width="1" height="1" fill="#ffff00" />
<rect x="30" y="18" width="1" height="1" fill="#ffff00" />
<rect x="33" y="26" width="1" height="1" fill="#ffff00" />
<rect x="38" y="30" width="1" height="1" fill="#ffff00" />
<rect x="31" y="32" width="1" height="1" fill="#ffff00" />
</g>
<rect x="99.5" y="376.5" width="45" height="47" fill="#191970" stroke="#9a9a9a" stroke-width="1"/>
<g transform="translate(99,376)">
<g transform="translate(0,0) scale(1.0)">
<path d="M5 9C7 20 16 29 27.5 30.2" fill="none" stroke="#ffff00" stroke-width="1.8"/>
<path d="M12 20.8h4v3.4" fill="none" stroke="#ffff00" stroke-width="1"/>
<path d="M12.2 24h2.2l1 11.2v4.3h-6.8v-4.3h1.8z" fill="#ffff00"/>
</g>
<text x="50.69 50.69 50.69" y="19.00 31.60 44.20" font-size="13.5" fill="#ffff00" text-anchor="middle" transform="scale(0.72,1)" font-family='"Liberation Sans", sans-serif'>SUR</text>
</g>
<rect x="146.5" y="376.5" width="45" height="47" fill="#6e6e6e" stroke="#9a9a9a" stroke-width="1"/>
<g transform="translate(146,376)">
<g fill="none" stroke="#e0e0e0" stroke-width="1.2" shape-rendering="crispEdges">
<rect x="5.5" y="5.5" width="36" height="37.5"/>
<path d="M14.5 5.5v37.5M5.5 14.9h36"/>
<path d="M23.5 5.5v37.5M5.5 24.3h36"/>
<path d="M32.5 5.5v37.5M5.5 33.7h36"/>
</g>
<g transform="translate(7,2) scale(0.95)">
<path d="M5 9C7 20 16 29 27.5 30.2" fill="none" stroke="#e0e0e0" stroke-width="1.8"/>
<path d="M12 20.8h4v3.4" fill="none" stroke="#e0e0e0" stroke-width="1"/>
<path d="M12.2 24h2.2l1 11.2v4.3h-6.8v-4.3h1.8z" fill="#e0e0e0"/>
</g>
</g>
<rect x="193.5" y="376.5" width="13.5" height="47" fill="#6e6e6e" stroke="#9a9a9a" stroke-width="1"/>
<g transform="translate(193,376)">
<text x="7.20 7.20 7.20 7.20 7.20 7.20" y="11.50 17.60 23.70 29.80 35.90 42.00" font-size="6.5" fill="#e0e0e0" text-anchor="middle" font-weight="bold" font-family='"Liberation Sans", sans-serif'>BOUNDS</text>
</g>
<rect x="208.5" y="400.5" width="21" height="23" fill="#191970" stroke="#9a9a9a" stroke-width="1"/>
<g transform="translate(208,400)">
<g fill="none" stroke="#ffff00" stroke-width="1" shape-rendering="crispEdges"><rect x="3" y="4" width="16" height="16"/><path d="M8.3 4v16M13.7 4v16M3 9.3h16M3 14.7h16"/></g>
</g>
<rect x="231.5" y="376.5" width="20" height="47" fill="#191970" stroke="#9a9a9a" stroke-width="1"/>
<g transform="translate(231,376)">
<path d="M3 5l5 1l-1 5l-3 4l-1-4l1-3zM10 7l4-2l3 1l-2 3l3 3l-2 4l-3-5l-3 1z" fill="#ffff00"/>
<path d="M15 4l4-1v2z" fill="#ffff00"/>
<text x="10.50 10.50 10.50" y="24.00 32.00 40.00" font-size="9" fill="#ffff00" text-anchor="middle" font-family='"Liberation Sans", sans-serif'>MAP</text>
</g>
<rect x="253.5" y="376.5" width="20" height="47" fill="#6e6e6e" stroke="#9a9a9a" stroke-width="1"/>
<g transform="translate(253,376)">
<g fill="none" stroke="#e0e0e0" stroke-width="1" transform="translate(0,-5.83) scale(1,1.25)">
<circle cx="10.3" cy="23.3" r="7.6"/><circle cx="10.3" cy="23.3" r="4.7"/><circle cx="10.3" cy="23.3" r="2.1"/>
<path d="M12.4 23.3L17.9 23.3"/>
<path d="M11.8 24.8L15.7 28.7"/>
<path d="M10.3 25.4L10.3 30.9"/>
<path d="M8.8 24.8L4.9 28.7"/>
<path d="M8.2 23.3L2.7 23.3"/>
<path d="M8.8 21.8L4.9 17.9"/>
<path d="M10.3 21.2L10.3 15.7"/>
<path d="M11.8 21.8L15.7 17.9"/>
</g>
</g>
<rect x="276.0" y="400.5" width="20.5" height="23" fill="#191970" stroke="#9a9a9a" stroke-width="1"/>
<g transform="translate(275.5,400)">
<g fill="#ffff00"><rect x="10" y="6" width="2" height="1"/><rect x="8.5" y="7" width="5" height="7"/><rect x="7" y="13.5" width="8" height="1.5"/><rect x="10" y="15" width="2" height="2"/><rect x="6" y="16.5" width="10" height="1.5"/></g>
<path d="M9.5 8v5M12.5 8v5" stroke="#191970" stroke-width="0.8"/>
<path d="M3 19l2 2l2-2l2 2l2-2l2 2l2-2l2 2l2-2" fill="none" stroke="#ffff00" stroke-width="1.2"/>
</g>
<rect x="298.5" y="376.5" width="45" height="47" fill="#6e6e6e" stroke="#9a9a9a" stroke-width="1"/>
<g transform="translate(298,376)">
<g transform="translate(0,-1)" fill="none" stroke="#e0e0e0" stroke-width="1.2">
<path d="M6 32.5h33l-3 6h-28z"/>
<path d="M8.5 32v-9h4l2.5 9"/>
<circle cx="22" cy="23.5" r="3.2"/><path d="M21 26.7v6M23 26.7v6"/>
<path d="M33.5 15v17.5"/>
<path d="M2.5 44.5v-5l2 2l2.5-3l2.5 3l2.5-3l2.5 3l2.5-3l2.5 3l2.5-3l2.5 3l2.5-3l2.5 3l2.5-3l2.5 3l2.5-3l2.5 3l2-2v5z" fill="#e0e0e0" stroke="none"/>
</g>
</g>
<rect x="571" y="2" width="562" height="385" fill="#000" />
<rect x="571.5" y="2.5" width="561" height="384" fill="none" stroke="#000" stroke-width="1" shape-rendering="crispEdges"/>
<rect x="571.5" y="2.5" width="561" height="384" fill="none" stroke="#fff" stroke-width="1" stroke-dasharray="1 1" shape-rendering="crispEdges"/>
<text x="582.5" y="21" font-size="18" fill="#ffff00" font-family='"Liberation Sans", sans-serif' textLength="185.5" lengthAdjust="spacing" stroke="#ffff00" stroke-width="0.35" style="white-space:pre">22-aug-1997,19:05:00</text>
<text x="779.5" y="21" font-size="18" fill="#fff" font-family='"Liberation Sans", sans-serif' textLength="311.5" lengthAdjust="spacing" stroke="#fff" stroke-width="0.35" style="white-space:pre">Planar cross-section plot.  Contour of</text>
<text x="582.5" y="47.5" font-size="18" fill="#fff" font-family='"Liberation Sans", sans-serif' textLength="172.5" lengthAdjust="spacing" stroke="#fff" stroke-width="0.35" style="white-space:pre">maxdz using: rhb_3d.</text>
<line x1="1049" y1="29.5" x2="1133" y2="29.5" stroke="#aaa" stroke-width="1" />
<line x1="1049" y1="335.5" x2="1133" y2="335.5" stroke="#aaa" stroke-width="1" />
<text x="1051" y="44" font-size="12.5" fill="#fff" font-family='"Liberation Sans", sans-serif' textLength="33" lengthAdjust="spacing" style="white-space:pre">maxdz</text>
<g shape-rendering="crispEdges">
<polygon points="622.8,247.6 660.6,247.6 660.6,276.1 699.1,276.1 699.1,298.8 622.8,298.8" fill="#007744"/>
<polygon points="652.7,247.6 660.6,247.6 660.6,262.0" fill="#00e696"/>
<polygon points="683.6,276.1 699.1,276.1 699.1,291.3" fill="#00e696"/>
<polygon points="622.8,266.2 633.8,265.8 644.1,268.9 654.4,277.5 664.7,287.8 671.6,298.8 622.8,298.8" fill="#c8c8c8"/>
<polygon points="622.8,285.1 628.6,285.8 635.5,288.5 642.3,293.0 645.1,298.8 622.8,298.8" fill="#dc9632"/>
<polygon points="730.0,276.1 737.9,276.1 737.9,298.8 730.0,298.8" fill="#00e696"/>
<polygon points="773.0,235.9 810.8,235.9 810.8,229.4 815.9,229.4 815.9,220.8 820.1,220.8 820.1,207.0 974.8,207.0 974.8,224.9 1017.7,224.9 1017.7,236.3 1048.0,236.3 1048.0,298.8 773.0,298.8" fill="#00e696"/>
<polygon points="773.0,235.9 791.9,235.9 789.1,246.6 783.3,258.6 773.0,267.2" fill="#00aadd"/>
<polygon points="820.1,207.0 834.9,207.0 828.0,208.8 820.1,209.4" fill="#00aadd"/>
<polygon points="908.8,207.0 974.8,207.0 974.8,208.1 960.3,210.1 939.7,210.8 922.5,209.4" fill="#00aadd"/>
<polygon points="778.8,298.8 788.4,285.1 798.8,270.6 807.3,250.0 812.5,236.3 817.7,228.7 826.3,222.5 843.4,216.3 867.5,212.9 895.0,213.9 915.6,220.8 931.1,229.4 936.3,232.8 950.0,227.7 963.8,224.6 984.4,224.9 998.1,228.7 1011.9,236.3 1023.9,248.3 1034.2,262.0 1038.7,277.5 1041.1,298.8" fill="#007744"/>
<polygon points="807.3,298.8 809.1,284.4 811.8,275.8 819.4,263.8 826.3,246.6 833.1,238.0 843.4,229.4 860.6,223.9 881.3,222.5 898.4,225.9 912.2,233.5 922.5,243.1 931.1,252.8 936.9,259.3 950.0,253.4 963.8,249.3 977.5,244.8 987.8,246.6 998.1,250.0 1011.9,260.3 1018.8,272.3 1022.2,284.4 1023.9,298.8" fill="#c8c8c8"/>
<polygon points="832.1,298.8 833.1,284.4 835.9,272.3 842.8,255.2 850.3,244.8 857.2,238.0 870.9,236.3 884.7,235.2 895.0,233.8 901.9,239.0 908.8,248.3 916.3,262.0 922.5,277.5 925.9,289.5 927.7,298.8" fill="#dc9632"/>
<polygon points="848.6,298.8 849.6,286.1 852.0,274.1 855.5,265.5 864.1,261.0 877.8,257.6 893.3,252.8 899.1,258.6 903.6,268.9 907.0,280.9 909.4,298.8" fill="#eeb822"/>
<polygon points="952.8,298.8 956.9,291.3 962.0,283.7 968.9,275.8 976.8,272.7 982.7,275.8 987.8,282.7 993.0,290.6 998.1,298.8" fill="#dc9632"/>
</g>
<rect x="622.5" y="29.5" width="426.5" height="281.5" fill="none" stroke="#fff" stroke-width="1.2"/>
<line x1="675.8" y1="29.5" x2="675.8" y2="36.5" stroke="#fff" stroke-width="1.2" />
<line x1="675.8" y1="311" x2="675.8" y2="304" stroke="#fff" stroke-width="1.2" />
<line x1="729.1" y1="29.5" x2="729.1" y2="36.5" stroke="#fff" stroke-width="1.2" />
<line x1="729.1" y1="311" x2="729.1" y2="304" stroke="#fff" stroke-width="1.2" />
<line x1="782.4" y1="29.5" x2="782.4" y2="36.5" stroke="#fff" stroke-width="1.2" />
<line x1="782.4" y1="311" x2="782.4" y2="304" stroke="#fff" stroke-width="1.2" />
<line x1="835.7" y1="29.5" x2="835.7" y2="36.5" stroke="#fff" stroke-width="1.2" />
<line x1="835.7" y1="311" x2="835.7" y2="304" stroke="#fff" stroke-width="1.2" />
<line x1="889.0" y1="29.5" x2="889.0" y2="36.5" stroke="#fff" stroke-width="1.2" />
<line x1="889.0" y1="311" x2="889.0" y2="304" stroke="#fff" stroke-width="1.2" />
<line x1="942.3" y1="29.5" x2="942.3" y2="36.5" stroke="#fff" stroke-width="1.2" />
<line x1="942.3" y1="311" x2="942.3" y2="304" stroke="#fff" stroke-width="1.2" />
<line x1="995.5999999999999" y1="29.5" x2="995.5999999999999" y2="36.5" stroke="#fff" stroke-width="1.2" />
<line x1="995.5999999999999" y1="311" x2="995.5999999999999" y2="304" stroke="#fff" stroke-width="1.2" />
<line x1="622.5" y1="57.65" x2="634.0" y2="57.65" stroke="#fff" stroke-width="1.2" />
<line x1="1049" y1="57.65" x2="1037.5" y2="57.65" stroke="#fff" stroke-width="1.2" />
<line x1="622.5" y1="85.8" x2="634.0" y2="85.8" stroke="#fff" stroke-width="1.2" />
<line x1="1049" y1="85.8" x2="1037.5" y2="85.8" stroke="#fff" stroke-width="1.2" />
<line x1="622.5" y1="113.94999999999999" x2="634.0" y2="113.94999999999999" stroke="#fff" stroke-width="1.2" />
<line x1="1049" y1="113.94999999999999" x2="1037.5" y2="113.94999999999999" stroke="#fff" stroke-width="1.2" />
<line x1="622.5" y1="142.1" x2="634.0" y2="142.1" stroke="#fff" stroke-width="1.2" />
<line x1="1049" y1="142.1" x2="1037.5" y2="142.1" stroke="#fff" stroke-width="1.2" />
<line x1="622.5" y1="170.25" x2="634.0" y2="170.25" stroke="#fff" stroke-width="1.2" />
<line x1="1049" y1="170.25" x2="1037.5" y2="170.25" stroke="#fff" stroke-width="1.2" />
<line x1="622.5" y1="198.39999999999998" x2="634.0" y2="198.39999999999998" stroke="#fff" stroke-width="1.2" />
<line x1="1049" y1="198.39999999999998" x2="1037.5" y2="198.39999999999998" stroke="#fff" stroke-width="1.2" />
<line x1="622.5" y1="226.54999999999998" x2="634.0" y2="226.54999999999998" stroke="#fff" stroke-width="1.2" />
<line x1="1049" y1="226.54999999999998" x2="1037.5" y2="226.54999999999998" stroke="#fff" stroke-width="1.2" />
<line x1="622.5" y1="254.7" x2="634.0" y2="254.7" stroke="#fff" stroke-width="1.2" />
<line x1="1049" y1="254.7" x2="1037.5" y2="254.7" stroke="#fff" stroke-width="1.2" />
<line x1="622.5" y1="282.85" x2="634.0" y2="282.85" stroke="#fff" stroke-width="1.2" />
<line x1="1049" y1="282.85" x2="1037.5" y2="282.85" stroke="#fff" stroke-width="1.2" />
<text x="619" y="29.0" font-size="9.5" fill="#fff" font-family='"Liberation Sans", sans-serif' text-anchor="end" textLength="11.4" lengthAdjust="spacing" style="white-space:pre">20</text>
<text x="619" y="85.4" font-size="9.5" fill="#fff" font-family='"Liberation Sans", sans-serif' text-anchor="end" textLength="11.4" lengthAdjust="spacing" style="white-space:pre">16</text>
<text x="619" y="141.8" font-size="9.5" fill="#fff" font-family='"Liberation Sans", sans-serif' text-anchor="end" textLength="11.4" lengthAdjust="spacing" style="white-space:pre">12</text>
<text x="619" y="198.2" font-size="9.5" fill="#fff" font-family='"Liberation Sans", sans-serif' text-anchor="end" textLength="5.5" lengthAdjust="spacing" style="white-space:pre">8</text>
<text x="619" y="254.6" font-size="9.5" fill="#fff" font-family='"Liberation Sans", sans-serif' text-anchor="end" textLength="5.5" lengthAdjust="spacing" style="white-space:pre">4</text>
<text x="619" y="311.0" font-size="9.5" fill="#fff" font-family='"Liberation Sans", sans-serif' text-anchor="end" textLength="5.5" lengthAdjust="spacing" style="white-space:pre">0</text>
<text x="615" y="322" font-size="10" fill="#fff" font-family='"Liberation Sans", sans-serif' textLength="14" lengthAdjust="spacing" style="white-space:pre">0.0</text>
<text x="722.5" y="322" font-size="10" fill="#fff" font-family='"Liberation Sans", sans-serif' textLength="13.5" lengthAdjust="spacing" style="white-space:pre">7.5</text>
<text x="826" y="322" font-size="10" fill="#fff" font-family='"Liberation Sans", sans-serif' textLength="19" lengthAdjust="spacing" style="white-space:pre">14.9</text>
<text x="931" y="322" font-size="10" fill="#fff" font-family='"Liberation Sans", sans-serif' textLength="20" lengthAdjust="spacing" style="white-space:pre">22.4</text>
<text x="1037.5" y="322" font-size="10" fill="#fff" font-family='"Liberation Sans", sans-serif' textLength="11.5" lengthAdjust="spacing" style="white-space:pre">29</text>
<text x="803" y="330.5" font-size="10.5" fill="#fff" font-family='"Liberation Sans", sans-serif' textLength="66.5" lengthAdjust="spacing" style="white-space:pre">Distance in km</text>
<text transform="translate(603,169.5) rotate(-90)" text-anchor="middle" font-size="13" font-weight="bold" fill="#fff" font-family='"Liberation Serif", serif' textLength="95" lengthAdjust="spacing">km above MSL</text>
<rect x="1050" y="52" width="10" height="17" fill="#ff8080" shape-rendering="crispEdges"/>
<rect x="1050" y="69" width="10" height="17" fill="#ff9999" shape-rendering="crispEdges"/>
<rect x="1050" y="86" width="10" height="17" fill="#ffaa66" shape-rendering="crispEdges"/>
<rect x="1050" y="103" width="10" height="17" fill="#ffd8b0" shape-rendering="crispEdges"/>
<rect x="1050" y="120" width="10" height="17" fill="#ffdd11" shape-rendering="crispEdges"/>
<rect x="1050" y="137" width="10" height="17" fill="#eebb22" shape-rendering="crispEdges"/>
<rect x="1050" y="154" width="10" height="17" fill="#dd9933" shape-rendering="crispEdges"/>
<rect x="1050" y="171" width="10" height="17" fill="#c8c8c8" shape-rendering="crispEdges"/>
<rect x="1050" y="188" width="10" height="17" fill="#007744" shape-rendering="crispEdges"/>
<rect x="1050" y="205" width="10" height="17" fill="#00ee99" shape-rendering="crispEdges"/>
<rect x="1050" y="222" width="10" height="17" fill="#00aadd" shape-rendering="crispEdges"/>
<rect x="1050" y="239" width="10" height="17" fill="#0066dd" shape-rendering="crispEdges"/>
<rect x="1050" y="256" width="10" height="17" fill="#1133dd" shape-rendering="crispEdges"/>
<rect x="1050" y="273" width="10" height="17" fill="#4411dd" shape-rendering="crispEdges"/>
<rect x="1050" y="290" width="10" height="17" fill="#7700ee" shape-rendering="crispEdges"/>
<rect x="1050" y="307" width="10" height="17" fill="#9900ff" shape-rendering="crispEdges"/>
<text x="1065.5" y="64.5" font-size="12" fill="#fff" font-family='"Liberation Sans", sans-serif' textLength="23" lengthAdjust="spacing" style="white-space:pre">62.5</text>
<text x="1065.5" y="81.5" font-size="12" fill="#fff" font-family='"Liberation Sans", sans-serif' textLength="23" lengthAdjust="spacing" style="white-space:pre">57.5</text>
<text x="1065.5" y="98.5" font-size="12" fill="#fff" font-family='"Liberation Sans", sans-serif' textLength="23" lengthAdjust="spacing" style="white-space:pre">52.5</text>
<text x="1065.5" y="115.5" font-size="12" fill="#fff" font-family='"Liberation Sans", sans-serif' textLength="23" lengthAdjust="spacing" style="white-space:pre">47.5</text>
<text x="1065.5" y="132.5" font-size="12" fill="#fff" font-family='"Liberation Sans", sans-serif' textLength="23" lengthAdjust="spacing" style="white-space:pre">42.5</text>
<text x="1065.5" y="149.5" font-size="12" fill="#fff" font-family='"Liberation Sans", sans-serif' textLength="23" lengthAdjust="spacing" style="white-space:pre">37.5</text>
<text x="1065.5" y="166.5" font-size="12" fill="#fff" font-family='"Liberation Sans", sans-serif' textLength="23" lengthAdjust="spacing" style="white-space:pre">32.5</text>
<text x="1065.5" y="183.5" font-size="12" fill="#fff" font-family='"Liberation Sans", sans-serif' textLength="23" lengthAdjust="spacing" style="white-space:pre">27.5</text>
<text x="1065.5" y="200.5" font-size="12" fill="#fff" font-family='"Liberation Sans", sans-serif' textLength="23" lengthAdjust="spacing" style="white-space:pre">22.5</text>
<text x="1065.5" y="217.5" font-size="12" fill="#fff" font-family='"Liberation Sans", sans-serif' textLength="23" lengthAdjust="spacing" style="white-space:pre">17.5</text>
<text x="1065.5" y="234.5" font-size="12" fill="#fff" font-family='"Liberation Sans", sans-serif' textLength="23" lengthAdjust="spacing" style="white-space:pre">12.5</text>
<text x="1065.5" y="251.5" font-size="12" fill="#fff" font-family='"Liberation Sans", sans-serif' textLength="16.5" lengthAdjust="spacing" style="white-space:pre">7.5</text>
<text x="1065.5" y="268.5" font-size="12" fill="#fff" font-family='"Liberation Sans", sans-serif' textLength="16.5" lengthAdjust="spacing" style="white-space:pre">2.5</text>
<text x="1065.5" y="285.5" font-size="12" fill="#fff" font-family='"Liberation Sans", sans-serif' textLength="23.5" lengthAdjust="spacing" style="white-space:pre">-2.5</text>
<text x="1065.5" y="302.5" font-size="12" fill="#fff" font-family='"Liberation Sans", sans-serif' textLength="23.5" lengthAdjust="spacing" style="white-space:pre">-7.5</text>
<text x="1065.5" y="319.5" font-size="12" fill="#fff" font-family='"Liberation Sans", sans-serif' textLength="30" lengthAdjust="spacing" style="white-space:pre">-12.5</text>
<rect x="577.5" y="336.5" width="45" height="47" fill="#191970" stroke="#9a9a9a" stroke-width="1"/>
<g transform="translate(577,336)">
<path d="M6.5 12C9 8 14 6.5 20 8.5S32 13 37.5 9L6 39.5C10 36 15 35 21 37.5S33 41.5 38.5 35.5" fill="none" stroke="#ffff00" stroke-width="1.7" stroke-linejoin="miter"/>
<path d="M37.5 9L6 39.5" stroke="#ffff00" stroke-width="2.1"/>
</g>
<rect x="624.5" y="336.5" width="45" height="47" fill="#191970" stroke="#9a9a9a" stroke-width="1"/>
<g transform="translate(624,336)">
<text x="23" y="8.6" font-size="7" fill="#ffff00" font-family='"Liberation Sans", sans-serif' font-weight="bold" text-anchor="middle" textLength="24" lengthAdjust="spacing" style="white-space:pre">CROSS</text>
<text x="23" y="43.7" font-size="7" fill="#ffff00" font-family='"Liberation Sans", sans-serif' font-weight="bold" text-anchor="middle" textLength="30.5" lengthAdjust="spacing" style="white-space:pre">SECTION</text>
<g fill="none" stroke="#ffff00" stroke-width="1.1">
<rect x="4.5" y="17.5" width="21.5" height="19.5"/>
<rect x="18" y="10" width="22" height="19.5"/>
<path d="M4.5 17.5L18 10M26 17.5L40 10M4.5 37L18 29.5M26 37L40 29.5" stroke-dasharray="1 0.8"/>
</g>
<path d="M13.5 14.5L34.5 11.8V31L13.5 34z" fill="url(#dithy)" stroke="#ffff00" stroke-width="0.8"/>
<path d="M13.5 14.5L34.5 11.8V31L13.5 34z" fill="#ffff00" opacity="0.35"/>
</g>
<rect x="671.5" y="336.5" width="45" height="47" fill="#6e6e6e" stroke="#9a9a9a" stroke-width="1"/>
<g transform="translate(671,336)">
<text x="23" y="8.6" font-size="7" fill="#e0e0e0" font-family='"Liberation Sans", sans-serif' font-weight="bold" text-anchor="middle" textLength="24" lengthAdjust="spacing" style="white-space:pre">CROSS</text>
<text x="23" y="43.7" font-size="7" fill="#e0e0e0" font-family='"Liberation Sans", sans-serif' font-weight="bold" text-anchor="middle" textLength="30.5" lengthAdjust="spacing" style="white-space:pre">SECTION</text>
<g fill="none" stroke="#e0e0e0" stroke-width="1.1">
<rect x="4.5" y="17.5" width="21.5" height="19.5"/>
<rect x="18" y="10" width="22" height="19.5"/>
<path d="M4.5 17.5L18 10M26 17.5L40 10M4.5 37L18 29.5M26 37L40 29.5" stroke-dasharray="1 0.8"/>
</g>
<path d="M13.5 14.5L34.5 11.8V31L13.5 34z" fill="url(#dithw)" stroke="#e0e0e0" stroke-width="0.8"/>
<path d="M13.5 14.5L34.5 11.8V31L13.5 34z" fill="#e0e0e0" opacity="0.35"/>
</g>
<rect x="718.5" y="336.5" width="45" height="47" fill="#6e6e6e" stroke="#9a9a9a" stroke-width="1"/>
<g transform="translate(718,336)">
<text x="23" y="8.6" font-size="7" fill="#e0e0e0" font-family='"Liberation Sans", sans-serif' font-weight="bold" text-anchor="middle" textLength="24" lengthAdjust="spacing" style="white-space:pre">CROSS</text>
<text x="23" y="43.7" font-size="7" fill="#e0e0e0" font-family='"Liberation Sans", sans-serif' font-weight="bold" text-anchor="middle" textLength="30.5" lengthAdjust="spacing" style="white-space:pre">SECTION</text>
<g fill="none" stroke="#e0e0e0" stroke-width="1.1">
<rect x="4.5" y="17.5" width="21.5" height="19.5"/>
<rect x="18" y="10" width="22" height="19.5"/>
<path d="M4.5 17.5L18 10M26 17.5L40 10M4.5 37L18 29.5M26 37L40 29.5" stroke-dasharray="1 0.8"/>
</g>
<path d="M13.5 14.5L34.5 11.8V31L13.5 34z" fill="url(#dithw)" stroke="#e0e0e0" stroke-width="0.8"/>
<path d="M13.5 14.5L34.5 11.8V31L13.5 34z" fill="#e0e0e0" opacity="0.35"/>
</g>
<rect x="1080" y="770" width="42" height="5" fill="#000" />
<rect x="573" y="386" width="562" height="385" fill="#000" />
<rect x="573.5" y="386.5" width="561" height="384" fill="none" stroke="#000" stroke-width="1" shape-rendering="crispEdges"/>
<rect x="573.5" y="386.5" width="561" height="384" fill="none" stroke="#fff" stroke-width="1" stroke-dasharray="1 1" shape-rendering="crispEdges"/>
<text x="584.5" y="405" font-size="18" fill="#ffff00" font-family='"Liberation Sans", sans-serif' textLength="185.5" lengthAdjust="spacing" stroke="#ffff00" stroke-width="0.35" style="white-space:pre">22-aug-1997,19:05:00</text>
<text x="781.5" y="405" font-size="18" fill="#fff" font-family='"Liberation Sans", sans-serif' textLength="311.5" lengthAdjust="spacing" stroke="#fff" stroke-width="0.35" style="white-space:pre">Planar cross-section plot.  Contour of</text>
<text x="584.5" y="431.5" font-size="18" fill="#fff" font-family='"Liberation Sans", sans-serif' textLength="229" lengthAdjust="spacing" stroke="#fff" stroke-width="0.35" style="white-space:pre">radialvelocity using: rhb_3d.</text>
<line x1="1051" y1="413.5" x2="1135" y2="413.5" stroke="#aaa" stroke-width="1" />
<line x1="1051" y1="719.5" x2="1135" y2="719.5" stroke="#aaa" stroke-width="1" />
<text x="1053" y="428" font-size="13" fill="#fff" font-family='"Liberation Sans", sans-serif' textLength="75" lengthAdjust="spacing" style="white-space:pre">radialvelocity</text>
<g shape-rendering="crispEdges">
<polygon points="624.5,632.3 663.0,632.3 663.0,660.1 666.4,660.1 666.4,682.4 624.5,682.4" fill="#055010"/>
<polygon points="624.5,664.9 633.8,665.9 640.6,668.0 650.9,670.1 657.8,671.1 663.0,670.1 665.4,665.9 666.4,660.1 700.8,660.1 700.8,682.4 624.5,682.4" fill="#b0b0b0"/>
<polygon points="732.4,660.1 740.0,660.1 740.0,682.4 732.4,682.4" fill="#b0b0b0"/>
<polygon points="775.4,620.2 817.7,620.2 817.7,614.4 822.1,614.4 822.1,591.3 976.8,591.3 976.8,609.2 1019.8,609.2 1019.8,620.2 1050.7,620.2 1050.7,682.4 775.4,682.4" fill="#055010"/>
<polygon points="775.4,620.2 817.7,620.2 817.7,614.4 822.1,614.4 822.1,591.3 874.4,591.3 874.4,601.3 869.2,610.9 862.4,619.5 850.3,627.4 836.6,630.2 826.3,629.8 812.5,626.8 798.8,624.7 785.0,626.1 775.4,627.4" fill="#0a8214"/>
<polygon points="822.1,591.3 845.2,591.3 841.7,594.4 834.9,597.9 828.0,599.9 822.1,601.0" fill="#10a41c"/>
<polygon points="775.4,672.1 785.0,674.5 791.9,677.6 798.8,679.7 807.3,680.0 815.9,679.7 824.5,677.6 833.1,674.5 843.4,671.4 853.8,670.1 862.4,670.8 870.9,672.8 877.8,676.9 884.7,682.4 775.4,682.4" fill="#b0b0b0"/>
<polygon points="927.0,682.4 927.0,674.5 929.4,667.7 933.5,661.1 938.0,657.3 950.0,654.3 963.8,653.6 975.8,652.2 980.9,654.3 987.8,657.3 998.1,661.1 1008.4,663.2 1015.3,664.9 1018.8,672.1 1022.2,682.4" fill="#b0b0b0"/>
</g>
<rect x="624.5" y="413.5" width="426.5" height="281.5" fill="none" stroke="#fff" stroke-width="1.2"/>
<line x1="677.8" y1="413.5" x2="677.8" y2="420.5" stroke="#fff" stroke-width="1.2" />
<line x1="677.8" y1="695" x2="677.8" y2="688" stroke="#fff" stroke-width="1.2" />
<line x1="731.1" y1="413.5" x2="731.1" y2="420.5" stroke="#fff" stroke-width="1.2" />
<line x1="731.1" y1="695" x2="731.1" y2="688" stroke="#fff" stroke-width="1.2" />
<line x1="784.4" y1="413.5" x2="784.4" y2="420.5" stroke="#fff" stroke-width="1.2" />
<line x1="784.4" y1="695" x2="784.4" y2="688" stroke="#fff" stroke-width="1.2" />
<line x1="837.7" y1="413.5" x2="837.7" y2="420.5" stroke="#fff" stroke-width="1.2" />
<line x1="837.7" y1="695" x2="837.7" y2="688" stroke="#fff" stroke-width="1.2" />
<line x1="891.0" y1="413.5" x2="891.0" y2="420.5" stroke="#fff" stroke-width="1.2" />
<line x1="891.0" y1="695" x2="891.0" y2="688" stroke="#fff" stroke-width="1.2" />
<line x1="944.3" y1="413.5" x2="944.3" y2="420.5" stroke="#fff" stroke-width="1.2" />
<line x1="944.3" y1="695" x2="944.3" y2="688" stroke="#fff" stroke-width="1.2" />
<line x1="997.5999999999999" y1="413.5" x2="997.5999999999999" y2="420.5" stroke="#fff" stroke-width="1.2" />
<line x1="997.5999999999999" y1="695" x2="997.5999999999999" y2="688" stroke="#fff" stroke-width="1.2" />
<line x1="624.5" y1="441.65" x2="636.0" y2="441.65" stroke="#fff" stroke-width="1.2" />
<line x1="1051" y1="441.65" x2="1039.5" y2="441.65" stroke="#fff" stroke-width="1.2" />
<line x1="624.5" y1="469.8" x2="636.0" y2="469.8" stroke="#fff" stroke-width="1.2" />
<line x1="1051" y1="469.8" x2="1039.5" y2="469.8" stroke="#fff" stroke-width="1.2" />
<line x1="624.5" y1="497.95" x2="636.0" y2="497.95" stroke="#fff" stroke-width="1.2" />
<line x1="1051" y1="497.95" x2="1039.5" y2="497.95" stroke="#fff" stroke-width="1.2" />
<line x1="624.5" y1="526.1" x2="636.0" y2="526.1" stroke="#fff" stroke-width="1.2" />
<line x1="1051" y1="526.1" x2="1039.5" y2="526.1" stroke="#fff" stroke-width="1.2" />
<line x1="624.5" y1="554.25" x2="636.0" y2="554.25" stroke="#fff" stroke-width="1.2" />
<line x1="1051" y1="554.25" x2="1039.5" y2="554.25" stroke="#fff" stroke-width="1.2" />
<line x1="624.5" y1="582.4" x2="636.0" y2="582.4" stroke="#fff" stroke-width="1.2" />
<line x1="1051" y1="582.4" x2="1039.5" y2="582.4" stroke="#fff" stroke-width="1.2" />
<line x1="624.5" y1="610.55" x2="636.0" y2="610.55" stroke="#fff" stroke-width="1.2" />
<line x1="1051" y1="610.55" x2="1039.5" y2="610.55" stroke="#fff" stroke-width="1.2" />
<line x1="624.5" y1="638.7" x2="636.0" y2="638.7" stroke="#fff" stroke-width="1.2" />
<line x1="1051" y1="638.7" x2="1039.5" y2="638.7" stroke="#fff" stroke-width="1.2" />
<line x1="624.5" y1="666.85" x2="636.0" y2="666.85" stroke="#fff" stroke-width="1.2" />
<line x1="1051" y1="666.85" x2="1039.5" y2="666.85" stroke="#fff" stroke-width="1.2" />
<text x="621" y="413.0" font-size="9.5" fill="#fff" font-family='"Liberation Sans", sans-serif' text-anchor="end" textLength="11.4" lengthAdjust="spacing" style="white-space:pre">20</text>
<text x="621" y="469.4" font-size="9.5" fill="#fff" font-family='"Liberation Sans", sans-serif' text-anchor="end" textLength="11.4" lengthAdjust="spacing" style="white-space:pre">16</text>
<text x="621" y="525.8" font-size="9.5" fill="#fff" font-family='"Liberation Sans", sans-serif' text-anchor="end" textLength="11.4" lengthAdjust="spacing" style="white-space:pre">12</text>
<text x="621" y="582.2" font-size="9.5" fill="#fff" font-family='"Liberation Sans", sans-serif' text-anchor="end" textLength="5.5" lengthAdjust="spacing" style="white-space:pre">8</text>
<text x="621" y="638.6" font-size="9.5" fill="#fff" font-family='"Liberation Sans", sans-serif' text-anchor="end" textLength="5.5" lengthAdjust="spacing" style="white-space:pre">4</text>
<text x="621" y="695.0" font-size="9.5" fill="#fff" font-family='"Liberation Sans", sans-serif' text-anchor="end" textLength="5.5" lengthAdjust="spacing" style="white-space:pre">0</text>
<text x="617" y="706" font-size="10" fill="#fff" font-family='"Liberation Sans", sans-serif' textLength="14" lengthAdjust="spacing" style="white-space:pre">0.0</text>
<text x="724.5" y="706" font-size="10" fill="#fff" font-family='"Liberation Sans", sans-serif' textLength="13.5" lengthAdjust="spacing" style="white-space:pre">7.5</text>
<text x="828" y="706" font-size="10" fill="#fff" font-family='"Liberation Sans", sans-serif' textLength="19" lengthAdjust="spacing" style="white-space:pre">14.9</text>
<text x="933" y="706" font-size="10" fill="#fff" font-family='"Liberation Sans", sans-serif' textLength="20" lengthAdjust="spacing" style="white-space:pre">22.4</text>
<text x="1039.5" y="706" font-size="10" fill="#fff" font-family='"Liberation Sans", sans-serif' textLength="11.5" lengthAdjust="spacing" style="white-space:pre">29</text>
<text x="805" y="714.5" font-size="10.5" fill="#fff" font-family='"Liberation Sans", sans-serif' textLength="66.5" lengthAdjust="spacing" style="white-space:pre">Distance in km</text>
<text transform="translate(605,553.5) rotate(-90)" text-anchor="middle" font-size="13" font-weight="bold" fill="#fff" font-family='"Liberation Serif", serif' textLength="95" lengthAdjust="spacing">km above MSL</text>
<rect x="1052" y="436" width="10" height="11" fill="#ff0000" shape-rendering="crispEdges"/>
<rect x="1052" y="447" width="10" height="11" fill="#cc0000" shape-rendering="crispEdges"/>
<rect x="1052" y="458" width="10" height="11" fill="#880000" shape-rendering="crispEdges"/>
<rect x="1052" y="469" width="10" height="11" fill="#e05000" shape-rendering="crispEdges"/>
<rect x="1052" y="480" width="10" height="11" fill="#ff7700" shape-rendering="crispEdges"/>
<rect x="1052" y="491" width="10" height="11" fill="#ff5555" shape-rendering="crispEdges"/>
<rect x="1052" y="502" width="10" height="11" fill="#ff8888" shape-rendering="crispEdges"/>
<rect x="1052" y="513" width="10" height="11" fill="#ffbbbb" shape-rendering="crispEdges"/>
<rect x="1052" y="524" width="10" height="11" fill="#ffff00" shape-rendering="crispEdges"/>
<rect x="1052" y="535" width="10" height="11" fill="#ffbb22" shape-rendering="crispEdges"/>
<rect x="1052" y="546" width="10" height="11" fill="#d89966" shape-rendering="crispEdges"/>
<rect x="1052" y="557" width="10" height="11" fill="#aa4400" shape-rendering="crispEdges"/>
<rect x="1052" y="568" width="10" height="11" fill="#b4b4b4" shape-rendering="crispEdges"/>
<rect x="1052" y="579" width="10" height="11" fill="#055010" shape-rendering="crispEdges"/>
<rect x="1052" y="590" width="10" height="11" fill="#0a7a14" shape-rendering="crispEdges"/>
<rect x="1052" y="601" width="10" height="11" fill="#10a020" shape-rendering="crispEdges"/>
<rect x="1052" y="612" width="10" height="11" fill="#00ff00" shape-rendering="crispEdges"/>
<rect x="1052" y="623" width="10" height="11" fill="#00bbff" shape-rendering="crispEdges"/>
<rect x="1052" y="634" width="10" height="11" fill="#0088ff" shape-rendering="crispEdges"/>
<rect x="1052" y="645" width="10" height="11" fill="#0000dd" shape-rendering="crispEdges"/>
<rect x="1052" y="656" width="10" height="11" fill="#0022aa" shape-rendering="crispEdges"/>
<rect x="1052" y="667" width="10" height="11" fill="#000088" shape-rendering="crispEdges"/>
<rect x="1052" y="678" width="10" height="11" fill="#8888bb" shape-rendering="crispEdges"/>
<rect x="1052" y="689" width="10" height="11" fill="#555588" shape-rendering="crispEdges"/>
<rect x="1052" y="700" width="10" height="11" fill="#777777" shape-rendering="crispEdges"/>
<text x="1067.5" y="445.5" font-size="12" fill="#fff" font-family='"Liberation Sans", sans-serif' textLength="22.7" lengthAdjust="spacing" style="white-space:pre">24.0</text>
<text x="1067.5" y="456.5" font-size="12" fill="#fff" font-family='"Liberation Sans", sans-serif' textLength="22.7" lengthAdjust="spacing" style="white-space:pre">22.0</text>
<text x="1067.5" y="467.5" font-size="12" fill="#fff" font-family='"Liberation Sans", sans-serif' textLength="22.7" lengthAdjust="spacing" style="white-space:pre">20.0</text>
<text x="1067.5" y="478.5" font-size="12" fill="#fff" font-family='"Liberation Sans", sans-serif' textLength="22.7" lengthAdjust="spacing" style="white-space:pre">18.0</text>
<text x="1067.5" y="489.5" font-size="12" fill="#fff" font-family='"Liberation Sans", sans-serif' textLength="22.7" lengthAdjust="spacing" style="white-space:pre">16.0</text>
<text x="1067.5" y="500.5" font-size="12" fill="#fff" font-family='"Liberation Sans", sans-serif' textLength="22.7" lengthAdjust="spacing" style="white-space:pre">14.0</text>
<text x="1067.5" y="511.5" font-size="12" fill="#fff" font-family='"Liberation Sans", sans-serif' textLength="22.7" lengthAdjust="spacing" style="white-space:pre">12.0</text>
<text x="1067.5" y="522.5" font-size="12" fill="#fff" font-family='"Liberation Sans", sans-serif' textLength="22.7" lengthAdjust="spacing" style="white-space:pre">10.0</text>
<text x="1067.5" y="533.5" font-size="12" fill="#fff" font-family='"Liberation Sans", sans-serif' textLength="16" lengthAdjust="spacing" style="white-space:pre">8.0</text>
<text x="1067.5" y="544.5" font-size="12" fill="#fff" font-family='"Liberation Sans", sans-serif' textLength="16" lengthAdjust="spacing" style="white-space:pre">6.0</text>
<text x="1067.5" y="555.5" font-size="12" fill="#fff" font-family='"Liberation Sans", sans-serif' textLength="16" lengthAdjust="spacing" style="white-space:pre">4.0</text>
<text x="1067.5" y="566.5" font-size="12" fill="#fff" font-family='"Liberation Sans", sans-serif' textLength="16" lengthAdjust="spacing" style="white-space:pre">2.0</text>
<text x="1067.5" y="577.5" font-size="12" fill="#fff" font-family='"Liberation Sans", sans-serif' textLength="16" lengthAdjust="spacing" style="white-space:pre">0.0</text>
<text x="1067.5" y="588.5" font-size="12" fill="#fff" font-family='"Liberation Sans", sans-serif' textLength="20.5" lengthAdjust="spacing" style="white-space:pre">-2.0</text>
<text x="1067.5" y="599.5" font-size="12" fill="#fff" font-family='"Liberation Sans", sans-serif' textLength="20.5" lengthAdjust="spacing" style="white-space:pre">-4.0</text>
<text x="1067.5" y="610.5" font-size="12" fill="#fff" font-family='"Liberation Sans", sans-serif' textLength="20.5" lengthAdjust="spacing" style="white-space:pre">-6.0</text>
<text x="1067.5" y="621.5" font-size="12" fill="#fff" font-family='"Liberation Sans", sans-serif' textLength="20.5" lengthAdjust="spacing" style="white-space:pre">-8.0</text>
<text x="1067.5" y="632.5" font-size="12" fill="#fff" font-family='"Liberation Sans", sans-serif' textLength="31.2" lengthAdjust="spacing" style="white-space:pre">-10.0</text>
<text x="1067.5" y="643.5" font-size="12" fill="#fff" font-family='"Liberation Sans", sans-serif' textLength="31.2" lengthAdjust="spacing" style="white-space:pre">-12.0</text>
<text x="1067.5" y="654.5" font-size="12" fill="#fff" font-family='"Liberation Sans", sans-serif' textLength="31.2" lengthAdjust="spacing" style="white-space:pre">-14.0</text>
<text x="1067.5" y="665.5" font-size="12" fill="#fff" font-family='"Liberation Sans", sans-serif' textLength="31.2" lengthAdjust="spacing" style="white-space:pre">-16.0</text>
<text x="1067.5" y="676.5" font-size="12" fill="#fff" font-family='"Liberation Sans", sans-serif' textLength="31.2" lengthAdjust="spacing" style="white-space:pre">-18.0</text>
<text x="1067.5" y="687.5" font-size="12" fill="#fff" font-family='"Liberation Sans", sans-serif' textLength="31.2" lengthAdjust="spacing" style="white-space:pre">-20.0</text>
<text x="1067.5" y="698.5" font-size="12" fill="#fff" font-family='"Liberation Sans", sans-serif' textLength="31.2" lengthAdjust="spacing" style="white-space:pre">-22.0</text>
<text x="1067.5" y="709.5" font-size="12" fill="#fff" font-family='"Liberation Sans", sans-serif' textLength="31.2" lengthAdjust="spacing" style="white-space:pre">-24.0</text>
<rect x="579.5" y="720.5" width="45" height="47" fill="#191970" stroke="#9a9a9a" stroke-width="1"/>
<g transform="translate(579,720)">
<path d="M6.5 12C9 8 14 6.5 20 8.5S32 13 37.5 9L6 39.5C10 36 15 35 21 37.5S33 41.5 38.5 35.5" fill="none" stroke="#ffff00" stroke-width="1.7" stroke-linejoin="miter"/>
<path d="M37.5 9L6 39.5" stroke="#ffff00" stroke-width="2.1"/>
</g>
<rect x="626.5" y="720.5" width="45" height="47" fill="#191970" stroke="#9a9a9a" stroke-width="1"/>
<g transform="translate(626,720)">
<text x="23" y="8.6" font-size="7" fill="#ffff00" font-family='"Liberation Sans", sans-serif' font-weight="bold" text-anchor="middle" textLength="24" lengthAdjust="spacing" style="white-space:pre">CROSS</text>
<text x="23" y="43.7" font-size="7" fill="#ffff00" font-family='"Liberation Sans", sans-serif' font-weight="bold" text-anchor="middle" textLength="30.5" lengthAdjust="spacing" style="white-space:pre">SECTION</text>
<g fill="none" stroke="#ffff00" stroke-width="1.1">
<rect x="4.5" y="17.5" width="21.5" height="19.5"/>
<rect x="18" y="10" width="22" height="19.5"/>
<path d="M4.5 17.5L18 10M26 17.5L40 10M4.5 37L18 29.5M26 37L40 29.5" stroke-dasharray="1 0.8"/>
</g>
<path d="M13.5 14.5L34.5 11.8V31L13.5 34z" fill="url(#dithy)" stroke="#ffff00" stroke-width="0.8"/>
<path d="M13.5 14.5L34.5 11.8V31L13.5 34z" fill="#ffff00" opacity="0.35"/>
</g>
<rect x="673.5" y="720.5" width="45" height="47" fill="#6e6e6e" stroke="#9a9a9a" stroke-width="1"/>
<g transform="translate(673,720)">
<text x="23" y="8.6" font-size="7" fill="#e0e0e0" font-family='"Liberation Sans", sans-serif' font-weight="bold" text-anchor="middle" textLength="24" lengthAdjust="spacing" style="white-space:pre">CROSS</text>
<text x="23" y="43.7" font-size="7" fill="#e0e0e0" font-family='"Liberation Sans", sans-serif' font-weight="bold" text-anchor="middle" textLength="30.5" lengthAdjust="spacing" style="white-space:pre">SECTION</text>
<g fill="none" stroke="#e0e0e0" stroke-width="1.1">
<rect x="4.5" y="17.5" width="21.5" height="19.5"/>
<rect x="18" y="10" width="22" height="19.5"/>
<path d="M4.5 17.5L18 10M26 17.5L40 10M4.5 37L18 29.5M26 37L40 29.5" stroke-dasharray="1 0.8"/>
</g>
<path d="M13.5 14.5L34.5 11.8V31L13.5 34z" fill="url(#dithw)" stroke="#e0e0e0" stroke-width="0.8"/>
<path d="M13.5 14.5L34.5 11.8V31L13.5 34z" fill="#e0e0e0" opacity="0.35"/>
</g>
<rect x="720.5" y="720.5" width="45" height="47" fill="#6e6e6e" stroke="#9a9a9a" stroke-width="1"/>
<g transform="translate(720,720)">
<text x="23" y="8.6" font-size="7" fill="#e0e0e0" font-family='"Liberation Sans", sans-serif' font-weight="bold" text-anchor="middle" textLength="24" lengthAdjust="spacing" style="white-space:pre">CROSS</text>
<text x="23" y="43.7" font-size="7" fill="#e0e0e0" font-family='"Liberation Sans", sans-serif' font-weight="bold" text-anchor="middle" textLength="30.5" lengthAdjust="spacing" style="white-space:pre">SECTION</text>
<g fill="none" stroke="#e0e0e0" stroke-width="1.1">
<rect x="4.5" y="17.5" width="21.5" height="19.5"/>
<rect x="18" y="10" width="22" height="19.5"/>
<path d="M4.5 17.5L18 10M26 17.5L40 10M4.5 37L18 29.5M26 37L40 29.5" stroke-dasharray="1 0.8"/>
</g>
<path d="M13.5 14.5L34.5 11.8V31L13.5 34z" fill="url(#dithw)" stroke="#e0e0e0" stroke-width="0.8"/>
<path d="M13.5 14.5L34.5 11.8V31L13.5 34z" fill="#e0e0e0" opacity="0.35"/>
</g>
<rect x="1136" y="420" width="5" height="285" fill="#fff" />
<rect x="4" y="426" width="570" height="445" fill="#000" />
<rect x="4.5" y="426.5" width="569" height="444" fill="none" stroke="#000" stroke-width="1" shape-rendering="crispEdges"/>
<rect x="4.5" y="426.5" width="569" height="444" fill="none" stroke="#fff" stroke-width="1" stroke-dasharray="1 1" shape-rendering="crispEdges"/>
<line x1="488" y1="458.5" x2="573" y2="458.5" stroke="#aaa" stroke-width="1" />
<line x1="488" y1="639.5" x2="573" y2="639.5" stroke="#aaa" stroke-width="1" />
<line x1="488" y1="820.5" x2="573" y2="820.5" stroke="#aaa" stroke-width="1" />
<g clip-path="url(#rclip)">
<g shape-rendering="crispEdges">
<rect x="206.25" y="480.0" width="15.0" height="3.75" fill="#0f7a50" />
<rect x="221.25" y="480.0" width="7.5" height="3.75" fill="#c8c8c8" />
<rect x="228.75" y="480.0" width="7.5" height="3.75" fill="#0f7a50" />
<rect x="262.5" y="480.0" width="3.75" height="3.75" fill="#00ee99" />
<rect x="266.25" y="480.0" width="15.0" height="3.75" fill="#c8c8c8" />
<rect x="206.25" y="487.5" width="3.75" height="3.75" fill="#0f7a50" />
<rect x="210.0" y="487.5" width="3.75" height="3.75" fill="#00ee99" />
<rect x="213.75" y="487.5" width="22.5" height="3.75" fill="#0f7a50" />
<rect x="258.75" y="487.5" width="7.5" height="3.75" fill="#00ee99" />
<rect x="266.25" y="487.5" width="3.75" height="3.75" fill="#0f7a50" />
<rect x="270.0" y="487.5" width="3.75" height="3.75" fill="#c8c8c8" />
<rect x="273.75" y="487.5" width="7.5" height="3.75" fill="#0f7a50" />
<rect x="288.75" y="487.5" width="7.5" height="3.75" fill="#c8c8c8" />
<rect x="180.0" y="491.25" width="7.5" height="3.75" fill="#0f7a50" />
<rect x="202.5" y="491.25" width="3.75" height="3.75" fill="#00ee99" />
<rect x="206.25" y="491.25" width="3.75" height="3.75" fill="#0f7a50" />
<rect x="210.0" y="491.25" width="3.75" height="3.75" fill="#00ee99" />
<rect x="213.75" y="491.25" width="7.5" height="3.75" fill="#0f7a50" />
<rect x="221.25" y="491.25" width="3.75" height="3.75" fill="#00ee99" />
<rect x="225.0" y="491.25" width="11.25" height="3.75" fill="#0f7a50" />
<rect x="258.75" y="491.25" width="3.75" height="3.75" fill="#00ee99" />
<rect x="262.5" y="491.25" width="7.5" height="3.75" fill="#e8a030" />
<rect x="270.0" y="491.25" width="3.75" height="3.75" fill="#c8c8c8" />
<rect x="273.75" y="491.25" width="7.5" height="3.75" fill="#0f7a50" />
<rect x="285.0" y="491.25" width="7.5" height="3.75" fill="#0f7a50" />
<rect x="292.5" y="491.25" width="3.75" height="3.75" fill="#c8c8c8" />
<rect x="202.5" y="495.0" width="3.75" height="3.75" fill="#00ee99" />
<rect x="206.25" y="495.0" width="7.5" height="3.75" fill="#c8c8c8" />
<rect x="213.75" y="495.0" width="3.75" height="3.75" fill="#0f7a50" />
<rect x="217.5" y="495.0" width="7.5" height="3.75" fill="#00ee99" />
<rect x="225.0" y="495.0" width="11.25" height="3.75" fill="#0f7a50" />
<rect x="258.75" y="495.0" width="3.75" height="3.75" fill="#00ee99" />
<rect x="262.5" y="495.0" width="7.5" height="3.75" fill="#e8a030" />
<rect x="270.0" y="495.0" width="3.75" height="3.75" fill="#c8c8c8" />
<rect x="273.75" y="495.0" width="7.5" height="3.75" fill="#00ee99" />
<rect x="285.0" y="495.0" width="7.5" height="3.75" fill="#0f7a50" />
<rect x="292.5" y="495.0" width="3.75" height="3.75" fill="#c8c8c8" />
<rect x="296.25" y="495.0" width="3.75" height="3.75" fill="#00ee99" />
<rect x="202.5" y="498.75" width="3.75" height="3.75" fill="#00ee99" />
<rect x="206.25" y="498.75" width="7.5" height="3.75" fill="#c8c8c8" />
<rect x="213.75" y="498.75" width="3.75" height="3.75" fill="#0f7a50" />
<rect x="217.5" y="498.75" width="7.5" height="3.75" fill="#00ee99" />
<rect x="225.0" y="498.75" width="11.25" height="3.75" fill="#0f7a50" />
<rect x="262.5" y="498.75" width="11.25" height="3.75" fill="#0f7a50" />
<rect x="273.75" y="498.75" width="7.5" height="3.75" fill="#00ee99" />
<rect x="285.0" y="498.75" width="7.5" height="3.75" fill="#0f7a50" />
<rect x="292.5" y="498.75" width="3.75" height="3.75" fill="#c8c8c8" />
<rect x="296.25" y="498.75" width="3.75" height="3.75" fill="#00ee99" />
<rect x="206.25" y="502.5" width="3.75" height="3.75" fill="#0f7a50" />
<rect x="210.0" y="502.5" width="3.75" height="3.75" fill="#00ee99" />
<rect x="213.75" y="502.5" width="11.25" height="3.75" fill="#0f7a50" />
<rect x="225.0" y="502.5" width="11.25" height="3.75" fill="#00ee99" />
<rect x="240.0" y="502.5" width="7.5" height="3.75" fill="#00ee99" />
<rect x="262.5" y="502.5" width="11.25" height="3.75" fill="#0f7a50" />
<rect x="273.75" y="502.5" width="7.5" height="3.75" fill="#00ee99" />
<rect x="285.0" y="502.5" width="3.75" height="3.75" fill="#00ee99" />
<rect x="288.75" y="502.5" width="7.5" height="3.75" fill="#c8c8c8" />
<rect x="296.25" y="502.5" width="3.75" height="3.75" fill="#00ee99" />
<rect x="210.0" y="476.25" width="11.25" height="3.75" fill="#0f7a50" />
<rect x="221.25" y="476.25" width="7.5" height="3.75" fill="#c8c8c8" />
<rect x="232.5" y="476.25" width="3.75" height="3.75" fill="#0f7a50" />
<rect x="266.25" y="476.25" width="15.0" height="3.75" fill="#c8c8c8" />
<rect x="292.5" y="476.25" width="7.5" height="3.75" fill="#0f7a50" />
<rect x="210.0" y="483.75" width="26.25" height="3.75" fill="#0f7a50" />
<rect x="262.5" y="483.75" width="3.75" height="3.75" fill="#00ee99" />
<rect x="266.25" y="483.75" width="15.0" height="3.75" fill="#c8c8c8" />
<rect x="198.75" y="513.75" width="15.0" height="3.75" fill="#c8c8c8" />
<rect x="213.75" y="513.75" width="7.5" height="3.75" fill="#00ee99" />
<rect x="221.25" y="513.75" width="3.75" height="3.75" fill="#c8c8c8" />
<rect x="225.0" y="513.75" width="11.25" height="3.75" fill="#e8a030" />
<rect x="236.25" y="513.75" width="11.25" height="3.75" fill="#0f7a50" />
<rect x="262.5" y="513.75" width="11.25" height="3.75" fill="#00ee99" />
<rect x="168.75" y="517.5" width="7.5" height="3.75" fill="#0f7a50" />
<rect x="187.5" y="517.5" width="7.5" height="3.75" fill="#00ee99" />
<rect x="213.75" y="517.5" width="7.5" height="3.75" fill="#00ee99" />
<rect x="221.25" y="517.5" width="3.75" height="3.75" fill="#c8c8c8" />
<rect x="225.0" y="517.5" width="3.75" height="3.75" fill="#00ee99" />
<rect x="228.75" y="517.5" width="18.75" height="3.75" fill="#0f7a50" />
<rect x="262.5" y="517.5" width="11.25" height="3.75" fill="#00ee99" />
<rect x="315.0" y="517.5" width="18.75" height="3.75" fill="#0f7a50" />
<rect x="333.75" y="517.5" width="11.25" height="3.75" fill="#00ee99" />
<rect x="217.5" y="506.25" width="3.75" height="3.75" fill="#0f7a50" />
<rect x="221.25" y="506.25" width="3.75" height="3.75" fill="#c8c8c8" />
<rect x="225.0" y="506.25" width="3.75" height="3.75" fill="#0f7a50" />
<rect x="228.75" y="506.25" width="7.5" height="3.75" fill="#00ee99" />
<rect x="236.25" y="506.25" width="3.75" height="3.75" fill="#c8c8c8" />
<rect x="240.0" y="506.25" width="7.5" height="3.75" fill="#00ee99" />
<rect x="262.5" y="506.25" width="18.75" height="3.75" fill="#0f7a50" />
<rect x="288.75" y="506.25" width="7.5" height="3.75" fill="#c8c8c8" />
<rect x="198.75" y="510.0" width="11.25" height="3.75" fill="#c8c8c8" />
<rect x="213.75" y="510.0" width="3.75" height="3.75" fill="#00ee99" />
<rect x="217.5" y="510.0" width="3.75" height="3.75" fill="#0f7a50" />
<rect x="221.25" y="510.0" width="3.75" height="3.75" fill="#c8c8c8" />
<rect x="225.0" y="510.0" width="11.25" height="3.75" fill="#e8a030" />
<rect x="236.25" y="510.0" width="3.75" height="3.75" fill="#c8c8c8" />
<rect x="240.0" y="510.0" width="7.5" height="3.75" fill="#00ee99" />
<rect x="168.75" y="521.25" width="7.5" height="3.75" fill="#0f7a50" />
<rect x="225.0" y="521.25" width="7.5" height="3.75" fill="#0f7a50" />
<rect x="232.5" y="521.25" width="15.0" height="3.75" fill="#00ee99" />
<rect x="318.75" y="521.25" width="7.5" height="3.75" fill="#c8c8c8" />
<rect x="326.25" y="521.25" width="7.5" height="3.75" fill="#0f7a50" />
<rect x="333.75" y="521.25" width="3.75" height="3.75" fill="#c8c8c8" />
<rect x="337.5" y="521.25" width="3.75" height="3.75" fill="#0f7a50" />
<rect x="341.25" y="521.25" width="3.75" height="3.75" fill="#00ee99" />
<rect x="266.25" y="472.5" width="11.25" height="3.75" fill="#0f7a50" />
<rect x="292.5" y="472.5" width="7.5" height="3.75" fill="#0f7a50" />
<rect x="292.5" y="468.75" width="7.5" height="3.75" fill="#0f7a50" />
<rect x="292.5" y="536.25" width="3.75" height="3.75" fill="#00ee99" />
<rect x="296.25" y="536.25" width="11.25" height="3.75" fill="#0f7a50" />
<rect x="307.5" y="536.25" width="3.75" height="3.75" fill="#00ee99" />
<rect x="315.0" y="536.25" width="11.25" height="3.75" fill="#c8c8c8" />
<rect x="330.0" y="536.25" width="3.75" height="3.75" fill="#00ee99" />
<rect x="333.75" y="536.25" width="3.75" height="3.75" fill="#0f7a50" />
<rect x="337.5" y="536.25" width="11.25" height="3.75" fill="#00ee99" />
<rect x="371.25" y="536.25" width="7.5" height="3.75" fill="#00ee99" />
<rect x="262.5" y="540.0" width="11.25" height="3.75" fill="#00ee99" />
<rect x="292.5" y="540.0" width="3.75" height="3.75" fill="#00ee99" />
<rect x="296.25" y="540.0" width="11.25" height="3.75" fill="#0f7a50" />
<rect x="307.5" y="540.0" width="3.75" height="3.75" fill="#00ee99" />
<rect x="311.25" y="540.0" width="15.0" height="3.75" fill="#c8c8c8" />
<rect x="333.75" y="540.0" width="11.25" height="3.75" fill="#00ee99" />
<rect x="375.0" y="540.0" width="7.5" height="3.75" fill="#00ee99" />
<rect x="266.25" y="543.75" width="7.5" height="3.75" fill="#c8c8c8" />
<rect x="292.5" y="543.75" width="18.75" height="3.75" fill="#00ee99" />
<rect x="311.25" y="543.75" width="15.0" height="3.75" fill="#c8c8c8" />
<rect x="296.25" y="528.75" width="3.75" height="3.75" fill="#00ee99" />
<rect x="300.0" y="528.75" width="3.75" height="3.75" fill="#0f7a50" />
<rect x="303.75" y="528.75" width="18.75" height="3.75" fill="#00ee99" />
<rect x="322.5" y="528.75" width="7.5" height="3.75" fill="#e8a030" />
<rect x="330.0" y="528.75" width="3.75" height="3.75" fill="#00ee99" />
<rect x="333.75" y="528.75" width="3.75" height="3.75" fill="#c8c8c8" />
<rect x="337.5" y="528.75" width="7.5" height="3.75" fill="#0f7a50" />
<rect x="371.25" y="528.75" width="3.75" height="3.75" fill="#00ee99" />
<rect x="378.75" y="528.75" width="3.75" height="3.75" fill="#00ee99" />
<rect x="296.25" y="532.5" width="11.25" height="3.75" fill="#0f7a50" />
<rect x="307.5" y="532.5" width="15.0" height="3.75" fill="#00ee99" />
<rect x="322.5" y="532.5" width="7.5" height="3.75" fill="#e8a030" />
<rect x="333.75" y="532.5" width="3.75" height="3.75" fill="#c8c8c8" />
<rect x="337.5" y="532.5" width="7.5" height="3.75" fill="#0f7a50" />
<rect x="371.25" y="532.5" width="11.25" height="3.75" fill="#00ee99" />
<rect x="311.25" y="525.0" width="11.25" height="3.75" fill="#00ee99" />
<rect x="322.5" y="525.0" width="7.5" height="3.75" fill="#e8a030" />
<rect x="330.0" y="525.0" width="3.75" height="3.75" fill="#0f7a50" />
<rect x="333.75" y="525.0" width="3.75" height="3.75" fill="#c8c8c8" />
<rect x="337.5" y="525.0" width="7.5" height="3.75" fill="#0f7a50" />
<rect x="345.0" y="525.0" width="3.75" height="3.75" fill="#00ee99" />
<rect x="262.5" y="547.5" width="3.75" height="3.75" fill="#00ee99" />
<rect x="266.25" y="547.5" width="7.5" height="3.75" fill="#c8c8c8" />
<rect x="281.25" y="547.5" width="7.5" height="3.75" fill="#00ee99" />
<rect x="322.5" y="547.5" width="3.75" height="3.75" fill="#c8c8c8" />
<rect x="326.25" y="547.5" width="7.5" height="3.75" fill="#0f7a50" />
<rect x="405.0" y="547.5" width="7.5" height="3.75" fill="#0f7a50" />
<rect x="266.25" y="551.25" width="7.5" height="3.75" fill="#00ee99" />
<rect x="277.5" y="551.25" width="7.5" height="3.75" fill="#c8c8c8" />
<rect x="285.0" y="551.25" width="3.75" height="3.75" fill="#00ee99" />
<rect x="322.5" y="551.25" width="11.25" height="3.75" fill="#0f7a50" />
<rect x="281.25" y="555.0" width="7.5" height="3.75" fill="#00aadd" />
<rect x="322.5" y="555.0" width="7.5" height="3.75" fill="#0f7a50" />
<rect x="243.75" y="566.25" width="3.75" height="3.75" fill="#00aadd" />
<rect x="251.25" y="566.25" width="11.25" height="3.75" fill="#00aadd" />
<rect x="266.25" y="566.25" width="3.75" height="3.75" fill="#00aadd" />
<rect x="303.75" y="566.25" width="3.75" height="3.75" fill="#00ee99" />
<rect x="311.25" y="566.25" width="3.75" height="3.75" fill="#00ee99" />
<rect x="315.0" y="566.25" width="11.25" height="3.75" fill="#e8a030" />
<rect x="341.25" y="566.25" width="7.5" height="3.75" fill="#e8a030" />
<rect x="348.75" y="566.25" width="7.5" height="3.75" fill="#0f7a50" />
<rect x="405.0" y="566.25" width="11.25" height="3.75" fill="#0f7a50" />
<rect x="243.75" y="570.0" width="3.75" height="3.75" fill="#00aadd" />
<rect x="251.25" y="570.0" width="11.25" height="3.75" fill="#00aadd" />
<rect x="266.25" y="570.0" width="3.75" height="3.75" fill="#00aadd" />
<rect x="303.75" y="570.0" width="22.5" height="3.75" fill="#e8a030" />
<rect x="341.25" y="570.0" width="3.75" height="3.75" fill="#00ee99" />
<rect x="345.0" y="570.0" width="11.25" height="3.75" fill="#0f7a50" />
<rect x="138.75" y="573.75" width="11.25" height="3.75" fill="#0f7a50" />
<rect x="243.75" y="573.75" width="15.0" height="3.75" fill="#00aadd" />
<rect x="266.25" y="573.75" width="3.75" height="3.75" fill="#00aadd" />
<rect x="270.0" y="573.75" width="3.75" height="3.75" fill="#00ee99" />
<rect x="303.75" y="573.75" width="3.75" height="3.75" fill="#e8a030" />
<rect x="307.5" y="573.75" width="3.75" height="3.75" fill="#eebb22" />
<rect x="311.25" y="573.75" width="3.75" height="3.75" fill="#e8a030" />
<rect x="315.0" y="573.75" width="11.25" height="3.75" fill="#00ee99" />
<rect x="330.0" y="573.75" width="7.5" height="3.75" fill="#c8c8c8" />
<rect x="138.75" y="577.5" width="7.5" height="3.75" fill="#0f7a50" />
<rect x="146.25" y="577.5" width="3.75" height="3.75" fill="#00ee99" />
<rect x="266.25" y="577.5" width="7.5" height="3.75" fill="#00aadd" />
<rect x="277.5" y="577.5" width="7.5" height="3.75" fill="#00aadd" />
<rect x="303.75" y="577.5" width="3.75" height="3.75" fill="#e8a030" />
<rect x="307.5" y="577.5" width="3.75" height="3.75" fill="#eebb22" />
<rect x="311.25" y="577.5" width="3.75" height="3.75" fill="#e8a030" />
<rect x="315.0" y="577.5" width="7.5" height="3.75" fill="#c8c8c8" />
<rect x="322.5" y="577.5" width="3.75" height="3.75" fill="#00ee99" />
<rect x="330.0" y="577.5" width="7.5" height="3.75" fill="#e8a030" />
<rect x="138.75" y="581.25" width="7.5" height="3.75" fill="#0f7a50" />
<rect x="146.25" y="581.25" width="3.75" height="3.75" fill="#00ee99" />
<rect x="277.5" y="581.25" width="7.5" height="3.75" fill="#e8a030" />
<rect x="300.0" y="581.25" width="3.75" height="3.75" fill="#00aadd" />
<rect x="303.75" y="581.25" width="3.75" height="3.75" fill="#e8a030" />
<rect x="307.5" y="581.25" width="3.75" height="3.75" fill="#eebb22" />
<rect x="311.25" y="581.25" width="3.75" height="3.75" fill="#e8a030" />
<rect x="315.0" y="581.25" width="7.5" height="3.75" fill="#00ee99" />
<rect x="326.25" y="581.25" width="3.75" height="3.75" fill="#00ee99" />
<rect x="330.0" y="581.25" width="7.5" height="3.75" fill="#e8a030" />
<rect x="146.25" y="585.0" width="3.75" height="3.75" fill="#00ee99" />
<rect x="251.25" y="585.0" width="7.5" height="3.75" fill="#00aadd" />
<rect x="277.5" y="585.0" width="3.75" height="3.75" fill="#00ee99" />
<rect x="281.25" y="585.0" width="3.75" height="3.75" fill="#e8a030" />
<rect x="300.0" y="585.0" width="3.75" height="3.75" fill="#00aadd" />
<rect x="303.75" y="585.0" width="7.5" height="3.75" fill="#e8a030" />
<rect x="311.25" y="585.0" width="7.5" height="3.75" fill="#00ee99" />
<rect x="322.5" y="585.0" width="11.25" height="3.75" fill="#00ee99" />
<rect x="243.75" y="588.75" width="15.0" height="3.75" fill="#00aadd" />
<rect x="277.5" y="588.75" width="3.75" height="3.75" fill="#00ee99" />
<rect x="281.25" y="588.75" width="3.75" height="3.75" fill="#00aadd" />
<rect x="300.0" y="588.75" width="3.75" height="3.75" fill="#00aadd" />
<rect x="303.75" y="588.75" width="7.5" height="3.75" fill="#e8a030" />
<rect x="322.5" y="588.75" width="15.0" height="3.75" fill="#00ee99" />
<rect x="375.0" y="588.75" width="15.0" height="3.75" fill="#00ee99" />
<rect x="251.25" y="592.5" width="11.25" height="3.75" fill="#00aadd" />
<rect x="303.75" y="592.5" width="7.5" height="3.75" fill="#e8a030" />
<rect x="318.75" y="592.5" width="7.5" height="3.75" fill="#0f7a50" />
<rect x="326.25" y="592.5" width="7.5" height="3.75" fill="#00ee99" />
<rect x="333.75" y="592.5" width="3.75" height="3.75" fill="#00aadd" />
<rect x="375.0" y="592.5" width="3.75" height="3.75" fill="#00ee99" />
<rect x="378.75" y="592.5" width="7.5" height="3.75" fill="#0f7a50" />
<rect x="386.25" y="592.5" width="3.75" height="3.75" fill="#00ee99" />
<rect x="120.0" y="596.25" width="18.75" height="3.75" fill="#0f7a50" />
<rect x="258.75" y="596.25" width="3.75" height="3.75" fill="#00aadd" />
<rect x="285.0" y="596.25" width="11.25" height="3.75" fill="#00aadd" />
<rect x="303.75" y="596.25" width="7.5" height="3.75" fill="#e8a030" />
<rect x="311.25" y="596.25" width="3.75" height="3.75" fill="#00aadd" />
<rect x="326.25" y="596.25" width="7.5" height="3.75" fill="#00ee99" />
<rect x="337.5" y="596.25" width="7.5" height="3.75" fill="#00ee99" />
<rect x="375.0" y="596.25" width="3.75" height="3.75" fill="#00ee99" />
<rect x="378.75" y="596.25" width="7.5" height="3.75" fill="#0f7a50" />
<rect x="386.25" y="596.25" width="3.75" height="3.75" fill="#00ee99" />
<rect x="393.75" y="596.25" width="7.5" height="3.75" fill="#c8c8c8" />
<rect x="401.25" y="596.25" width="3.75" height="3.75" fill="#0f7a50" />
<rect x="120.0" y="600.0" width="15.0" height="3.75" fill="#0f7a50" />
<rect x="251.25" y="600.0" width="3.75" height="3.75" fill="#00aadd" />
<rect x="288.75" y="600.0" width="7.5" height="3.75" fill="#00aadd" />
<rect x="311.25" y="600.0" width="7.5" height="3.75" fill="#00aadd" />
<rect x="326.25" y="600.0" width="7.5" height="3.75" fill="#00ee99" />
<rect x="337.5" y="600.0" width="7.5" height="3.75" fill="#00ee99" />
<rect x="375.0" y="600.0" width="3.75" height="3.75" fill="#00ee99" />
<rect x="378.75" y="600.0" width="7.5" height="3.75" fill="#0f7a50" />
<rect x="397.5" y="600.0" width="7.5" height="3.75" fill="#0f7a50" />
<rect x="123.75" y="603.75" width="15.0" height="3.75" fill="#0f7a50" />
<rect x="255.0" y="603.75" width="3.75" height="3.75" fill="#00aadd" />
<rect x="285.0" y="603.75" width="7.5" height="3.75" fill="#1166ee" />
<rect x="292.5" y="603.75" width="3.75" height="3.75" fill="#00aadd" />
<rect x="311.25" y="603.75" width="7.5" height="3.75" fill="#00aadd" />
<rect x="330.0" y="603.75" width="3.75" height="3.75" fill="#00ee99" />
<rect x="337.5" y="603.75" width="7.5" height="3.75" fill="#00ee99" />
<rect x="378.75" y="603.75" width="7.5" height="3.75" fill="#00ee99" />
<rect x="397.5" y="603.75" width="7.5" height="3.75" fill="#0f7a50" />
<rect x="243.75" y="558.75" width="7.5" height="3.75" fill="#00aadd" />
<rect x="251.25" y="558.75" width="3.75" height="3.75" fill="#c8c8c8" />
<rect x="255.0" y="558.75" width="7.5" height="3.75" fill="#e8a030" />
<rect x="318.75" y="558.75" width="3.75" height="3.75" fill="#c8c8c8" />
<rect x="322.5" y="558.75" width="11.25" height="3.75" fill="#e8a030" />
<rect x="337.5" y="558.75" width="11.25" height="3.75" fill="#e8a030" />
<rect x="348.75" y="558.75" width="3.75" height="3.75" fill="#c8c8c8" />
<rect x="408.75" y="558.75" width="7.5" height="3.75" fill="#0f7a50" />
<rect x="225.0" y="562.5" width="7.5" height="3.75" fill="#00ee99" />
<rect x="243.75" y="562.5" width="3.75" height="3.75" fill="#00aadd" />
<rect x="247.5" y="562.5" width="3.75" height="3.75" fill="#00ee99" />
<rect x="251.25" y="562.5" width="3.75" height="3.75" fill="#c8c8c8" />
<rect x="255.0" y="562.5" width="7.5" height="3.75" fill="#e8a030" />
<rect x="266.25" y="562.5" width="7.5" height="3.75" fill="#00aadd" />
<rect x="318.75" y="562.5" width="3.75" height="3.75" fill="#c8c8c8" />
<rect x="341.25" y="562.5" width="7.5" height="3.75" fill="#e8a030" />
<rect x="348.75" y="562.5" width="7.5" height="3.75" fill="#00ee99" />
<rect x="405.0" y="562.5" width="11.25" height="3.75" fill="#0f7a50" />
<rect x="142.5" y="626.25" width="7.5" height="3.75" fill="#00ee99" />
<rect x="191.25" y="626.25" width="3.75" height="3.75" fill="#00aadd" />
<rect x="195.0" y="626.25" width="3.75" height="3.75" fill="#c8c8c8" />
<rect x="198.75" y="626.25" width="7.5" height="3.75" fill="#e8a030" />
<rect x="375.0" y="626.25" width="7.5" height="3.75" fill="#00ee99" />
<rect x="142.5" y="630.0" width="3.75" height="3.75" fill="#00ee99" />
<rect x="146.25" y="630.0" width="7.5" height="3.75" fill="#0f7a50" />
<rect x="191.25" y="630.0" width="3.75" height="3.75" fill="#00aadd" />
<rect x="195.0" y="630.0" width="3.75" height="3.75" fill="#c8c8c8" />
<rect x="198.75" y="630.0" width="7.5" height="3.75" fill="#e8a030" />
<rect x="232.5" y="630.0" width="3.75" height="3.75" fill="#00aadd" />
<rect x="375.0" y="630.0" width="3.75" height="3.75" fill="#00ee99" />
<rect x="378.75" y="630.0" width="3.75" height="3.75" fill="#0f7a50" />
<rect x="142.5" y="633.75" width="11.25" height="3.75" fill="#0f7a50" />
<rect x="153.75" y="633.75" width="3.75" height="3.75" fill="#00ee99" />
<rect x="195.0" y="633.75" width="3.75" height="3.75" fill="#c8c8c8" />
<rect x="198.75" y="633.75" width="3.75" height="3.75" fill="#e8a030" />
<rect x="202.5" y="633.75" width="3.75" height="3.75" fill="#eebb22" />
<rect x="375.0" y="633.75" width="7.5" height="3.75" fill="#0f7a50" />
<rect x="386.25" y="633.75" width="7.5" height="3.75" fill="#00ee99" />
<rect x="142.5" y="637.5" width="7.5" height="3.75" fill="#0f7a50" />
<rect x="153.75" y="637.5" width="3.75" height="3.75" fill="#00ee99" />
<rect x="195.0" y="637.5" width="3.75" height="3.75" fill="#c8c8c8" />
<rect x="198.75" y="637.5" width="3.75" height="3.75" fill="#e8a030" />
<rect x="202.5" y="637.5" width="3.75" height="3.75" fill="#eebb22" />
<rect x="232.5" y="637.5" width="3.75" height="3.75" fill="#00aadd" />
<rect x="375.0" y="637.5" width="7.5" height="3.75" fill="#0f7a50" />
<rect x="382.5" y="637.5" width="11.25" height="3.75" fill="#00ee99" />
<rect x="142.5" y="641.25" width="7.5" height="3.75" fill="#0f7a50" />
<rect x="195.0" y="641.25" width="11.25" height="3.75" fill="#00ee99" />
<rect x="232.5" y="641.25" width="3.75" height="3.75" fill="#00aadd" />
<rect x="360.0" y="641.25" width="7.5" height="3.75" fill="#c8c8c8" />
<rect x="375.0" y="641.25" width="7.5" height="3.75" fill="#0f7a50" />
<rect x="382.5" y="641.25" width="11.25" height="3.75" fill="#00ee99" />
<rect x="228.75" y="645.0" width="3.75" height="3.75" fill="#008877" />
<rect x="232.5" y="645.0" width="3.75" height="3.75" fill="#00aadd" />
<rect x="303.75" y="645.0" width="3.75" height="3.75" fill="#00aadd" />
<rect x="360.0" y="645.0" width="7.5" height="3.75" fill="#c8c8c8" />
<rect x="375.0" y="645.0" width="7.5" height="3.75" fill="#00ee99" />
<rect x="386.25" y="645.0" width="7.5" height="3.75" fill="#00ee99" />
<rect x="206.25" y="648.75" width="7.5" height="3.75" fill="#00ee99" />
<rect x="213.75" y="648.75" width="7.5" height="3.75" fill="#00aadd" />
<rect x="228.75" y="648.75" width="7.5" height="3.75" fill="#008877" />
<rect x="303.75" y="648.75" width="3.75" height="3.75" fill="#0f7a50" />
<rect x="382.5" y="648.75" width="3.75" height="3.75" fill="#00ee99" />
<rect x="386.25" y="648.75" width="7.5" height="3.75" fill="#0f7a50" />
<rect x="180.0" y="652.5" width="7.5" height="3.75" fill="#0f7a50" />
<rect x="206.25" y="652.5" width="3.75" height="3.75" fill="#00ee99" />
<rect x="210.0" y="652.5" width="3.75" height="3.75" fill="#0f7a50" />
<rect x="213.75" y="652.5" width="3.75" height="3.75" fill="#00ee99" />
<rect x="382.5" y="652.5" width="3.75" height="3.75" fill="#00ee99" />
<rect x="386.25" y="652.5" width="7.5" height="3.75" fill="#0f7a50" />
<rect x="195.0" y="615.0" width="7.5" height="3.75" fill="#00ee99" />
<rect x="202.5" y="615.0" width="3.75" height="3.75" fill="#00aadd" />
<rect x="228.75" y="615.0" width="3.75" height="3.75" fill="#00aadd" />
<rect x="195.0" y="618.75" width="3.75" height="3.75" fill="#c8c8c8" />
<rect x="198.75" y="618.75" width="3.75" height="3.75" fill="#00ee99" />
<rect x="311.25" y="618.75" width="3.75" height="3.75" fill="#00aadd" />
<rect x="191.25" y="622.5" width="3.75" height="3.75" fill="#00aadd" />
<rect x="195.0" y="622.5" width="3.75" height="3.75" fill="#c8c8c8" />
<rect x="198.75" y="622.5" width="7.5" height="3.75" fill="#e8a030" />
<rect x="311.25" y="622.5" width="3.75" height="3.75" fill="#00aadd" />
<rect x="228.75" y="611.25" width="3.75" height="3.75" fill="#00aadd" />
<rect x="176.25" y="656.25" width="3.75" height="3.75" fill="#00ee99" />
<rect x="183.75" y="656.25" width="3.75" height="3.75" fill="#e8a030" />
<rect x="206.25" y="656.25" width="7.5" height="3.75" fill="#0f7a50" />
<rect x="213.75" y="656.25" width="3.75" height="3.75" fill="#00ee99" />
<rect x="330.0" y="656.25" width="7.5" height="3.75" fill="#00ee99" />
<rect x="146.25" y="660.0" width="7.5" height="3.75" fill="#0f7a50" />
<rect x="153.75" y="660.0" width="3.75" height="3.75" fill="#00ee99" />
<rect x="176.25" y="660.0" width="3.75" height="3.75" fill="#00ee99" />
<rect x="183.75" y="660.0" width="3.75" height="3.75" fill="#e8a030" />
<rect x="198.75" y="660.0" width="11.25" height="3.75" fill="#00aadd" />
<rect x="210.0" y="660.0" width="3.75" height="3.75" fill="#0f7a50" />
<rect x="150.0" y="663.75" width="3.75" height="3.75" fill="#0f7a50" />
<rect x="153.75" y="663.75" width="3.75" height="3.75" fill="#00ee99" />
<rect x="172.5" y="663.75" width="7.5" height="3.75" fill="#00ee99" />
<rect x="183.75" y="663.75" width="3.75" height="3.75" fill="#0f7a50" />
<rect x="198.75" y="663.75" width="3.75" height="3.75" fill="#00aadd" />
<rect x="202.5" y="663.75" width="7.5" height="3.75" fill="#0f7a50" />
<rect x="210.0" y="663.75" width="3.75" height="3.75" fill="#00aadd" />
<rect x="258.75" y="663.75" width="7.5" height="3.75" fill="#00aadd" />
<rect x="292.5" y="663.75" width="11.25" height="3.75" fill="#00ee99" />
<rect x="150.0" y="667.5" width="7.5" height="3.75" fill="#0f7a50" />
<rect x="172.5" y="667.5" width="3.75" height="3.75" fill="#00ee99" />
<rect x="198.75" y="667.5" width="7.5" height="3.75" fill="#00ee99" />
<rect x="206.25" y="667.5" width="3.75" height="3.75" fill="#0f7a50" />
<rect x="210.0" y="667.5" width="3.75" height="3.75" fill="#00aadd" />
<rect x="251.25" y="667.5" width="7.5" height="3.75" fill="#1166ee" />
<rect x="262.5" y="667.5" width="3.75" height="3.75" fill="#00aadd" />
<rect x="277.5" y="667.5" width="3.75" height="3.75" fill="#00aadd" />
<rect x="292.5" y="667.5" width="11.25" height="3.75" fill="#00ee99" />
<rect x="135.0" y="678.75" width="3.75" height="3.75" fill="#c8c8c8" />
<rect x="146.25" y="678.75" width="11.25" height="3.75" fill="#00ee99" />
<rect x="232.5" y="678.75" width="3.75" height="3.75" fill="#00ee99" />
<rect x="262.5" y="678.75" width="3.75" height="3.75" fill="#00aadd" />
<rect x="266.25" y="678.75" width="7.5" height="3.75" fill="#00ee99" />
<rect x="277.5" y="678.75" width="3.75" height="3.75" fill="#00ee99" />
<rect x="281.25" y="678.75" width="3.75" height="3.75" fill="#c8c8c8" />
<rect x="296.25" y="678.75" width="3.75" height="3.75" fill="#00aadd" />
<rect x="303.75" y="678.75" width="7.5" height="3.75" fill="#00aadd" />
<rect x="337.5" y="678.75" width="3.75" height="3.75" fill="#00aadd" />
<rect x="356.25" y="678.75" width="3.75" height="3.75" fill="#c8c8c8" />
<rect x="360.0" y="678.75" width="7.5" height="3.75" fill="#0f7a50" />
<rect x="378.75" y="678.75" width="3.75" height="3.75" fill="#0f7a50" />
<rect x="382.5" y="678.75" width="3.75" height="3.75" fill="#c8c8c8" />
<rect x="386.25" y="678.75" width="3.75" height="3.75" fill="#0f7a50" />
<rect x="135.0" y="686.25" width="15.0" height="3.75" fill="#0f7a50" />
<rect x="150.0" y="686.25" width="7.5" height="3.75" fill="#e8a030" />
<rect x="262.5" y="686.25" width="18.75" height="3.75" fill="#00ee99" />
<rect x="292.5" y="686.25" width="7.5" height="3.75" fill="#0f7a50" />
<rect x="300.0" y="686.25" width="3.75" height="3.75" fill="#00ee99" />
<rect x="303.75" y="686.25" width="7.5" height="3.75" fill="#00aadd" />
<rect x="318.75" y="686.25" width="7.5" height="3.75" fill="#00ee99" />
<rect x="330.0" y="686.25" width="3.75" height="3.75" fill="#00ee99" />
<rect x="356.25" y="686.25" width="3.75" height="3.75" fill="#00ee99" />
<rect x="382.5" y="686.25" width="3.75" height="3.75" fill="#c8c8c8" />
<rect x="386.25" y="686.25" width="3.75" height="3.75" fill="#0f7a50" />
<rect x="131.25" y="690.0" width="15.0" height="3.75" fill="#0f7a50" />
<rect x="146.25" y="690.0" width="3.75" height="3.75" fill="#00ee99" />
<rect x="247.5" y="690.0" width="7.5" height="3.75" fill="#00aadd" />
<rect x="270.0" y="690.0" width="3.75" height="3.75" fill="#00ee99" />
<rect x="273.75" y="690.0" width="3.75" height="3.75" fill="#00aadd" />
<rect x="277.5" y="690.0" width="3.75" height="3.75" fill="#00ee99" />
<rect x="285.0" y="690.0" width="7.5" height="3.75" fill="#00aadd" />
<rect x="292.5" y="690.0" width="11.25" height="3.75" fill="#0f7a50" />
<rect x="303.75" y="690.0" width="7.5" height="3.75" fill="#00aadd" />
<rect x="318.75" y="690.0" width="3.75" height="3.75" fill="#00ee99" />
<rect x="322.5" y="690.0" width="3.75" height="3.75" fill="#0f7a50" />
<rect x="326.25" y="690.0" width="7.5" height="3.75" fill="#00ee99" />
<rect x="386.25" y="690.0" width="3.75" height="3.75" fill="#0f7a50" />
<rect x="408.75" y="690.0" width="7.5" height="3.75" fill="#0f7a50" />
<rect x="135.0" y="682.5" width="3.75" height="3.75" fill="#0f7a50" />
<rect x="138.75" y="682.5" width="7.5" height="3.75" fill="#c8c8c8" />
<rect x="150.0" y="682.5" width="7.5" height="3.75" fill="#e8a030" />
<rect x="221.25" y="682.5" width="7.5" height="3.75" fill="#00aadd" />
<rect x="266.25" y="682.5" width="3.75" height="3.75" fill="#00ee99" />
<rect x="277.5" y="682.5" width="7.5" height="3.75" fill="#00ee99" />
<rect x="288.75" y="682.5" width="15.0" height="3.75" fill="#00ee99" />
<rect x="303.75" y="682.5" width="7.5" height="3.75" fill="#00aadd" />
<rect x="356.25" y="682.5" width="3.75" height="3.75" fill="#00ee99" />
<rect x="382.5" y="682.5" width="3.75" height="3.75" fill="#c8c8c8" />
<rect x="386.25" y="682.5" width="3.75" height="3.75" fill="#0f7a50" />
<rect x="172.5" y="671.25" width="3.75" height="3.75" fill="#00ee99" />
<rect x="198.75" y="671.25" width="3.75" height="3.75" fill="#c8c8c8" />
<rect x="202.5" y="671.25" width="3.75" height="3.75" fill="#00ee99" />
<rect x="262.5" y="671.25" width="3.75" height="3.75" fill="#00aadd" />
<rect x="266.25" y="671.25" width="7.5" height="3.75" fill="#00ee99" />
<rect x="277.5" y="671.25" width="3.75" height="3.75" fill="#00aadd" />
<rect x="281.25" y="671.25" width="3.75" height="3.75" fill="#00ee99" />
<rect x="296.25" y="671.25" width="3.75" height="3.75" fill="#00ee99" />
<rect x="300.0" y="671.25" width="11.25" height="3.75" fill="#0f7a50" />
<rect x="172.5" y="675.0" width="3.75" height="3.75" fill="#00ee99" />
<rect x="198.75" y="675.0" width="7.5" height="3.75" fill="#00ee99" />
<rect x="232.5" y="675.0" width="3.75" height="3.75" fill="#00ee99" />
<rect x="262.5" y="675.0" width="3.75" height="3.75" fill="#00aadd" />
<rect x="266.25" y="675.0" width="7.5" height="3.75" fill="#00ee99" />
<rect x="277.5" y="675.0" width="3.75" height="3.75" fill="#00ee99" />
<rect x="281.25" y="675.0" width="3.75" height="3.75" fill="#c8c8c8" />
<rect x="296.25" y="675.0" width="3.75" height="3.75" fill="#00ee99" />
<rect x="300.0" y="675.0" width="7.5" height="3.75" fill="#0f7a50" />
<rect x="337.5" y="675.0" width="3.75" height="3.75" fill="#00aadd" />
<rect x="356.25" y="675.0" width="3.75" height="3.75" fill="#c8c8c8" />
<rect x="360.0" y="675.0" width="7.5" height="3.75" fill="#0f7a50" />
<rect x="378.75" y="675.0" width="11.25" height="3.75" fill="#00ee99" />
<rect x="131.25" y="697.5" width="15.0" height="3.75" fill="#0f7a50" />
<rect x="146.25" y="697.5" width="3.75" height="3.75" fill="#00ee99" />
<rect x="273.75" y="697.5" width="3.75" height="3.75" fill="#00aadd" />
<rect x="292.5" y="697.5" width="11.25" height="3.75" fill="#00ee99" />
<rect x="318.75" y="697.5" width="7.5" height="3.75" fill="#00ee99" />
<rect x="330.0" y="697.5" width="3.75" height="3.75" fill="#00ee99" />
<rect x="131.25" y="701.25" width="15.0" height="3.75" fill="#0f7a50" />
<rect x="146.25" y="701.25" width="3.75" height="3.75" fill="#00ee99" />
<rect x="210.0" y="701.25" width="3.75" height="3.75" fill="#c8c8c8" />
<rect x="213.75" y="701.25" width="15.0" height="3.75" fill="#00ee99" />
<rect x="131.25" y="705.0" width="15.0" height="3.75" fill="#0f7a50" />
<rect x="146.25" y="705.0" width="3.75" height="3.75" fill="#00ee99" />
<rect x="213.75" y="705.0" width="11.25" height="3.75" fill="#00ee99" />
<rect x="225.0" y="705.0" width="7.5" height="3.75" fill="#c8c8c8" />
<rect x="251.25" y="705.0" width="11.25" height="3.75" fill="#e8a030" />
<rect x="270.0" y="705.0" width="3.75" height="3.75" fill="#00ee99" />
<rect x="303.75" y="705.0" width="3.75" height="3.75" fill="#0f7a50" />
<rect x="131.25" y="708.75" width="15.0" height="3.75" fill="#0f7a50" />
<rect x="146.25" y="708.75" width="3.75" height="3.75" fill="#00ee99" />
<rect x="217.5" y="708.75" width="7.5" height="3.75" fill="#00ee99" />
<rect x="225.0" y="708.75" width="7.5" height="3.75" fill="#c8c8c8" />
<rect x="236.25" y="708.75" width="7.5" height="3.75" fill="#c8c8c8" />
<rect x="243.75" y="708.75" width="18.75" height="3.75" fill="#e8a030" />
<rect x="266.25" y="708.75" width="7.5" height="3.75" fill="#00ee99" />
<rect x="303.75" y="708.75" width="7.5" height="3.75" fill="#0f7a50" />
<rect x="131.25" y="712.5" width="15.0" height="3.75" fill="#0f7a50" />
<rect x="146.25" y="712.5" width="3.75" height="3.75" fill="#00ee99" />
<rect x="213.75" y="712.5" width="18.75" height="3.75" fill="#00ee99" />
<rect x="236.25" y="712.5" width="7.5" height="3.75" fill="#c8c8c8" />
<rect x="243.75" y="712.5" width="7.5" height="3.75" fill="#e8a030" />
<rect x="266.25" y="712.5" width="7.5" height="3.75" fill="#00ee99" />
<rect x="273.75" y="712.5" width="7.5" height="3.75" fill="#e8a030" />
<rect x="131.25" y="693.75" width="15.0" height="3.75" fill="#0f7a50" />
<rect x="146.25" y="693.75" width="3.75" height="3.75" fill="#00ee99" />
<rect x="270.0" y="693.75" width="3.75" height="3.75" fill="#00ee99" />
<rect x="273.75" y="693.75" width="3.75" height="3.75" fill="#00aadd" />
<rect x="277.5" y="693.75" width="3.75" height="3.75" fill="#00ee99" />
<rect x="285.0" y="693.75" width="7.5" height="3.75" fill="#00aadd" />
<rect x="292.5" y="693.75" width="3.75" height="3.75" fill="#0f7a50" />
<rect x="296.25" y="693.75" width="11.25" height="3.75" fill="#00ee99" />
<rect x="318.75" y="693.75" width="3.75" height="3.75" fill="#00ee99" />
<rect x="322.5" y="693.75" width="7.5" height="3.75" fill="#0f7a50" />
<rect x="330.0" y="693.75" width="3.75" height="3.75" fill="#00ee99" />
<rect x="408.75" y="693.75" width="3.75" height="3.75" fill="#0f7a50" />
<rect x="135.0" y="716.25" width="15.0" height="3.75" fill="#0f7a50" />
<rect x="273.75" y="716.25" width="7.5" height="3.75" fill="#e8a030" />
<rect x="135.0" y="720.0" width="11.25" height="3.75" fill="#0f7a50" />
<rect x="191.25" y="731.25" width="11.25" height="3.75" fill="#00ee99" />
<rect x="277.5" y="731.25" width="3.75" height="3.75" fill="#00ee99" />
<rect x="281.25" y="731.25" width="7.5" height="3.75" fill="#0f7a50" />
<rect x="292.5" y="731.25" width="18.75" height="3.75" fill="#00ee99" />
<rect x="318.75" y="731.25" width="18.75" height="3.75" fill="#0f7a50" />
<rect x="198.75" y="735.0" width="3.75" height="3.75" fill="#00ee99" />
<rect x="247.5" y="735.0" width="3.75" height="3.75" fill="#00ee99" />
<rect x="273.75" y="735.0" width="3.75" height="3.75" fill="#c8c8c8" />
<rect x="277.5" y="735.0" width="7.5" height="3.75" fill="#e8a030" />
<rect x="285.0" y="735.0" width="3.75" height="3.75" fill="#00ee99" />
<rect x="303.75" y="735.0" width="7.5" height="3.75" fill="#c8c8c8" />
<rect x="337.5" y="735.0" width="11.25" height="3.75" fill="#0f7a50" />
<rect x="352.5" y="735.0" width="7.5" height="3.75" fill="#0f7a50" />
<rect x="176.25" y="738.75" width="7.5" height="3.75" fill="#0f7a50" />
<rect x="247.5" y="738.75" width="3.75" height="3.75" fill="#00ee99" />
<rect x="273.75" y="738.75" width="3.75" height="3.75" fill="#c8c8c8" />
<rect x="277.5" y="738.75" width="7.5" height="3.75" fill="#e8a030" />
<rect x="285.0" y="738.75" width="3.75" height="3.75" fill="#00ee99" />
<rect x="288.75" y="738.75" width="22.5" height="3.75" fill="#0f7a50" />
<rect x="326.25" y="738.75" width="11.25" height="3.75" fill="#c8c8c8" />
<rect x="337.5" y="738.75" width="26.25" height="3.75" fill="#0f7a50" />
<rect x="165.0" y="742.5" width="7.5" height="3.75" fill="#00ee99" />
<rect x="176.25" y="742.5" width="7.5" height="3.75" fill="#0f7a50" />
<rect x="210.0" y="742.5" width="18.75" height="3.75" fill="#0f7a50" />
<rect x="232.5" y="742.5" width="7.5" height="3.75" fill="#0f7a50" />
<rect x="243.75" y="742.5" width="3.75" height="3.75" fill="#0f7a50" />
<rect x="251.25" y="742.5" width="7.5" height="3.75" fill="#0f7a50" />
<rect x="277.5" y="742.5" width="3.75" height="3.75" fill="#00ee99" />
<rect x="285.0" y="742.5" width="22.5" height="3.75" fill="#0f7a50" />
<rect x="307.5" y="742.5" width="3.75" height="3.75" fill="#00ee99" />
<rect x="330.0" y="742.5" width="7.5" height="3.75" fill="#c8c8c8" />
<rect x="337.5" y="742.5" width="3.75" height="3.75" fill="#0f7a50" />
<rect x="341.25" y="742.5" width="15.0" height="3.75" fill="#c8c8c8" />
<rect x="356.25" y="742.5" width="3.75" height="3.75" fill="#00ee99" />
<rect x="360.0" y="742.5" width="3.75" height="3.75" fill="#0f7a50" />
<rect x="176.25" y="746.25" width="11.25" height="3.75" fill="#0f7a50" />
<rect x="210.0" y="746.25" width="18.75" height="3.75" fill="#0f7a50" />
<rect x="236.25" y="746.25" width="3.75" height="3.75" fill="#0f7a50" />
<rect x="240.0" y="746.25" width="3.75" height="3.75" fill="#c8c8c8" />
<rect x="243.75" y="746.25" width="3.75" height="3.75" fill="#0f7a50" />
<rect x="247.5" y="746.25" width="15.0" height="3.75" fill="#00ee99" />
<rect x="285.0" y="746.25" width="22.5" height="3.75" fill="#0f7a50" />
<rect x="307.5" y="746.25" width="3.75" height="3.75" fill="#00ee99" />
<rect x="330.0" y="746.25" width="15.0" height="3.75" fill="#0f7a50" />
<rect x="345.0" y="746.25" width="11.25" height="3.75" fill="#c8c8c8" />
<rect x="356.25" y="746.25" width="7.5" height="3.75" fill="#0f7a50" />
<rect x="232.5" y="753.75" width="18.75" height="3.75" fill="#0f7a50" />
<rect x="251.25" y="753.75" width="11.25" height="3.75" fill="#00ee99" />
<rect x="285.0" y="753.75" width="7.5" height="3.75" fill="#0f7a50" />
<rect x="292.5" y="753.75" width="15.0" height="3.75" fill="#c8c8c8" />
<rect x="307.5" y="753.75" width="3.75" height="3.75" fill="#00ee99" />
<rect x="311.25" y="753.75" width="52.5" height="3.75" fill="#0f7a50" />
<rect x="371.25" y="753.75" width="7.5" height="3.75" fill="#0f7a50" />
<rect x="232.5" y="750.0" width="7.5" height="3.75" fill="#0f7a50" />
<rect x="240.0" y="750.0" width="7.5" height="3.75" fill="#c8c8c8" />
<rect x="247.5" y="750.0" width="3.75" height="3.75" fill="#0f7a50" />
<rect x="251.25" y="750.0" width="11.25" height="3.75" fill="#00ee99" />
<rect x="288.75" y="750.0" width="18.75" height="3.75" fill="#0f7a50" />
<rect x="307.5" y="750.0" width="3.75" height="3.75" fill="#00ee99" />
<rect x="330.0" y="750.0" width="11.25" height="3.75" fill="#0f7a50" />
<rect x="341.25" y="750.0" width="15.0" height="3.75" fill="#c8c8c8" />
<rect x="356.25" y="750.0" width="7.5" height="3.75" fill="#0f7a50" />
<rect x="232.5" y="757.5" width="7.5" height="3.75" fill="#0f7a50" />
<rect x="240.0" y="757.5" width="3.75" height="3.75" fill="#00ee99" />
<rect x="243.75" y="757.5" width="3.75" height="3.75" fill="#c8c8c8" />
<rect x="247.5" y="757.5" width="3.75" height="3.75" fill="#0f7a50" />
<rect x="251.25" y="757.5" width="3.75" height="3.75" fill="#c8c8c8" />
<rect x="255.0" y="757.5" width="7.5" height="3.75" fill="#0f7a50" />
<rect x="288.75" y="757.5" width="3.75" height="3.75" fill="#0f7a50" />
<rect x="292.5" y="757.5" width="15.0" height="3.75" fill="#c8c8c8" />
<rect x="307.5" y="757.5" width="3.75" height="3.75" fill="#00ee99" />
<rect x="311.25" y="757.5" width="30.0" height="3.75" fill="#0f7a50" />
<rect x="341.25" y="757.5" width="3.75" height="3.75" fill="#00ee99" />
<rect x="345.0" y="757.5" width="18.75" height="3.75" fill="#0f7a50" />
<rect x="371.25" y="757.5" width="7.5" height="3.75" fill="#0f7a50" />
<rect x="292.5" y="727.5" width="11.25" height="3.75" fill="#c8c8c8" />
<rect x="303.75" y="727.5" width="7.5" height="3.75" fill="#00ee99" />
<rect x="318.75" y="727.5" width="18.75" height="3.75" fill="#0f7a50" />
<rect x="352.5" y="727.5" width="11.25" height="3.75" fill="#00ee99" />
<rect x="236.25" y="761.25" width="3.75" height="3.75" fill="#0f7a50" />
<rect x="240.0" y="761.25" width="3.75" height="3.75" fill="#00ee99" />
<rect x="243.75" y="761.25" width="11.25" height="3.75" fill="#c8c8c8" />
<rect x="255.0" y="761.25" width="7.5" height="3.75" fill="#0f7a50" />
<rect x="296.25" y="761.25" width="11.25" height="3.75" fill="#e8a030" />
<rect x="307.5" y="761.25" width="7.5" height="3.75" fill="#0f7a50" />
<rect x="315.0" y="761.25" width="15.0" height="3.75" fill="#c8c8c8" />
<rect x="330.0" y="761.25" width="3.75" height="3.75" fill="#0f7a50" />
<rect x="333.75" y="761.25" width="3.75" height="3.75" fill="#c8c8c8" />
<rect x="337.5" y="761.25" width="3.75" height="3.75" fill="#0f7a50" />
<rect x="341.25" y="761.25" width="3.75" height="3.75" fill="#00ee99" />
<rect x="345.0" y="761.25" width="18.75" height="3.75" fill="#0f7a50" />
<rect x="232.5" y="765.0" width="7.5" height="3.75" fill="#0f7a50" />
<rect x="240.0" y="765.0" width="3.75" height="3.75" fill="#00ee99" />
<rect x="243.75" y="765.0" width="3.75" height="3.75" fill="#0f7a50" />
<rect x="247.5" y="765.0" width="3.75" height="3.75" fill="#c8c8c8" />
<rect x="251.25" y="765.0" width="22.5" height="3.75" fill="#0f7a50" />
<rect x="281.25" y="765.0" width="11.25" height="3.75" fill="#0f7a50" />
<rect x="292.5" y="765.0" width="3.75" height="3.75" fill="#c8c8c8" />
<rect x="296.25" y="765.0" width="11.25" height="3.75" fill="#e8a030" />
<rect x="307.5" y="765.0" width="7.5" height="3.75" fill="#00ee99" />
<rect x="315.0" y="765.0" width="3.75" height="3.75" fill="#0f7a50" />
<rect x="318.75" y="765.0" width="26.25" height="3.75" fill="#c8c8c8" />
<rect x="345.0" y="765.0" width="18.75" height="3.75" fill="#0f7a50" />
<rect x="232.5" y="768.75" width="3.75" height="3.75" fill="#0f7a50" />
<rect x="236.25" y="768.75" width="3.75" height="3.75" fill="#00ee99" />
<rect x="240.0" y="768.75" width="7.5" height="3.75" fill="#0f7a50" />
<rect x="251.25" y="768.75" width="11.25" height="3.75" fill="#0f7a50" />
<rect x="262.5" y="768.75" width="7.5" height="3.75" fill="#c8c8c8" />
<rect x="270.0" y="768.75" width="22.5" height="3.75" fill="#0f7a50" />
<rect x="292.5" y="768.75" width="7.5" height="3.75" fill="#c8c8c8" />
<rect x="300.0" y="768.75" width="3.75" height="3.75" fill="#e8a030" />
<rect x="303.75" y="768.75" width="3.75" height="3.75" fill="#0f7a50" />
<rect x="307.5" y="768.75" width="7.5" height="3.75" fill="#00ee99" />
<rect x="315.0" y="768.75" width="7.5" height="3.75" fill="#c8c8c8" />
<rect x="322.5" y="768.75" width="7.5" height="3.75" fill="#e8a030" />
<rect x="330.0" y="768.75" width="15.0" height="3.75" fill="#c8c8c8" />
<rect x="217.5" y="772.5" width="7.5" height="3.75" fill="#0f7a50" />
<rect x="236.25" y="772.5" width="7.5" height="3.75" fill="#00ee99" />
<rect x="255.0" y="772.5" width="7.5" height="3.75" fill="#0f7a50" />
<rect x="262.5" y="772.5" width="7.5" height="3.75" fill="#c8c8c8" />
<rect x="270.0" y="772.5" width="22.5" height="3.75" fill="#0f7a50" />
<rect x="303.75" y="772.5" width="3.75" height="3.75" fill="#0f7a50" />
<rect x="307.5" y="772.5" width="7.5" height="3.75" fill="#00ee99" />
<rect x="315.0" y="772.5" width="7.5" height="3.75" fill="#c8c8c8" />
<rect x="322.5" y="772.5" width="7.5" height="3.75" fill="#e8a030" />
<rect x="330.0" y="772.5" width="15.0" height="3.75" fill="#c8c8c8" />
<rect x="217.5" y="776.25" width="7.5" height="3.75" fill="#0f7a50" />
<rect x="255.0" y="776.25" width="7.5" height="3.75" fill="#0f7a50" />
<rect x="262.5" y="776.25" width="7.5" height="3.75" fill="#c8c8c8" />
<rect x="270.0" y="776.25" width="22.5" height="3.75" fill="#0f7a50" />
<rect x="307.5" y="776.25" width="15.0" height="3.75" fill="#00ee99" />
<rect x="322.5" y="776.25" width="3.75" height="3.75" fill="#c8c8c8" />
<rect x="326.25" y="776.25" width="7.5" height="3.75" fill="#0f7a50" />
<rect x="333.75" y="776.25" width="7.5" height="3.75" fill="#c8c8c8" />
<rect x="217.5" y="780.0" width="11.25" height="3.75" fill="#0f7a50" />
<rect x="255.0" y="780.0" width="37.5" height="3.75" fill="#0f7a50" />
<rect x="307.5" y="780.0" width="15.0" height="3.75" fill="#00ee99" />
<rect x="322.5" y="780.0" width="18.75" height="3.75" fill="#0f7a50" />
<rect x="292.5" y="723.75" width="11.25" height="3.75" fill="#c8c8c8" />
<rect x="303.75" y="723.75" width="3.75" height="3.75" fill="#00ee99" />
<rect x="352.5" y="723.75" width="7.5" height="3.75" fill="#c8c8c8" />
<rect x="360.0" y="723.75" width="3.75" height="3.75" fill="#00ee99" />
<rect x="221.25" y="783.75" width="3.75" height="3.75" fill="#0f7a50" />
<rect x="255.0" y="783.75" width="18.75" height="3.75" fill="#0f7a50" />
<rect x="273.75" y="783.75" width="7.5" height="3.75" fill="#c8c8c8" />
<rect x="281.25" y="783.75" width="11.25" height="3.75" fill="#0f7a50" />
<rect x="255.0" y="787.5" width="18.75" height="3.75" fill="#0f7a50" />
<rect x="273.75" y="787.5" width="7.5" height="3.75" fill="#c8c8c8" />
<rect x="281.25" y="787.5" width="11.25" height="3.75" fill="#0f7a50" />
<rect x="258.75" y="791.25" width="3.75" height="3.75" fill="#0f7a50" />
<rect x="270.0" y="791.25" width="3.75" height="3.75" fill="#0f7a50" />
<rect x="273.75" y="791.25" width="7.5" height="3.75" fill="#c8c8c8" />
<rect x="285.0" y="791.25" width="7.5" height="3.75" fill="#0f7a50" />
<rect x="170" y="522" width="5" height="5" fill="#00ee99" />
<rect x="189" y="516" width="5" height="4" fill="#0f7a50" />
<rect x="301" y="534" width="4" height="4" fill="#00ee99" />
<rect x="339.5" y="529" width="3.0" height="5" fill="#c8c8c8" />
<rect x="316" y="545" width="4" height="4" fill="#00ee99" />
<rect x="327" y="536" width="4" height="4" fill="#00ee99" />
<rect x="266" y="548" width="5" height="3" fill="#e8a030" />
<rect x="280" y="552" width="4" height="3" fill="#e8a030" />
<rect x="294" y="549" width="5" height="4.6" fill="#c8c8c8" />
<rect x="296" y="550" width="3" height="3" fill="#e8a030" />
<rect x="311" y="600" width="5" height="5" fill="#00ee99" />
<rect x="318" y="568.5" width="5" height="5.0" fill="#eebb22" />
<rect x="333" y="557" width="4.8" height="3.8" fill="#00ee99" />
<rect x="342.5" y="565.5" width="3.0" height="5.0" fill="#c8c8c8" />
<rect x="305" y="587" width="2.5" height="4" fill="#c8c8c8" />
<rect x="360" y="642" width="3" height="3" fill="#e8a030" />
<rect x="258" y="596" width="3" height="4" fill="#00ee99" />
<rect x="289" y="596" width="4" height="5" fill="#1166ee" />
<rect x="253" y="603" width="4" height="3" fill="#00ee99" />
<rect x="241" y="559.5" width="3" height="1.5" fill="#00aadd" />
<rect x="234" y="582" width="3" height="2" fill="#00aadd" />
<rect x="207" y="617" width="3" height="3" fill="#00aadd" />
<rect x="230" y="615" width="4" height="5" fill="#00ee99" />
<rect x="216" y="617" width="4" height="4" fill="#00aadd" />
<rect x="313" y="619" width="3" height="5" fill="#00ee99" />
<rect x="338" y="622" width="4" height="5" fill="#00ee99" />
<rect x="341" y="625" width="3" height="3" fill="#00aadd" />
<rect x="207" y="650" width="5" height="5" fill="#c8c8c8" />
<rect x="208" y="651" width="4" height="3" fill="#e8a030" />
<rect x="250" y="697" width="4" height="3" fill="#00aadd" />
<rect x="283" y="700" width="5" height="3" fill="#00aadd" />
<rect x="308" y="655" width="3" height="4" fill="#00aadd" />
<rect x="252" y="711" width="3" height="5" fill="#00ee99" />
<rect x="308" y="706" width="3" height="4" fill="#00ee99" />
<rect x="283" y="762" width="5" height="4" fill="#e8a030" />
<rect x="316" y="729" width="4" height="5" fill="#00ee99" />
<rect x="330" y="732" width="4" height="4" fill="#00ee99" />
<rect x="357" y="726" width="5" height="4" fill="#0f7a50" />
<rect x="374" y="757" width="3" height="3" fill="#00ee99" />
<rect x="257" y="779" width="5" height="4" fill="#00ee99" />
<rect x="241" y="744" width="5" height="4" fill="#e8a030" />
<rect x="239" y="772" width="4" height="4" fill="#000" />
<rect x="243" y="737" width="5" height="4" fill="#00ee99" />
<rect x="266" y="752" width="3" height="3" fill="#00ee99" />
<rect x="226" y="746" width="4" height="5" fill="#00ee99" />
<rect x="186" y="741" width="3" height="4" fill="#00ee99" />
<rect x="191" y="733" width="2" height="5" fill="#00ee99" />
<rect x="244" y="790" width="5" height="4" fill="#0f7a50" />
<rect x="269.4" y="649.4" width="1" height="2" fill="#1166ee" />
<rect x="259.1" y="630.1" width="1" height="1" fill="#5511dd" />
<rect x="284.4" y="643.3" width="2" height="1" fill="#5511dd" />
<rect x="278.2" y="633.8" width="1" height="1" fill="#1166ee" />
<rect x="244.7" y="623.9" width="1" height="2" fill="#1166ee" />
<rect x="252.4" y="650.1" width="1" height="2" fill="#5511dd" />
<rect x="272.6" y="637.5" width="1" height="2" fill="#5511dd" />
<rect x="281.1" y="642.0" width="1" height="1" fill="#1166ee" />
<rect x="261.1" y="626.4" width="2" height="3" fill="#3322ee" />
<rect x="275.2" y="638.8" width="1" height="1.5" fill="#5511dd" />
<rect x="280.6" y="641.1" width="2" height="2" fill="#3322ee" />
<rect x="261.7" y="628.4" width="1" height="3" fill="#1166ee" />
<rect x="285.9" y="654.3" width="1" height="1" fill="#00aadd" />
<rect x="278.4" y="610.6" width="1.5" height="2" fill="#5511dd" />
<rect x="269.6" y="623.7" width="1" height="1" fill="#00aadd" />
<rect x="286.6" y="634.9" width="1" height="1" fill="#00aadd" />
<rect x="274.6" y="631.6" width="2" height="2" fill="#1166ee" />
<rect x="271.4" y="621.3" width="1.5" height="1" fill="#1166ee" />
<rect x="288.1" y="634.1" width="1" height="1.5" fill="#00aadd" />
<rect x="277.5" y="623.0" width="1" height="3" fill="#5511dd" />
<rect x="272.0" y="641.1" width="2" height="2" fill="#00aadd" />
<rect x="279.0" y="635.6" width="1.5" height="3" fill="#00aadd" />
<rect x="281.9" y="638.0" width="1" height="1" fill="#5511dd" />
<rect x="281.9" y="650.0" width="1" height="1" fill="#5511dd" />
<rect x="265.0" y="639.4" width="1" height="3" fill="#1166ee" />
<rect x="269.0" y="637.2" width="1.5" height="1.5" fill="#5511dd" />
<rect x="267.4" y="620.0" width="1" height="3" fill="#1166ee" />
<rect x="277.2" y="637.4" width="2" height="3" fill="#1166ee" />
<rect x="261.0" y="648.1" width="1" height="1" fill="#1166ee" />
<rect x="289.2" y="637.3" width="1" height="1" fill="#00aadd" />
<rect x="275.3" y="638.7" width="1" height="2" fill="#5511dd" />
<rect x="275.4" y="638.4" width="1" height="3" fill="#1166ee" />
<rect x="275.6" y="638.7" width="2" height="1" fill="#3322ee" />
<rect x="286.6" y="647.3" width="2" height="3" fill="#00aadd" />
<rect x="269.2" y="639.1" width="1.5" height="3" fill="#3322ee" />
<rect x="277.3" y="635.5" width="1" height="1.5" fill="#5511dd" />
<rect x="284.0" y="636.1" width="1" height="2" fill="#5511dd" />
<rect x="277.1" y="638.3" width="1.5" height="2" fill="#1166ee" />
<rect x="281.4" y="635.1" width="1.5" height="1.5" fill="#5511dd" />
<rect x="268.7" y="633.2" width="1" height="3" fill="#5511dd" />
<rect x="275.3" y="636.0" width="1" height="1" fill="#3322ee" />
<rect x="280.3" y="621.8" width="1.5" height="1.5" fill="#00aadd" />
<rect x="269.6" y="624.4" width="1.5" height="2" fill="#1166ee" />
<rect x="279.6" y="640.6" width="1" height="3" fill="#1166ee" />
<rect x="277.6" y="643.9" width="1" height="3" fill="#5511dd" />
<rect x="293.6" y="628.1" width="1" height="1" fill="#3322ee" />
<rect x="280.0" y="635.9" width="1" height="3" fill="#00aadd" />
<rect x="281.9" y="615.7" width="1" height="3" fill="#3322ee" />
<rect x="275.2" y="638.6" width="1" height="1.5" fill="#5511dd" />
<rect x="282.1" y="639.5" width="2" height="1.5" fill="#5511dd" />
<rect x="264.1" y="629.8" width="1" height="1.5" fill="#3322ee" />
<rect x="285.7" y="639.7" width="1" height="1.5" fill="#1166ee" />
<rect x="256.5" y="646.0" width="1" height="2" fill="#5511dd" />
<rect x="280.5" y="657.4" width="1" height="2" fill="#5511dd" />
<rect x="275.1" y="645.2" width="1.5" height="3" fill="#1166ee" />
<rect x="273.3" y="635.3" width="2" height="1.5" fill="#5511dd" />
<rect x="272.5" y="638.0" width="1" height="1" fill="#00aadd" />
<rect x="275.6" y="638.1" width="1" height="1.5" fill="#5511dd" />
<rect x="272.4" y="639.0" width="2" height="1" fill="#3322ee" />
<rect x="290.5" y="626.4" width="1" height="1.5" fill="#1166ee" />
<rect x="275.1" y="640.9" width="1" height="1" fill="#5511dd" />
<rect x="257.8" y="644.4" width="1" height="2" fill="#5511dd" />
<rect x="258.4" y="643.2" width="1.5" height="1.5" fill="#5511dd" />
<rect x="277.5" y="635.6" width="2" height="1" fill="#5511dd" />
<rect x="268.0" y="643.9" width="1" height="1.5" fill="#00aadd" />
<rect x="264.9" y="621.3" width="1" height="2" fill="#1166ee" />
<rect x="294.8" y="660.4" width="1" height="3" fill="#5511dd" />
<rect x="296.6" y="621.7" width="1" height="1.5" fill="#5511dd" />
<rect x="271.1" y="624.4" width="1" height="2" fill="#00aadd" />
<rect x="275.2" y="639.0" width="1.5" height="1" fill="#1166ee" />
<rect x="246.5" y="680.7" width="3" height="3" fill="#00aadd" />
<rect x="230.9" y="633.9" width="2" height="2" fill="#00aadd" />
<rect x="304.9" y="632.7" width="3" height="2" fill="#1166ee" />
<rect x="302.8" y="618.1" width="3" height="4" fill="#00aadd" />
<rect x="289.4" y="602.1" width="4" height="4" fill="#00aadd" />
<rect x="217.5" y="612.4" width="3" height="2" fill="#00aadd" />
<rect x="283.7" y="603.6" width="3" height="2" fill="#00aadd" />
<rect x="228.9" y="589.4" width="4" height="2" fill="#00aadd" />
<rect x="335.1" y="666.4" width="2" height="3" fill="#00ee99" />
<rect x="320.1" y="636.8" width="4" height="2" fill="#1166ee" />
<rect x="331.6" y="655.0" width="2" height="3" fill="#00aadd" />
<rect x="308.1" y="650.2" width="4" height="3" fill="#1166ee" />
<rect x="235.5" y="631.2" width="4" height="4" fill="#00ee99" />
<rect x="291.9" y="678.3" width="3" height="2" fill="#00aadd" />
<rect x="334.7" y="644.5" width="4" height="3" fill="#00aadd" />
<rect x="273.8" y="687.5" width="4" height="3" fill="#00ee99" />
<rect x="205.6" y="618.7" width="4" height="2" fill="#1166ee" />
<rect x="316.3" y="633.6" width="3" height="3" fill="#00aadd" />
<rect x="339.4" y="630.9" width="2" height="4" fill="#00aadd" />
<rect x="270.2" y="598.6" width="2" height="2" fill="#00aadd" />
<rect x="249.2" y="599.0" width="4" height="2" fill="#1166ee" />
<rect x="261.9" y="610.3" width="2" height="3" fill="#00aadd" />
<rect x="234.4" y="652.0" width="4" height="3" fill="#1166ee" />
<rect x="275.1" y="711.8" width="2" height="3" fill="#1166ee" />
<rect x="290.4" y="678.4" width="3" height="3" fill="#00aadd" />
<rect x="235.1" y="637.8" width="2" height="3" fill="#00aadd" />
<rect x="286.7" y="606.8" width="3" height="2" fill="#00aadd" />
<rect x="254.8" y="693.3" width="4" height="4" fill="#00aadd" />
<rect x="293.8" y="610.4" width="3" height="4" fill="#00ee99" />
<rect x="307.4" y="635.1" width="2" height="4" fill="#00aadd" />
<rect x="317.2" y="602.4" width="4" height="4" fill="#00aadd" />
<rect x="212.3" y="610.9" width="4" height="4" fill="#00aadd" />
<rect x="290.7" y="579.8" width="2" height="2" fill="#00aadd" />
<rect x="328.5" y="653.6" width="3" height="3" fill="#00aadd" />
<rect x="218.8" y="617.8" width="3" height="3" fill="#00aadd" />
<rect x="338.0" y="639.9" width="4" height="4" fill="#00aadd" />
<rect x="329.8" y="663.8" width="2" height="3" fill="#1166ee" />
<rect x="278.6" y="701.8" width="4" height="4" fill="#00aadd" />
<rect x="323.1" y="630.7" width="2" height="3" fill="#00ee99" />
<rect x="307.6" y="616.4" width="4" height="4" fill="#00aadd" />
</g>
<g fill="none" stroke="#fff" stroke-width="1">
<circle cx="272.5" cy="630.5" r="27.3"/>
<circle cx="272.5" cy="630.5" r="54.6"/>
<circle cx="272.5" cy="630.5" r="81.9"/>
<circle cx="272.5" cy="630.5" r="109.2"/>
<circle cx="272.5" cy="630.5" r="136.5"/>
<circle cx="272.5" cy="630.5" r="163.8"/>
<circle cx="272.5" cy="630.5" r="191.1"/>
<circle cx="272.5" cy="630.5" r="218.4"/>
<path d="M55 630.5H487.5M272.5 458V795"/>
<path d="M291.8 649.8L427.4 785.4"/>
<path d="M291.8 611.2L427.4 475.6"/>
<path d="M253.2 649.8L117.6 785.4"/>
<path d="M253.2 611.2L117.6 475.6"/>
</g>
<path d="M297.8 604L315.6 589" stroke="#fff" stroke-width="3"/>
<circle cx="271.3" cy="616" r="7" fill="none" stroke="#ff9900" stroke-width="1"/>
</g>
<circle cx="242.7" cy="464.5" r="7.3" fill="none" stroke="#ff9900" stroke-width="1"/>
<path d="M267.5 463.5h10M272.5 457v11" stroke="#fff890" stroke-width="1"/>
<text x="258.5" y="630.5" font-size="6" fill="#ffaa00" font-family='"Liberation Sans", sans-serif' textLength="26" lengthAdjust="spacing" style="white-space:pre">b&lt;-125-5</text>
<text x="231.5" y="479.5" font-size="6" fill="#ffaa00" font-family='"Liberation Sans", sans-serif' textLength="24" lengthAdjust="spacing" style="white-space:pre">whoi-met</text>
<text x="266" y="807.5" font-size="5.5" fill="#fff890" font-family='"Liberation Sans", sans-serif' textLength="11" lengthAdjust="spacing" style="white-space:pre">-125</text>
<text x="41" y="463" font-size="5.5" fill="#fff890" font-family='"Liberation Sans", sans-serif' textLength="6" lengthAdjust="spacing" style="white-space:pre">10</text>
<text x="15" y="448" font-size="24.5" fill="#ffff00" font-family='"Liberation Sans", sans-serif' textLength="243.5" lengthAdjust="spacing" style="white-space:pre">22-aug-1997,19:05:00</text>
<text x="274" y="448" font-size="24.5" fill="#fff" font-family='"Liberation Sans", sans-serif' textLength="256" lengthAdjust="spacing" style="white-space:pre">maxdz plot.  maxdz plot.</text>
<text x="381" y="860.5" font-size="24" fill="#fff" font-family='"Liberation Sans", sans-serif' textLength="181.5" lengthAdjust="spacing" style="white-space:pre">Alt: 0.50 km MSL</text>
<text x="490" y="469.5" font-size="17.5" fill="#fff" font-family='"Liberation Sans", sans-serif' textLength="51.5" lengthAdjust="spacing" stroke="#fff" stroke-width="0.3" style="white-space:pre">maxdz</text>
<rect x="490" y="485" width="10" height="8" fill="#ff8080" shape-rendering="crispEdges"/>
<rect x="490" y="493" width="10" height="8" fill="#ff9999" shape-rendering="crispEdges"/>
<rect x="490" y="501" width="10" height="8" fill="#ffaa66" shape-rendering="crispEdges"/>
<rect x="490" y="509" width="10" height="8" fill="#ffd8b0" shape-rendering="crispEdges"/>
<rect x="490" y="517" width="10" height="8" fill="#ffdd11" shape-rendering="crispEdges"/>
<rect x="490" y="525" width="10" height="8" fill="#eebb22" shape-rendering="crispEdges"/>
<rect x="490" y="533" width="10" height="8" fill="#dd9933" shape-rendering="crispEdges"/>
<rect x="490" y="541" width="10" height="8" fill="#c8c8c8" shape-rendering="crispEdges"/>
<rect x="490" y="549" width="10" height="8" fill="#007744" shape-rendering="crispEdges"/>
<rect x="490" y="557" width="10" height="8" fill="#00ee99" shape-rendering="crispEdges"/>
<rect x="490" y="565" width="10" height="8" fill="#00aadd" shape-rendering="crispEdges"/>
<rect x="490" y="573" width="10" height="8" fill="#0066dd" shape-rendering="crispEdges"/>
<rect x="490" y="581" width="10" height="8" fill="#1133dd" shape-rendering="crispEdges"/>
<rect x="490" y="589" width="10" height="8" fill="#4411dd" shape-rendering="crispEdges"/>
<rect x="490" y="597" width="10" height="8" fill="#7700ee" shape-rendering="crispEdges"/>
<rect x="490" y="605" width="10" height="8" fill="#9900ff" shape-rendering="crispEdges"/>
<text x="505.5" y="492" font-size="17.5" fill="#fff" font-family='"Liberation Sans", sans-serif' textLength="33.5" lengthAdjust="spacing" stroke="#fff" stroke-width="0.3" style="white-space:pre">65.0</text>
<text x="505.5" y="516" font-size="17.5" fill="#fff" font-family='"Liberation Sans", sans-serif' textLength="33.5" lengthAdjust="spacing" stroke="#fff" stroke-width="0.3" style="white-space:pre">50.0</text>
<text x="505.5" y="540" font-size="17.5" fill="#fff" font-family='"Liberation Sans", sans-serif' textLength="33.5" lengthAdjust="spacing" stroke="#fff" stroke-width="0.3" style="white-space:pre">35.0</text>
<text x="505.5" y="564" font-size="17.5" fill="#fff" font-family='"Liberation Sans", sans-serif' textLength="33.5" lengthAdjust="spacing" stroke="#fff" stroke-width="0.3" style="white-space:pre">20.0</text>
<text x="505.5" y="588" font-size="17.5" fill="#fff" font-family='"Liberation Sans", sans-serif' textLength="24" lengthAdjust="spacing" stroke="#fff" stroke-width="0.3" style="white-space:pre">5.0</text>
<text x="505.5" y="612" font-size="17.5" fill="#fff" font-family='"Liberation Sans", sans-serif' textLength="44.5" lengthAdjust="spacing" stroke="#fff" stroke-width="0.3" style="white-space:pre">-10.0</text>
<text x="490" y="650.5" font-size="17.5" fill="#fff" font-family='"Liberation Sans", sans-serif' textLength="51.5" lengthAdjust="spacing" stroke="#fff" stroke-width="0.3" style="white-space:pre">maxdz</text>
<rect x="490" y="666" width="10" height="8" fill="#ff8080" shape-rendering="crispEdges"/>
<rect x="490" y="674" width="10" height="8" fill="#ff9999" shape-rendering="crispEdges"/>
<rect x="490" y="682" width="10" height="8" fill="#ffaa66" shape-rendering="crispEdges"/>
<rect x="490" y="690" width="10" height="8" fill="#ffd8b0" shape-rendering="crispEdges"/>
<rect x="490" y="698" width="10" height="8" fill="#ffdd11" shape-rendering="crispEdges"/>
<rect x="490" y="706" width="10" height="8" fill="#eebb22" shape-rendering="crispEdges"/>
<rect x="490" y="714" width="10" height="8" fill="#dd9933" shape-rendering="crispEdges"/>
<rect x="490" y="722" width="10" height="8" fill="#c8c8c8" shape-rendering="crispEdges"/>
<rect x="490" y="730" width="10" height="8" fill="#007744" shape-rendering="crispEdges"/>
<rect x="490" y="738" width="10" height="8" fill="#00ee99" shape-rendering="crispEdges"/>
<rect x="490" y="746" width="10" height="8" fill="#00aadd" shape-rendering="crispEdges"/>
<rect x="490" y="754" width="10" height="8" fill="#0066dd" shape-rendering="crispEdges"/>
<rect x="490" y="762" width="10" height="8" fill="#1133dd" shape-rendering="crispEdges"/>
<rect x="490" y="770" width="10" height="8" fill="#4411dd" shape-rendering="crispEdges"/>
<rect x="490" y="778" width="10" height="8" fill="#7700ee" shape-rendering="crispEdges"/>
<rect x="490" y="786" width="10" height="8" fill="#9900ff" shape-rendering="crispEdges"/>
<text x="505.5" y="673" font-size="17.5" fill="#fff" font-family='"Liberation Sans", sans-serif' textLength="33.5" lengthAdjust="spacing" stroke="#fff" stroke-width="0.3" style="white-space:pre">65.0</text>
<text x="505.5" y="697" font-size="17.5" fill="#fff" font-family='"Liberation Sans", sans-serif' textLength="33.5" lengthAdjust="spacing" stroke="#fff" stroke-width="0.3" style="white-space:pre">50.0</text>
<text x="505.5" y="721" font-size="17.5" fill="#fff" font-family='"Liberation Sans", sans-serif' textLength="33.5" lengthAdjust="spacing" stroke="#fff" stroke-width="0.3" style="white-space:pre">35.0</text>
<text x="505.5" y="745" font-size="17.5" fill="#fff" font-family='"Liberation Sans", sans-serif' textLength="33.5" lengthAdjust="spacing" stroke="#fff" stroke-width="0.3" style="white-space:pre">20.0</text>
<text x="505.5" y="769" font-size="17.5" fill="#fff" font-family='"Liberation Sans", sans-serif' textLength="24" lengthAdjust="spacing" stroke="#fff" stroke-width="0.3" style="white-space:pre">5.0</text>
<text x="505.5" y="793" font-size="17.5" fill="#fff" font-family='"Liberation Sans", sans-serif' textLength="44.5" lengthAdjust="spacing" stroke="#fff" stroke-width="0.3" style="white-space:pre">-10.0</text>
<rect x="10.5" y="821.5" width="45" height="47" fill="#191970" stroke="#9a9a9a" stroke-width="1"/>
<g transform="translate(10,821)">
<path d="M6.5 12C9 8 14 6.5 20 8.5S32 13 37.5 9L6 39.5C10 36 15 35 21 37.5S33 41.5 38.5 35.5" fill="none" stroke="#ffff00" stroke-width="1.7" stroke-linejoin="miter"/>
<path d="M37.5 9L6 39.5" stroke="#ffff00" stroke-width="2.1"/>
</g>
<rect x="57.5" y="821.5" width="45" height="47" fill="#6e6e6e" stroke="#9a9a9a" stroke-width="1"/>
<g transform="translate(57,821)">
<text x="3" y="14.3" font-size="14.5" fill="#e0e0e0" font-family='"Liberation Sans", sans-serif' font-weight="bold" textLength="30" lengthAdjust="spacingAndGlyphs" style="white-space:pre">GOES</text>
<path d="M3 17h8c8 2 12 10 13 18v9H3z" fill="url(#dithw)"/>
<path d="M13 27c3-4 7-3 9 2l1 6c-4 0-7-1-10-3z" fill="#e0e0e0"/>
<path d="M3 44v-6c2-2 7-2 8 0v6z" fill="#e0e0e0"/>
<path d="M4 24l4 6l-3 3z" fill="#e0e0e0"/>
<path d="M22 24L38 21M24 34L38 23" stroke="#e0e0e0" stroke-width="1" stroke-dasharray="1 1.5" fill="none"/>
<path d="M40.5 18.5l3 3l-3 3l-3-3z" fill="#e0e0e0"/>
<text x="25" y="44" font-size="11" fill="#e0e0e0" font-family='"Liberation Sans", sans-serif' textLength="15.5" lengthAdjust="spacing" style="white-space:pre">.IR</text>
<rect x="19" y="17" width="1" height="1" fill="#e0e0e0" />
<rect x="24" y="20" width="1" height="1" fill="#e0e0e0" />
<rect x="30" y="18" width="1" height="1" fill="#e0e0e0" />
<rect x="33" y="26" width="1" height="1" fill="#e0e0e0" />
<rect x="38" y="30" width="1" height="1" fill="#e0e0e0" />
<rect x="31" y="32" width="1" height="1" fill="#e0e0e0" />
</g>
<rect x="104.5" y="821.5" width="45" height="47" fill="#191970" stroke="#9a9a9a" stroke-width="1"/>
<g transform="translate(104,821)">
<g transform="translate(0,0) scale(1.0)">
<path d="M5 9C7 20 16 29 27.5 30.2" fill="none" stroke="#ffff00" stroke-width="1.8"/>
<path d="M12 20.8h4v3.4" fill="none" stroke="#ffff00" stroke-width="1"/>
<path d="M12.2 24h2.2l1 11.2v4.3h-6.8v-4.3h1.8z" fill="#ffff00"/>
</g>
<text x="50.69 50.69 50.69" y="19.00 31.60 44.20" font-size="13.5" fill="#ffff00" text-anchor="middle" transform="scale(0.72,1)" font-family='"Liberation Sans", sans-serif'>SUR</text>
</g>
<rect x="151.5" y="821.5" width="45" height="47" fill="#191970" stroke="#9a9a9a" stroke-width="1"/>
<g transform="translate(151,821)">
<g fill="none" stroke="#ffff00" stroke-width="1.2" shape-rendering="crispEdges">
<rect x="5.5" y="5.5" width="36" height="37.5"/>
<path d="M14.5 5.5v37.5M5.5 14.9h36"/>
<path d="M23.5 5.5v37.5M5.5 24.3h36"/>
<path d="M32.5 5.5v37.5M5.5 33.7h36"/>
</g>
<g transform="translate(7,2) scale(0.95)">
<path d="M5 9C7 20 16 29 27.5 30.2" fill="none" stroke="#ffff00" stroke-width="1.8"/>
<path d="M12 20.8h4v3.4" fill="none" stroke="#ffff00" stroke-width="1"/>
<path d="M12.2 24h2.2l1 11.2v4.3h-6.8v-4.3h1.8z" fill="#ffff00"/>
</g>
</g>
<rect x="198.5" y="821.5" width="13.5" height="47" fill="#191970" stroke="#9a9a9a" stroke-width="1"/>
<g transform="translate(198,821)">
<text x="7.20 7.20 7.20 7.20 7.20 7.20" y="11.50 17.60 23.70 29.80 35.90 42.00" font-size="6.5" fill="#ffff00" text-anchor="middle" font-weight="bold" font-family='"Liberation Sans", sans-serif'>BOUNDS</text>
</g>
<rect x="213.5" y="845.5" width="21" height="23" fill="#191970" stroke="#9a9a9a" stroke-width="1"/>
<g transform="translate(213,845)">
<g fill="none" stroke="#ffff00" stroke-width="1" shape-rendering="crispEdges"><rect x="3" y="4" width="16" height="16"/><path d="M8.3 4v16M13.7 4v16M3 9.3h16M3 14.7h16"/></g>
</g>
<rect x="236.5" y="821.5" width="20" height="47" fill="#191970" stroke="#9a9a9a" stroke-width="1"/>
<g transform="translate(236,821)">
<path d="M3 5l5 1l-1 5l-3 4l-1-4l1-3zM10 7l4-2l3 1l-2 3l3 3l-2 4l-3-5l-3 1z" fill="#ffff00"/>
<path d="M15 4l4-1v2z" fill="#ffff00"/>
<text x="10.50 10.50 10.50" y="24.00 32.00 40.00" font-size="9" fill="#ffff00" text-anchor="middle" font-family='"Liberation Sans", sans-serif'>MAP</text>
</g>
<rect x="258.5" y="821.5" width="20" height="47" fill="#191970" stroke="#9a9a9a" stroke-width="1"/>
<g transform="translate(258,821)">
<g fill="none" stroke="#ffff00" stroke-width="1" transform="translate(0,-5.83) scale(1,1.25)">
<circle cx="10.3" cy="23.3" r="7.6"/><circle cx="10.3" cy="23.3" r="4.7"/><circle cx="10.3" cy="23.3" r="2.1"/>
<path d="M12.4 23.3L17.9 23.3"/>
<path d="M11.8 24.8L15.7 28.7"/>
<path d="M10.3 25.4L10.3 30.9"/>
<path d="M8.8 24.8L4.9 28.7"/>
<path d="M8.2 23.3L2.7 23.3"/>
<path d="M8.8 21.8L4.9 17.9"/>
<path d="M10.3 21.2L10.3 15.7"/>
<path d="M11.8 21.8L15.7 17.9"/>
</g>
</g>
<rect x="281.0" y="845.5" width="20.5" height="23" fill="#191970" stroke="#9a9a9a" stroke-width="1"/>
<g transform="translate(280.5,845)">
<circle cx="11" cy="12" r="6.5" fill="none" stroke="#ffff00" stroke-width="1.1"/>
</g>
<rect x="303.5" y="821.5" width="45" height="47" fill="#6e6e6e" stroke="#9a9a9a" stroke-width="1"/>
<g transform="translate(303,821)">
<g transform="translate(0,-1)" fill="none" stroke="#e0e0e0" stroke-width="1.2">
<path d="M6 32.5h33l-3 6h-28z"/>
<path d="M8.5 32v-9h4l2.5 9"/>
<circle cx="22" cy="23.5" r="3.2"/><path d="M21 26.7v6M23 26.7v6"/>
<path d="M33.5 15v17.5"/>
<path d="M2.5 44.5v-5l2 2l2.5-3l2.5 3l2.5-3l2.5 3l2.5-3l2.5 3l2.5-3l2.5 3l2.5-3l2.5 3l2.5-3l2.5 3l2.5-3l2.5 3l2-2v5z" fill="#e0e0e0" stroke="none"/>
</g>
</g>
<rect x="573" y="771" width="508" height="102" fill="#000" />
<rect x="573.5" y="771.5" width="507" height="101" fill="none" stroke="#000" stroke-width="1" shape-rendering="crispEdges"/>
<rect x="573.5" y="771.5" width="507" height="101" fill="none" stroke="#fff" stroke-width="1" stroke-dasharray="1 1" shape-rendering="crispEdges"/>
<rect x="576.75" y="775.75" width="45" height="23" fill="none" stroke="#fff" stroke-width="1.5"/>
<text x="582" y="791.5" font-size="13" fill="#fff" font-family='"Liberation Sans", sans-serif' textLength="34" lengthAdjust="spacingAndGlyphs" style="white-space:pre">Dismiss</text>
<line x1="573" y1="801" x2="1075" y2="801" stroke="#fff" stroke-width="1.5" />
<line x1="573" y1="867" x2="1075" y2="867" stroke="#fff" stroke-width="1.5" />
<line x1="1074.5" y1="801" x2="1074.5" y2="867" stroke="#fff" stroke-width="1.5" />
<text x="574.5" y="817" font-size="15" fill="#fff" font-family='"Liberation Mono", monospace' font-weight="bold" textLength="369.0" lengthAdjust="spacing" style="white-space:pre">PLATFORM   FIELD      ALTITUDE       TIME</text>
<text x="574.5" y="831.5" font-size="15" fill="#fff" font-family='"Liberation Mono", monospace' font-weight="bold" textLength="495.0" lengthAdjust="spacing" style="white-space:pre">rhb_lowprf maxdz      0.50 km MSL    22-Aug-97,19:00:23</text>
<text x="574.5" y="846" font-size="15" fill="#fff" font-family='"Liberation Mono", monospace' font-weight="bold" textLength="495.0" lengthAdjust="spacing" style="white-space:pre">rhb_3d     maxdz      0.50 km MSL    22-Aug-97,19:01:20</text>
</svg>
</body></html>
